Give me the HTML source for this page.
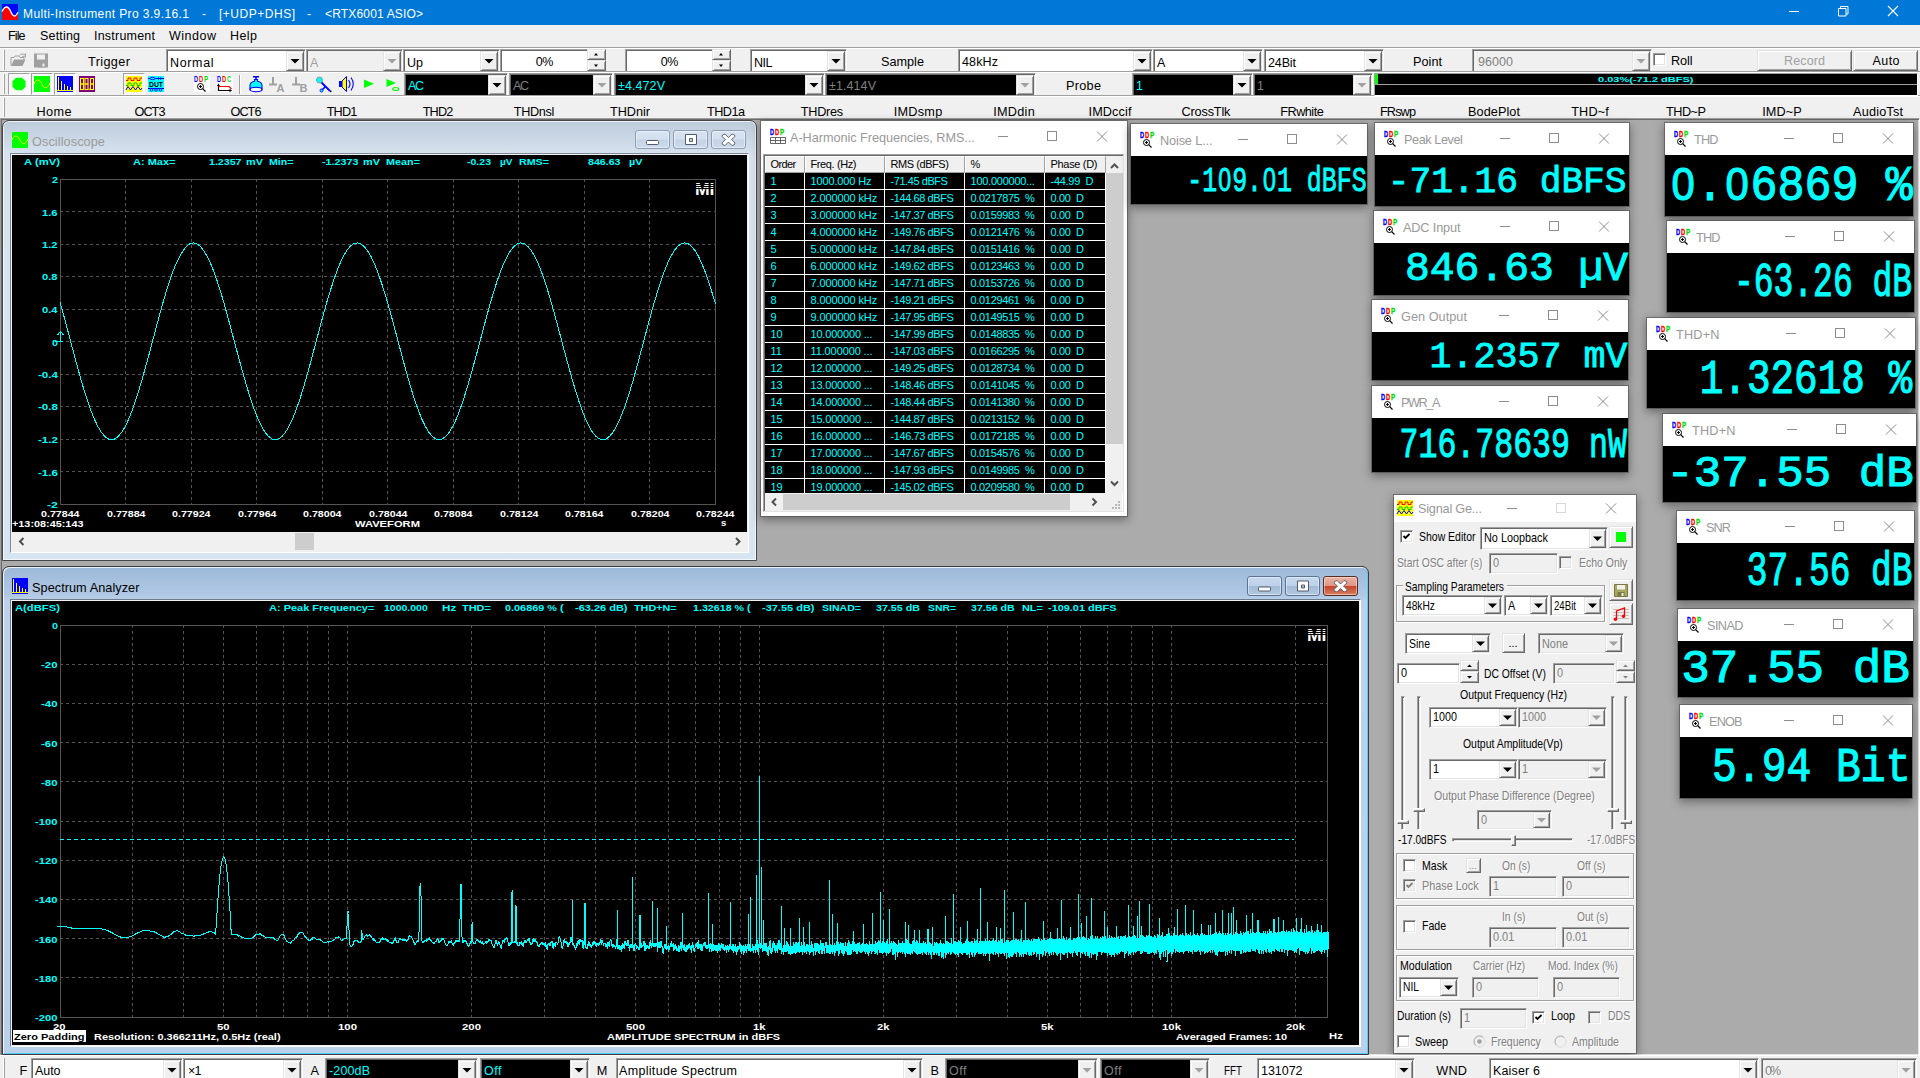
<!DOCTYPE html>
<html lang="en"><head><meta charset="utf-8"><title>Multi-Instrument Pro</title><style>
html,body{margin:0;padding:0}
body{width:1920px;height:1078px;overflow:hidden;background:#ababab;position:relative;font-family:'Liberation Sans',sans-serif;font-size:12px}
div{position:absolute;box-sizing:border-box}
.t{position:absolute;white-space:pre}
.a{position:absolute;overflow:visible}
.sunk{border:1px solid;border-color:#a0a0a0 #fff #fff #a0a0a0;box-shadow:inset 1px 1px 0 #696969,inset -1px -1px 0 #e3e3e3}
.sunk1{border:1px solid;border-color:#a0a0a0 #fff #fff #a0a0a0}
.btn{border:1px solid;border-color:#e3e3e3 #696969 #696969 #e3e3e3;box-shadow:inset 1px 1px 0 #fff,inset -1px -1px 0 #a0a0a0}
.pressed{border:1px solid;border-color:#a0a0a0 #fff #fff #a0a0a0}
.big{font-family:'Liberation Mono',monospace;color:#0ff;-webkit-text-stroke:.023em #0ff;transform-origin:100% 50%}
.z{font-family:'Liberation Sans',sans-serif;display:inline-block;font-size:.93em;width:.6452em;text-align:center;line-height:0}
.chk{border:1px solid;border-color:#a0a0a0 #fff #fff #a0a0a0;box-shadow:inset 1px 1px 0 #696969,inset -1px -1px 0 #e3e3e3}
</style></head><body>
<div style="left:0px;top:0px;width:1920px;height:25px;background:#0078d7;"></div>
<svg class="a" style="left:2px;top:4px" width="16" height="16"><rect width="16" height="16" fill="#00f"/><path d="M0 16V7.5C1.5 4.5 3.2 3 4.6 3C6.8 3 8 6 9.2 8.6C10.2 10.8 11.2 12 12.4 12C13.8 12 15 10.2 16 8.2V16z" fill="#f00"/><path d="M0 7.5C1.5 4.5 3.2 3 4.6 3C6.8 3 8 6 9.2 8.6C10.2 10.8 11.2 12 12.4 12C13.8 12 15 10.2 16 8.2" fill="none" stroke="#fff" stroke-width="1.3"/></svg>
<span class="t" style="left:23.00px;top:7px;font-size:12px;line-height:14px;color:#fff;letter-spacing:0.402px;">Multi-Instrument Pro 3.9.16.1</span>
<span class="t" style="left:202.00px;top:7px;font-size:12px;line-height:14px;color:#fff;">-</span>
<span class="t" style="left:219.00px;top:7px;font-size:12px;line-height:14px;color:#fff;letter-spacing:0.516px;">[+UDP+DHS]</span>
<span class="t" style="left:307.00px;top:7px;font-size:12px;line-height:14px;color:#fff;">-</span>
<span class="t" style="left:325.00px;top:7px;font-size:12px;line-height:14px;color:#fff;letter-spacing:0.166px;">&lt;RTX6001 ASIO&gt;</span>
<svg class="a" style="left:1780px;top:0" width="140" height="25"><path d="M9 11.5h10" stroke="#fff" stroke-width="1" fill="none"/><path d="M58.5 8.500h7.500v7.500h-7.500zM60.500 8.500v-2h7.500v7.500h-2" stroke="#fff" stroke-width="1" fill="none"/><path d="M108 6l10 10M118 6l-10 10" stroke="#fff" stroke-width="1.1" fill="none"/></svg>
<div style="left:0px;top:25px;width:1920px;height:22px;background:#f0f0f0;"></div>
<span class="t" style="left:8.00px;top:29px;font-size:12.5px;line-height:14px;color:#000;letter-spacing:-0.881px;">File</span>
<span class="t" style="left:40.00px;top:29px;font-size:12.5px;line-height:14px;color:#000;letter-spacing:0.181px;">Setting</span>
<span class="t" style="left:94.00px;top:29px;font-size:12.5px;line-height:14px;color:#000;letter-spacing:0.216px;">Instrument</span>
<span class="t" style="left:169.00px;top:29px;font-size:12.5px;line-height:14px;color:#000;letter-spacing:0.508px;">Window</span>
<span class="t" style="left:230.00px;top:29px;font-size:12.5px;line-height:14px;color:#000;letter-spacing:0.430px;">Help</span>
<div style="left:0px;top:47px;width:1920px;height:1px;background:#a0a0a0;"></div>
<div style="left:0px;top:48px;width:1920px;height:70px;background:#f0f0f0;"></div>
<div style="left:0px;top:48px;width:1920px;height:1px;background:#fff;"></div>
<div style="left:3px;top:50px;width:1px;height:20px;background:#fff;"></div>
<div style="left:4px;top:50px;width:1px;height:20px;background:#a0a0a0;"></div>
<div style="left:3px;top:74px;width:1px;height:20px;background:#fff;"></div>
<div style="left:4px;top:74px;width:1px;height:20px;background:#a0a0a0;"></div>
<div style="left:3px;top:98px;width:1px;height:19px;background:#fff;"></div>
<div style="left:4px;top:98px;width:1px;height:19px;background:#a0a0a0;"></div>
<svg class="a" style="left:10px;top:52px" width="40" height="17"><path d="M1 13.500V5.500h3l1-1.500h4l1 1.500h4v2" fill="none" stroke="#a0a0a0"/><path d="M1 14l3-6.500h11.500l-3 6.500z" fill="#a0a0a0"/><path d="M9.500 3.500c1.500-2 4-2 5.500-.5l.5-1.500v3.500h-3.500l1.500-1" fill="none" stroke="#a0a0a0"/><path d="M24 1.500h14v14h-14z" fill="#a0a0a0"/><rect x="27" y="2.500" width="8" height="5" fill="#f0f0f0"/><rect x="28" y="10.500" width="7" height="5" fill="#a0a0a0"/><rect x="32.500" y="11.500" width="2" height="3" fill="#f0f0f0"/></svg>
<span class="t" style="left:88.00px;top:55px;font-size:12.7px;line-height:14px;color:#000;letter-spacing:0.374px;">Trigger</span>
<div class="sunk" style="left:166px;top:49px;width:140px;height:24px;background:#fff;"></div>
<div class="btn" style="left:286px;top:51px;width:18px;height:20px;background:#f0f0f0;"></div>
<svg class="a" style="left:286px;top:51px" width="18" height="20"><path d="M4.5 8.0h9l-4.5 4.5z" fill="#000"/></svg>
<span class="t" style="left:170.00px;top:56px;font-size:12.5px;line-height:14px;color:#000;letter-spacing:0.643px;">Normal</span>
<div class="sunk" style="left:306px;top:49px;width:97px;height:24px;background:#f0f0f0;"></div>
<div class="btn" style="left:383px;top:51px;width:18px;height:20px;background:#f0f0f0;"></div>
<svg class="a" style="left:383px;top:51px" width="18" height="20"><path d="M4.5 8.0h9l-4.5 4.5z" fill="#a0a0a0"/></svg>
<span class="t" style="left:310.00px;top:56px;font-size:12.5px;line-height:14px;color:#a0a0a0;">A</span>
<div class="sunk" style="left:403px;top:49px;width:97px;height:24px;background:#fff;"></div>
<div class="btn" style="left:480px;top:51px;width:18px;height:20px;background:#f0f0f0;"></div>
<svg class="a" style="left:480px;top:51px" width="18" height="20"><path d="M4.5 8.0h9l-4.5 4.5z" fill="#000"/></svg>
<span class="t" style="left:407.00px;top:56px;font-size:12.5px;line-height:14px;color:#000;letter-spacing:0.021px;">Up</span>
<div class="sunk" style="left:500px;top:49px;width:89px;height:24px;background:#fff;"></div>
<span class="t" style="left:535.75px;top:55px;font-size:12.5px;line-height:14px;color:#000;letter-spacing:-0.566px;">0%</span>
<div class="btn" style="left:587px;top:49px;width:19px;height:11px;background:#f0f0f0;"></div>
<div class="btn" style="left:587px;top:60px;width:19px;height:11px;background:#f0f0f0;"></div>
<svg class="a" style="left:587px;top:49px" width="19" height="22"><path d="M7 6.500h4l-2-2.500zM7 15.500h4l-2 2.500z" fill="#000"/></svg>
<div class="sunk" style="left:625px;top:49px;width:89px;height:24px;background:#fff;"></div>
<span class="t" style="left:660.75px;top:55px;font-size:12.5px;line-height:14px;color:#000;letter-spacing:-0.566px;">0%</span>
<div class="btn" style="left:712px;top:49px;width:19px;height:11px;background:#f0f0f0;"></div>
<div class="btn" style="left:712px;top:60px;width:19px;height:11px;background:#f0f0f0;"></div>
<svg class="a" style="left:712px;top:49px" width="19" height="22"><path d="M7 6.500h4l-2-2.500zM7 15.500h4l-2 2.500z" fill="#000"/></svg>
<div class="sunk" style="left:750px;top:49px;width:97px;height:24px;background:#fff;"></div>
<div class="btn" style="left:827px;top:51px;width:18px;height:20px;background:#f0f0f0;"></div>
<svg class="a" style="left:827px;top:51px" width="18" height="20"><path d="M4.5 8.0h9l-4.5 4.5z" fill="#000"/></svg>
<span class="t" style="left:754.00px;top:56px;font-size:12.5px;line-height:14px;color:#000;letter-spacing:-0.476px;">NIL</span>
<span class="t" style="left:881.00px;top:55px;font-size:12.7px;line-height:14px;color:#000;letter-spacing:-0.013px;">Sample</span>
<div class="sunk" style="left:958px;top:49px;width:195px;height:24px;background:#fff;"></div>
<div class="btn" style="left:1133px;top:51px;width:18px;height:20px;background:#f0f0f0;"></div>
<svg class="a" style="left:1133px;top:51px" width="18" height="20"><path d="M4.5 8.0h9l-4.5 4.5z" fill="#000"/></svg>
<span class="t" style="left:962.00px;top:55px;font-size:12.5px;line-height:14px;color:#000;letter-spacing:0.142px;">48kHz</span>
<div class="sunk" style="left:1153px;top:49px;width:110px;height:24px;background:#fff;"></div>
<div class="btn" style="left:1243px;top:51px;width:18px;height:20px;background:#f0f0f0;"></div>
<svg class="a" style="left:1243px;top:51px" width="18" height="20"><path d="M4.5 8.0h9l-4.5 4.5z" fill="#000"/></svg>
<span class="t" style="left:1157.00px;top:56px;font-size:12.5px;line-height:14px;color:#000;">A</span>
<div class="sunk" style="left:1264px;top:49px;width:120px;height:24px;background:#fff;"></div>
<div class="btn" style="left:1364px;top:51px;width:18px;height:20px;background:#f0f0f0;"></div>
<svg class="a" style="left:1364px;top:51px" width="18" height="20"><path d="M4.5 8.0h9l-4.5 4.5z" fill="#000"/></svg>
<span class="t" style="left:1268.00px;top:56px;font-size:12.5px;line-height:14px;color:#000;letter-spacing:-0.123px;">24Bit</span>
<span class="t" style="left:1413.00px;top:55px;font-size:12.7px;line-height:14px;color:#000;letter-spacing:0.013px;">Point</span>
<div class="sunk" style="left:1472px;top:49px;width:180px;height:24px;background:#f0f0f0;"></div>
<div class="btn" style="left:1632px;top:51px;width:18px;height:20px;background:#f0f0f0;"></div>
<svg class="a" style="left:1632px;top:51px" width="18" height="20"><path d="M4.5 8.0h9l-4.5 4.5z" fill="#a0a0a0"/></svg>
<span class="t" style="left:1478.00px;top:55px;font-size:12.5px;line-height:14px;color:#808080;letter-spacing:0.060px;">96000</span>
<div class="chk" style="left:1653px;top:53px;width:13px;height:13px;background:#fff;"></div>
<span class="t" style="left:1671.00px;top:54px;font-size:12.7px;line-height:14px;color:#000;letter-spacing:-0.126px;">Roll</span>
<div class="btn" style="left:1757px;top:50px;width:95px;height:21px;background:#f0f0f0;"></div>
<span class="t" style="left:1784.00px;top:54px;font-size:12.5px;line-height:14px;color:#a0a0a0;letter-spacing:0.141px;">Record</span>
<div class="btn" style="left:1853px;top:50px;width:65px;height:21px;background:#f0f0f0;"></div>
<span class="t" style="left:1872.50px;top:54px;font-size:12.5px;line-height:14px;color:#000;letter-spacing:0.428px;">Auto</span>
<div class="pressed" style="left:8px;top:73px;width:22px;height:22px;background:#f8f8f8;"></div>
<div class="pressed" style="left:31px;top:73px;width:22px;height:22px;background:#f8f8f8;"></div>
<div class="pressed" style="left:54px;top:73px;width:22px;height:22px;background:#f8f8f8;"></div>
<div class="pressed" style="left:123px;top:73px;width:22px;height:22px;background:#f8f8f8;"></div>
<svg class="a" style="left:0;top:73px" width="404" height="22">
<path d="M16 4.800h6l3.500 3.500v5.400l-3.500 3.500h-6l-3.500-3.500v-5.400z" fill="#0f0"/>
<g transform="translate(34,3)"><rect width="16" height="16" fill="#0f0"/><path d="M0 8c1.500-4.500 5-6 7.500-.5s5.500 6 8.500-.5" fill="none" stroke="#ff0" stroke-width="1"/></g>
<g transform="translate(57,3)"><rect width="16" height="16" fill="#00f"/><path d="M1.500 1v13.500M4.500 5v9.500M7.500 8v6.500M10.500 10v4.500M13.500 11v3.500M0 14.500h16" stroke="#ff0" fill="none"/></g>
<g transform="translate(79,3)"><rect width="16" height="16" fill="#800080"/><g fill="none" stroke="#ff0" stroke-width="1"><rect x="1.500" y="2.500" width="3" height="5.500"/><rect x="1.500" y="8" width="3" height="5.500"/><rect x="6" y="2.500" width="3" height="5.500"/><rect x="6" y="8" width="3" height="5.500"/><rect x="11.500" y="2.500" width="3" height="5.500"/><rect x="11.500" y="8" width="3" height="5.500"/></g><rect x="9.700" y="12.500" width="1" height="1.500" fill="#ff0"/></g>
<g transform="translate(126,3)"><rect width="16" height="16" fill="#ff0"/><path d="M0 4.500h2v-2.500h3v2.500h3v-2.500h3v2.500h3v-2.500h2" fill="none" stroke="#f00"/><path d="M0 9.500h2v-2.500h3v2.500h3v-2.500h3v2.500h3v-2.500h2" fill="none" stroke="#0c0"/><path d="M0 14l2-3.500 2.500 3.500 2.500-3.500 2.500 3.500 2.500-3.500 2.500 3.500 1.500-2" fill="none" stroke="#00f"/></g>
<g transform="translate(148,3)"><rect width="16" height="16" fill="#0ff"/><path d="M0 2.500h16M0 12.500h16" stroke="#00f" fill="none"/><ellipse cx="4.500" cy="2.500" rx="2.500" ry="1.200" fill="#0ff" stroke="#00f"/><path d="M9 2.500l2-1.500v3zM14 2.500l-2-1.500v3z" fill="#00f"/><circle cx="3.500" cy="14" r="1.300" fill="#0ff" stroke="#00f" stroke-width=".8"/><circle cx="8" cy="14" r="1.300" fill="#0ff" stroke="#00f" stroke-width=".8"/><circle cx="12.500" cy="14" r="1.300" fill="#0ff" stroke="#00f" stroke-width=".8"/><text x="8" y="10.500" font-family="Liberation Sans,sans-serif" font-weight="bold" font-size="8" text-anchor="middle" fill="#000" textLength="14" lengthAdjust="spacingAndGlyphs">DUT</text></g>
<g transform="translate(194,3)"><rect width="16" height="16" fill="#fff"/><text x="0" y="6" fill="#00f" textLength="4.200" lengthAdjust="spacingAndGlyphs" font-family="Liberation Sans,sans-serif" font-weight="bold" font-size="8.400">D</text><text x="5" y="6" fill="#f00" textLength="4.200" lengthAdjust="spacingAndGlyphs" font-family="Liberation Sans,sans-serif" font-weight="bold" font-size="8.400">D</text><text x="10" y="6" fill="#0d0" textLength="4.200" lengthAdjust="spacingAndGlyphs" font-family="Liberation Sans,sans-serif" font-weight="bold" font-size="8.400">P</text><circle cx="6.500" cy="10.500" r="3" fill="none" stroke="#000"/><path d="M8.700 12.700l2.800 2.800" stroke="#000" stroke-width="1.200"/><path d="M5 10.500h3M6.500 9v3" stroke="#000" stroke-width="1"/></g>
<g transform="translate(217,3)"><rect width="16" height="16" fill="#fff"/><text x="0" y="6" fill="#00f" textLength="4.200" lengthAdjust="spacingAndGlyphs" font-family="Liberation Sans,sans-serif" font-weight="bold" font-size="8.400">D</text><text x="5" y="6" fill="#f00" textLength="4.200" lengthAdjust="spacingAndGlyphs" font-family="Liberation Sans,sans-serif" font-weight="bold" font-size="8.400">D</text><text x="10" y="6" fill="#0d0" textLength="4.200" lengthAdjust="spacingAndGlyphs" font-family="Liberation Sans,sans-serif" font-weight="bold" font-size="8.400">C</text><path d="M1.500 9v5.500h12" fill="none" stroke="#000" stroke-width="1.200"/><path d="M1.500 10.500h10.500l2.500 2.500" fill="none" stroke="#f00" stroke-width="1.200"/><path d="M0 10l1.500-2.500 1.500 2.500zM12.500 12.800l2.500 1.700-2.500 1.700z" fill="#000"/></g>
<path d="M239.500 2v19" stroke="#a0a0a0"/><path d="M240.500 2v19" stroke="#fff"/>
<g transform="translate(248,3)"><path d="M5 .800h6M8 .800v3" stroke="#00f" stroke-width="1.400" fill="none"/><path d="M6.500 3.500h3v1.800c3 .5 4.500 2.200 4.500 4.500v4h-12v-4c0-2.300 1.500-4 4.500-4.500z" fill="#0ff" stroke="#00f" stroke-width="1.100"/><ellipse cx="8" cy="13.500" rx="6" ry="2.200" fill="#fff" stroke="#00f" stroke-width="1.100"/></g>
<g transform="translate(269,3)"><path d="M4 1v7.500M0 8.500h8" stroke="#a0a0a0" stroke-width="2" fill="none"/><text x="7.500" y="15.500" font-family="Liberation Sans,sans-serif" font-weight="bold" font-size="11" fill="#a0a0a0">A</text></g>
<g transform="translate(292,3)"><path d="M4 1v7.500M0 8.500h8" stroke="#a0a0a0" stroke-width="2" fill="none"/><text x="7.500" y="15.500" font-family="Liberation Sans,sans-serif" font-weight="bold" font-size="11" fill="#a0a0a0">B</text></g>
<g transform="translate(316,3)"><path d="M5 6l9 9" stroke="#00f" stroke-width="1.800"/><path d="M9.500 10.500l-3.500 3.500" stroke="#00f" stroke-width="1.600"/><circle cx="3.500" cy="4" r="3" fill="#0ff" stroke="#888" stroke-width=".8"/><circle cx="5.500" cy="14.500" r="1.500" fill="#0ff" stroke="#00f" stroke-width=".9"/><circle cx="14.800" cy="15.300" r=".9" fill="#000"/></g>
<g transform="translate(338,3)"><rect x="1" y="5" width="3" height="6" fill="#00f"/><path d="M4 5l4.500-4.500v15l-4.500-4.500z" fill="#ff0" stroke="#00f" stroke-width="1"/><path d="M10.500 4q3 4 0 8M13 1.500q4.500 6.500 0 13" fill="none" stroke="#00f" stroke-width="1.100"/></g>
<path d="M364 6.500l10 4.200-10 4.200z" fill="#0f0"/>
<path d="M386.500 6l9.500 4-9.500 4z" fill="#0f0"/><ellipse cx="395.700" cy="16" rx="3" ry="1.500" fill="none" stroke="#0f0" stroke-width="1.200"/>
</svg>
<div class="sunk" style="left:404px;top:73px;width:104px;height:24px;background:#000;"></div>
<div class="btn" style="left:488px;top:75px;width:18px;height:20px;background:#f0f0f0;"></div>
<svg class="a" style="left:488px;top:75px" width="18" height="20"><path d="M4.5 8.0h9l-4.5 4.5z" fill="#000"/></svg>
<span class="t" style="left:408.00px;top:79px;font-size:12.5px;line-height:14px;color:#0ff;letter-spacing:-1.365px;">AC</span>
<div class="sunk" style="left:509px;top:73px;width:104px;height:24px;background:#000;"></div>
<div class="btn" style="left:593px;top:75px;width:18px;height:20px;background:#f0f0f0;"></div>
<svg class="a" style="left:593px;top:75px" width="18" height="20"><path d="M4.5 8.0h9l-4.5 4.5z" fill="#a0a0a0"/></svg>
<span class="t" style="left:513.00px;top:79px;font-size:12.5px;line-height:14px;color:#808080;letter-spacing:-1.365px;">AC</span>
<div class="sunk" style="left:614px;top:73px;width:211px;height:24px;background:#000;"></div>
<div class="btn" style="left:805px;top:75px;width:18px;height:20px;background:#f0f0f0;"></div>
<svg class="a" style="left:805px;top:75px" width="18" height="20"><path d="M4.5 8.0h9l-4.5 4.5z" fill="#000"/></svg>
<span class="t" style="left:618.00px;top:79px;font-size:12.5px;line-height:14px;color:#0ff;letter-spacing:0.087px;">±4.472V</span>
<div class="sunk" style="left:825px;top:73px;width:211px;height:24px;background:#000;"></div>
<div class="btn" style="left:1016px;top:75px;width:18px;height:20px;background:#f0f0f0;"></div>
<svg class="a" style="left:1016px;top:75px" width="18" height="20"><path d="M4.5 8.0h9l-4.5 4.5z" fill="#a0a0a0"/></svg>
<span class="t" style="left:829.00px;top:79px;font-size:12.5px;line-height:14px;color:#808080;letter-spacing:0.087px;">±1.414V</span>
<span class="t" style="left:1066.00px;top:79px;font-size:12.7px;line-height:14px;color:#000;letter-spacing:0.277px;">Probe</span>
<div class="sunk" style="left:1132px;top:73px;width:121px;height:24px;background:#000;"></div>
<div class="btn" style="left:1233px;top:75px;width:18px;height:20px;background:#f0f0f0;"></div>
<svg class="a" style="left:1233px;top:75px" width="18" height="20"><path d="M4.5 8.0h9l-4.5 4.5z" fill="#000"/></svg>
<span class="t" style="left:1136.00px;top:79px;font-size:12.5px;line-height:14px;color:#0ff;">1</span>
<div class="sunk" style="left:1253px;top:73px;width:120px;height:24px;background:#000;"></div>
<div class="btn" style="left:1353px;top:75px;width:18px;height:20px;background:#f0f0f0;"></div>
<svg class="a" style="left:1353px;top:75px" width="18" height="20"><path d="M4.5 8.0h9l-4.5 4.5z" fill="#a0a0a0"/></svg>
<span class="t" style="left:1257.00px;top:79px;font-size:12.5px;line-height:14px;color:#808080;">1</span>
<div style="left:0px;top:71px;width:1920px;height:1px;background:#a0a0a0;"></div>
<div style="left:0px;top:72px;width:1920px;height:1px;background:#fff;"></div>
<div style="left:0px;top:95px;width:1920px;height:1px;background:#a0a0a0;"></div>
<div style="left:0px;top:96px;width:1920px;height:1px;background:#fff;"></div>
<div class="sunk1" style="left:1374px;top:73px;width:544px;height:23px;background:#000;"></div>
<div style="left:1375px;top:84px;width:542px;height:1px;background:#a0a0a0;"></div>
<div style="left:1375px;top:74px;width:3px;height:10px;background:#0f0;"></div>
<span class="t" style="left:1598.00px;top:75px;font-size:8px;line-height:9px;color:#0ff;font-weight:bold;transform:scaleX(1.3769);transform-origin:0 50%;">0.03%(-71.2 dBFS)</span>
<span class="t" style="left:36.50px;top:105px;font-size:12.7px;line-height:14px;color:#000;letter-spacing:0.374px;">Home</span>
<span class="t" style="left:134.50px;top:105px;font-size:12.7px;line-height:14px;color:#000;letter-spacing:-0.957px;">OCT3</span>
<span class="t" style="left:230.50px;top:105px;font-size:12.7px;line-height:14px;color:#000;letter-spacing:-0.957px;">OCT6</span>
<span class="t" style="left:326.75px;top:105px;font-size:12.7px;line-height:14px;color:#000;letter-spacing:-0.888px;">THD1</span>
<span class="t" style="left:422.75px;top:105px;font-size:12.7px;line-height:14px;color:#000;letter-spacing:-0.888px;">THD2</span>
<span class="t" style="left:513.75px;top:105px;font-size:12.7px;line-height:14px;color:#000;letter-spacing:-0.367px;">THDnsl</span>
<span class="t" style="left:610.00px;top:105px;font-size:12.7px;line-height:14px;color:#000;letter-spacing:-0.043px;">THDnir</span>
<span class="t" style="left:707.00px;top:105px;font-size:12.7px;line-height:14px;color:#000;letter-spacing:-0.557px;">THD1a</span>
<span class="t" style="left:800.75px;top:105px;font-size:12.7px;line-height:14px;color:#000;letter-spacing:-0.249px;">THDres</span>
<span class="t" style="left:893.75px;top:105px;font-size:12.7px;line-height:14px;color:#000;letter-spacing:0.245px;">IMDsmp</span>
<span class="t" style="left:993.25px;top:105px;font-size:12.7px;line-height:14px;color:#000;letter-spacing:0.254px;">IMDdin</span>
<span class="t" style="left:1088.50px;top:105px;font-size:12.7px;line-height:14px;color:#000;letter-spacing:0.112px;">IMDccif</span>
<span class="t" style="left:1181.50px;top:105px;font-size:12.7px;line-height:14px;color:#000;letter-spacing:-0.156px;">CrossTlk</span>
<span class="t" style="left:1280.25px;top:105px;font-size:12.7px;line-height:14px;color:#000;letter-spacing:-0.513px;">FRwhite</span>
<span class="t" style="left:1380.00px;top:105px;font-size:12.7px;line-height:14px;color:#000;letter-spacing:-0.879px;">FRswp</span>
<span class="t" style="left:1468.00px;top:105px;font-size:12.7px;line-height:14px;color:#000;letter-spacing:0.065px;">BodePlot</span>
<span class="t" style="left:1571.25px;top:105px;font-size:12.7px;line-height:14px;color:#000;letter-spacing:0.113px;">THD~f</span>
<span class="t" style="left:1666.00px;top:105px;font-size:12.7px;line-height:14px;color:#000;letter-spacing:-0.497px;">THD~P</span>
<span class="t" style="left:1762.25px;top:105px;font-size:12.7px;line-height:14px;color:#000;letter-spacing:0.083px;">IMD~P</span>
<span class="t" style="left:1853.00px;top:105px;font-size:12.7px;line-height:14px;color:#000;letter-spacing:0.184px;">AudioTst</span>
<div style="left:0px;top:118px;width:1920px;height:938px;background:#ababab;border:1px solid;border-color:#a0a0a0 #fff #fff #a0a0a0;box-shadow:inset 1px 1px 0 #696969,inset -1px -1px 0 #e3e3e3;"></div>
<div style="left:2px;top:120px;width:755px;height:441px;background:linear-gradient(#bccbdc 0,#cdd9e7 20px,#d8e3ef 34px,#d7e4f2 100%);border:1px solid #474747;border-radius:7px 7px 0 0;box-shadow:inset 0 0 0 1px rgba(255,255,255,.7);"></div>
<svg class="a" style="left:12px;top:132px" width="16" height="16"><rect width="16" height="16" fill="#0f0"/><path d="M0 8c1.500-4.500 5-6 7.500-.5s5.500 6 8.500-.5" fill="none" stroke="#ff0"/></svg>
<span class="t" style="left:32.00px;top:135px;font-size:12.7px;line-height:14px;color:#9a9a9a;letter-spacing:0.091px;">Oscilloscope</span>
<div style="left:635px;top:130px;width:35px;height:19px;background:none;background:linear-gradient(#d9e4f1 0,#d2dfee 47%,#c4d3e5 53%,#cddbeb 100%);border:1px solid #8d9db5;border-radius:3px;box-shadow:inset 0 0 0 1px rgba(255,255,255,.45);"></div>
<div style="left:673px;top:130px;width:35px;height:19px;background:none;background:linear-gradient(#d9e4f1 0,#d2dfee 47%,#c4d3e5 53%,#cddbeb 100%);border:1px solid #8d9db5;border-radius:3px;box-shadow:inset 0 0 0 1px rgba(255,255,255,.45);"></div>
<div style="left:711px;top:130px;width:35px;height:19px;background:none;background:linear-gradient(#d9e4f1 0,#d2dfee 47%,#c4d3e5 53%,#cddbeb 100%);border:1px solid #8d9db5;border-radius:3px;box-shadow:inset 0 0 0 1px rgba(255,255,255,.45);"></div>
<svg class="a" style="left:635px;top:130px" width="111" height="20"><rect x="11.500" y="10.5" width="12" height="4" rx="1" fill="#fff" stroke="#535a6a" stroke-width="1"/><path d="M50.500 4.5h11v10h-11zM54.500 8.5h3v3h-3z" fill="#fff" fill-rule="evenodd" stroke="#535a6a" stroke-width="1"/><path transform="translate(0,0)" d="M87.500 5l2.500-1 3.500 3.500 3.500-3.500 2.500 1 .5 1.500-3.500 3 3.500 3.500-.5 1.500-2.500 1-3.500-3.500-3.500 3.500-2.500-1-.5-1.500 3.500-3.500-3.500-3z" fill="#fff" stroke="#535a6a" stroke-width=".9"/></svg>
<div style="left:10px;top:153px;width:739px;height:400px;background:#f0f0f0;border:1px solid;border-color:#7f8a99 #fff #fff #7f8a99;"></div>
<div style="left:12px;top:155px;width:735px;height:377px;background:#000;"></div>
<div style="left:12px;top:532px;width:735px;height:19px;background:#f0f0f0;"></div>
<div style="left:295px;top:533px;width:19px;height:17px;background:#cdcdcd;"></div>
<svg class="a" style="left:12px;top:532px" width="735" height="19"><path d="M11.500 6l-3.500 3.500 3.500 3.500M724 6l3.500 3.500-3.500 3.500" fill="none" stroke="#505050" stroke-width="2"/></svg>
<svg class="a" style="left:0;top:0" width="760" height="560" shape-rendering="crispEdges"><rect x="60.5" y="179.5" width="655" height="325" fill="none" stroke="#545454"/><path d="M125.5 179V504M60 211.5H715M191.5 179V504M60 244.5H715M256.5 179V504M60 276.5H715M322.5 179V504M60 309.5H715M387.5 179V504M60 341.5H715M453.5 179V504M60 374.5H715M518.5 179V504M60 406.5H715M584.5 179V504M60 439.5H715M649.5 179V504M60 471.5H715" stroke="#545454" stroke-dasharray="3 3" fill="none"/><clipPath id="oc"><rect x="60" y="179" width="656" height="325"/></clipPath><polyline clip-path="url(#oc)" fill="none" stroke="#0ff" stroke-width="1" points="56.9,292.1 60.4,303.6 63.8,315.8 67.2,328.5 70.6,341.3 74.0,354.1 77.4,366.8 80.8,379.0 84.2,390.5 87.6,401.2 91.1,410.9 94.5,419.4 97.9,426.5 101.3,432.2 104.7,436.3 108.1,438.9 111.5,439.7 114.9,438.9 118.3,436.3 121.8,432.2 125.2,426.5 128.6,419.4 132.0,410.9 135.4,401.2 138.8,390.5 142.2,379.0 145.6,366.8 149.1,354.1 152.5,341.3 155.9,328.5 159.3,315.8 162.7,303.6 166.1,292.1 169.5,281.4 172.9,271.7 176.3,263.2 179.8,256.1 183.2,250.4 186.6,246.3 190.0,243.7 193.4,242.9 196.8,243.7 200.2,246.3 203.6,250.4 207.0,256.1 210.5,263.2 213.9,271.7 217.3,281.4 220.7,292.1 224.1,303.6 227.5,315.8 230.9,328.5 234.3,341.3 237.7,354.1 241.2,366.8 244.6,379.0 248.0,390.5 251.4,401.2 254.8,410.9 258.2,419.4 261.6,426.5 265.0,432.2 268.5,436.3 271.9,438.9 275.3,439.7 278.7,438.9 282.1,436.3 285.5,432.2 288.9,426.5 292.3,419.4 295.7,410.9 299.2,401.2 302.6,390.5 306.0,379.0 309.4,366.8 312.8,354.1 316.2,341.3 319.6,328.5 323.0,315.8 326.4,303.6 329.9,292.1 333.3,281.4 336.7,271.7 340.1,263.2 343.5,256.1 346.9,250.4 350.3,246.3 353.7,243.7 357.1,242.9 360.6,243.7 364.0,246.3 367.4,250.4 370.8,256.1 374.2,263.2 377.6,271.7 381.0,281.4 384.4,292.1 387.9,303.6 391.3,315.8 394.7,328.5 398.1,341.3 401.5,354.1 404.9,366.8 408.3,379.0 411.7,390.5 415.1,401.2 418.6,410.9 422.0,419.4 425.4,426.5 428.8,432.2 432.2,436.3 435.6,438.9 439.0,439.7 442.4,438.9 445.8,436.3 449.3,432.2 452.7,426.5 456.1,419.4 459.5,410.9 462.9,401.2 466.3,390.5 469.7,379.0 473.1,366.8 476.6,354.1 480.0,341.3 483.4,328.5 486.8,315.8 490.2,303.6 493.6,292.1 497.0,281.4 500.4,271.7 503.8,263.2 507.3,256.1 510.7,250.4 514.1,246.3 517.5,243.7 520.9,242.9 524.3,243.7 527.7,246.3 531.1,250.4 534.5,256.1 538.0,263.2 541.4,271.7 544.8,281.4 548.2,292.1 551.6,303.6 555.0,315.8 558.4,328.5 561.8,341.3 565.2,354.1 568.7,366.8 572.1,379.0 575.5,390.5 578.9,401.2 582.3,410.9 585.7,419.4 589.1,426.5 592.5,432.2 596.0,436.3 599.4,438.9 602.8,439.7 606.2,438.9 609.6,436.3 613.0,432.2 616.4,426.5 619.8,419.4 623.2,410.9 626.7,401.2 630.1,390.5 633.5,379.0 636.9,366.8 640.3,354.1 643.7,341.3 647.1,328.5 650.5,315.8 653.9,303.6 657.4,292.1 660.8,281.4 664.2,271.7 667.6,263.2 671.0,256.1 674.4,250.4 677.8,246.3 681.2,243.7 684.6,242.9 688.1,243.7 691.5,246.3 694.9,250.4 698.3,256.1 701.7,263.2 705.1,271.7 708.5,281.4 711.9,292.1 715.4,303.6"/><path d="M60.500 332v10M57.500 335l3-3.500 3 3.500M55 341.500h8" stroke="#0ff" fill="none" stroke-width="1"/></svg>
<svg class="a" style="left:695px;top:183px" width="20" height="12"><text x="0" y="11.800" font-family="Liberation Sans,sans-serif" font-weight="bold" font-size="16" fill="#fff" textLength="19.500" lengthAdjust="spacingAndGlyphs">MI</text><path d="M0 1.500h20M0 3.500h20M0 5.500h20" stroke="#000" stroke-width="1"/></svg>
<span class="t" style="left:24.00px;top:156px;font-size:9.6px;line-height:11px;color:#0ff;font-weight:bold;transform:scaleX(1.1773);transform-origin:0 50%;">A (mV)</span>
<span class="t" style="left:133.00px;top:156px;font-size:9.6px;line-height:11px;color:#0ff;font-weight:bold;transform:scaleX(1.1462);transform-origin:0 50%;">A: Max=</span>
<span class="t" style="left:208.50px;top:156px;font-size:9.6px;line-height:11px;color:#0ff;font-weight:bold;transform:scaleX(1.1068);transform-origin:0 50%;">1.2357</span>
<span class="t" style="left:245.50px;top:156px;font-size:9.6px;line-height:11px;color:#0ff;font-weight:bold;transform:scaleX(1.1379);transform-origin:0 50%;">mV</span>
<span class="t" style="left:268.50px;top:156px;font-size:9.6px;line-height:11px;color:#0ff;font-weight:bold;transform:scaleX(1.1069);transform-origin:0 50%;">Min=</span>
<span class="t" style="left:322.00px;top:156px;font-size:9.6px;line-height:11px;color:#0ff;font-weight:bold;transform:scaleX(1.1210);transform-origin:0 50%;">-1.2373</span>
<span class="t" style="left:363.00px;top:156px;font-size:9.6px;line-height:11px;color:#0ff;font-weight:bold;transform:scaleX(1.1379);transform-origin:0 50%;">mV</span>
<span class="t" style="left:386.00px;top:156px;font-size:9.6px;line-height:11px;color:#0ff;font-weight:bold;transform:scaleX(1.1278);transform-origin:0 50%;">Mean=</span>
<span class="t" style="left:467.00px;top:156px;font-size:9.6px;line-height:11px;color:#0ff;font-weight:bold;transform:scaleX(1.0968);transform-origin:0 50%;">-0.23</span>
<span class="t" style="left:500.00px;top:156px;font-size:9.6px;line-height:11px;color:#0ff;font-weight:bold;transform:scaleX(1.0474);transform-origin:0 50%;">µV</span>
<span class="t" style="left:519.00px;top:156px;font-size:9.6px;line-height:11px;color:#0ff;font-weight:bold;transform:scaleX(1.1136);transform-origin:0 50%;">RMS=</span>
<span class="t" style="left:588.00px;top:156px;font-size:9.6px;line-height:11px;color:#0ff;font-weight:bold;transform:scaleX(1.1068);transform-origin:0 50%;">846.63</span>
<span class="t" style="left:629.00px;top:156px;font-size:9.6px;line-height:11px;color:#0ff;font-weight:bold;transform:scaleX(1.1312);transform-origin:0 50%;">µV</span>
<span class="t" style="left:51.80px;top:174px;font-size:9.8px;line-height:11px;color:#0ff;font-weight:bold;transform:scaleX(1.1008);transform-origin:0 50%;">2</span>
<span class="t" style="left:42.30px;top:207px;font-size:9.8px;line-height:11px;color:#0ff;font-weight:bold;transform:scaleX(1.1377);transform-origin:0 50%;">1.6</span>
<span class="t" style="left:42.30px;top:239px;font-size:9.8px;line-height:11px;color:#0ff;font-weight:bold;transform:scaleX(1.1377);transform-origin:0 50%;">1.2</span>
<span class="t" style="left:42.30px;top:271px;font-size:9.8px;line-height:11px;color:#0ff;font-weight:bold;transform:scaleX(1.1377);transform-origin:0 50%;">0.8</span>
<span class="t" style="left:42.30px;top:304px;font-size:9.8px;line-height:11px;color:#0ff;font-weight:bold;transform:scaleX(1.1377);transform-origin:0 50%;">0.4</span>
<span class="t" style="left:51.80px;top:337px;font-size:9.8px;line-height:11px;color:#0ff;font-weight:bold;transform:scaleX(1.1008);transform-origin:0 50%;">0</span>
<span class="t" style="left:37.80px;top:369px;font-size:9.8px;line-height:11px;color:#0ff;font-weight:bold;transform:scaleX(1.1843);transform-origin:0 50%;">-0.4</span>
<span class="t" style="left:37.80px;top:401px;font-size:9.8px;line-height:11px;color:#0ff;font-weight:bold;transform:scaleX(1.1843);transform-origin:0 50%;">-0.8</span>
<span class="t" style="left:37.80px;top:434px;font-size:9.8px;line-height:11px;color:#0ff;font-weight:bold;transform:scaleX(1.1843);transform-origin:0 50%;">-1.2</span>
<span class="t" style="left:37.80px;top:467px;font-size:9.8px;line-height:11px;color:#0ff;font-weight:bold;transform:scaleX(1.1843);transform-origin:0 50%;">-1.6</span>
<span class="t" style="left:46.80px;top:499px;font-size:9.8px;line-height:11px;color:#0ff;font-weight:bold;transform:scaleX(1.2623);transform-origin:0 50%;">-2</span>
<span class="t" style="left:41.25px;top:508px;font-size:9.6px;line-height:11px;color:#fff;font-weight:bold;transform:scaleX(1.1094);transform-origin:0 50%;">0.77844</span>
<span class="t" style="left:106.75px;top:508px;font-size:9.6px;line-height:11px;color:#fff;font-weight:bold;transform:scaleX(1.1094);transform-origin:0 50%;">0.77884</span>
<span class="t" style="left:172.25px;top:508px;font-size:9.6px;line-height:11px;color:#fff;font-weight:bold;transform:scaleX(1.1094);transform-origin:0 50%;">0.77924</span>
<span class="t" style="left:237.75px;top:508px;font-size:9.6px;line-height:11px;color:#fff;font-weight:bold;transform:scaleX(1.1094);transform-origin:0 50%;">0.77964</span>
<span class="t" style="left:303.25px;top:508px;font-size:9.6px;line-height:11px;color:#fff;font-weight:bold;transform:scaleX(1.1094);transform-origin:0 50%;">0.78004</span>
<span class="t" style="left:368.75px;top:508px;font-size:9.6px;line-height:11px;color:#fff;font-weight:bold;transform:scaleX(1.1094);transform-origin:0 50%;">0.78044</span>
<span class="t" style="left:434.25px;top:508px;font-size:9.6px;line-height:11px;color:#fff;font-weight:bold;transform:scaleX(1.1094);transform-origin:0 50%;">0.78084</span>
<span class="t" style="left:499.75px;top:508px;font-size:9.6px;line-height:11px;color:#fff;font-weight:bold;transform:scaleX(1.1094);transform-origin:0 50%;">0.78124</span>
<span class="t" style="left:565.25px;top:508px;font-size:9.6px;line-height:11px;color:#fff;font-weight:bold;transform:scaleX(1.1094);transform-origin:0 50%;">0.78164</span>
<span class="t" style="left:630.75px;top:508px;font-size:9.6px;line-height:11px;color:#fff;font-weight:bold;transform:scaleX(1.1094);transform-origin:0 50%;">0.78204</span>
<span class="t" style="left:696.25px;top:508px;font-size:9.6px;line-height:11px;color:#fff;font-weight:bold;transform:scaleX(1.1094);transform-origin:0 50%;">0.78244</span>
<span class="t" style="left:12.00px;top:518px;font-size:9.6px;line-height:11px;color:#fff;font-weight:bold;transform:scaleX(1.1304);transform-origin:0 50%;">+13:08:45:143</span>
<span class="t" style="left:355.00px;top:518px;font-size:9.6px;line-height:11px;color:#fff;font-weight:bold;transform:scaleX(1.1645);transform-origin:0 50%;">WAVEFORM</span>
<span class="t" style="left:721.00px;top:517px;font-size:9.6px;line-height:11px;color:#fff;font-weight:bold;">s</span>
<div style="left:761px;top:121px;width:366px;height:395px;background:#fff;box-shadow:0 0 0 1px rgba(70,70,70,.55),0 3px 9px 1px rgba(0,0,0,.38);"></div>
<svg class="a" style="left:770px;top:129px" width="16" height="16"><g font-family="Liberation Sans,sans-serif" font-weight="bold" font-size="8.400"><text x="0" y="6" fill="#00f" stroke="#00f" stroke-width=".350" textLength="4.200" lengthAdjust="spacingAndGlyphs">D</text><text x="5" y="6" fill="#f00" stroke="#f00" stroke-width=".350" textLength="4.200" lengthAdjust="spacingAndGlyphs">D</text><text x="10" y="6" fill="#0d0" stroke="#0d0" stroke-width=".350" textLength="4.200" lengthAdjust="spacingAndGlyphs">P</text></g><path d="M.5 8.500h15v6h-15zM.5 11.500h15M5.500 8.500v6M10.500 8.500v6" fill="none" stroke="#666"/></svg>
<span class="t" style="left:790.00px;top:131px;font-size:12.7px;line-height:14px;color:#999;letter-spacing:-0.046px;">A-Harmonic Frequencies, RMS...</span>
<svg class="a" style="left:761px;top:121px" width="366" height="32"><path d="M237 15.500h10" stroke="#8c8c8c" fill="none"/><rect x="286.5" y="10.500" width="9" height="9" stroke="#8c8c8c" fill="none"/><path d="M336 10.500l10 10M346 10.500l-10 10" stroke="#8c8c8c" fill="none"/></svg>
<div style="left:763px;top:154px;width:361px;height:358px;background:#fff;border:1px solid;border-color:#a0a0a0 #e3e3e3 #e3e3e3 #a0a0a0;box-shadow:inset 1px 1px 0 #696969;"></div>
<div style="left:765px;top:156px;width:341px;height:337px;overflow:hidden;background:#fff">
<div style="left:0px;top:0;width:40px;height:17px;background:#f0f0f0;border:1px solid;border-color:#fff #a0a0a0 #a0a0a0 #fff"></div>
<div style="left:40px;top:0;width:80px;height:17px;background:#f0f0f0;border:1px solid;border-color:#fff #a0a0a0 #a0a0a0 #fff"></div>
<div style="left:120px;top:0;width:80px;height:17px;background:#f0f0f0;border:1px solid;border-color:#fff #a0a0a0 #a0a0a0 #fff"></div>
<div style="left:200px;top:0;width:80px;height:17px;background:#f0f0f0;border:1px solid;border-color:#fff #a0a0a0 #a0a0a0 #fff"></div>
<div style="left:280px;top:0;width:61px;height:17px;background:#f0f0f0;border:1px solid;border-color:#fff #a0a0a0 #a0a0a0 #fff"></div>
<div style="left:0px;top:17px;width:39px;height:16px;background:#000"></div>
<div style="left:40px;top:17px;width:79px;height:16px;background:#000"></div>
<div style="left:120px;top:17px;width:79px;height:16px;background:#000"></div>
<div style="left:200px;top:17px;width:79px;height:16px;background:#000"></div>
<div style="left:280px;top:17px;width:60px;height:16px;background:#000"></div>
<div style="left:0px;top:34px;width:39px;height:16px;background:#000"></div>
<div style="left:40px;top:34px;width:79px;height:16px;background:#000"></div>
<div style="left:120px;top:34px;width:79px;height:16px;background:#000"></div>
<div style="left:200px;top:34px;width:79px;height:16px;background:#000"></div>
<div style="left:280px;top:34px;width:60px;height:16px;background:#000"></div>
<div style="left:0px;top:51px;width:39px;height:16px;background:#000"></div>
<div style="left:40px;top:51px;width:79px;height:16px;background:#000"></div>
<div style="left:120px;top:51px;width:79px;height:16px;background:#000"></div>
<div style="left:200px;top:51px;width:79px;height:16px;background:#000"></div>
<div style="left:280px;top:51px;width:60px;height:16px;background:#000"></div>
<div style="left:0px;top:68px;width:39px;height:16px;background:#000"></div>
<div style="left:40px;top:68px;width:79px;height:16px;background:#000"></div>
<div style="left:120px;top:68px;width:79px;height:16px;background:#000"></div>
<div style="left:200px;top:68px;width:79px;height:16px;background:#000"></div>
<div style="left:280px;top:68px;width:60px;height:16px;background:#000"></div>
<div style="left:0px;top:85px;width:39px;height:16px;background:#000"></div>
<div style="left:40px;top:85px;width:79px;height:16px;background:#000"></div>
<div style="left:120px;top:85px;width:79px;height:16px;background:#000"></div>
<div style="left:200px;top:85px;width:79px;height:16px;background:#000"></div>
<div style="left:280px;top:85px;width:60px;height:16px;background:#000"></div>
<div style="left:0px;top:102px;width:39px;height:16px;background:#000"></div>
<div style="left:40px;top:102px;width:79px;height:16px;background:#000"></div>
<div style="left:120px;top:102px;width:79px;height:16px;background:#000"></div>
<div style="left:200px;top:102px;width:79px;height:16px;background:#000"></div>
<div style="left:280px;top:102px;width:60px;height:16px;background:#000"></div>
<div style="left:0px;top:119px;width:39px;height:16px;background:#000"></div>
<div style="left:40px;top:119px;width:79px;height:16px;background:#000"></div>
<div style="left:120px;top:119px;width:79px;height:16px;background:#000"></div>
<div style="left:200px;top:119px;width:79px;height:16px;background:#000"></div>
<div style="left:280px;top:119px;width:60px;height:16px;background:#000"></div>
<div style="left:0px;top:136px;width:39px;height:16px;background:#000"></div>
<div style="left:40px;top:136px;width:79px;height:16px;background:#000"></div>
<div style="left:120px;top:136px;width:79px;height:16px;background:#000"></div>
<div style="left:200px;top:136px;width:79px;height:16px;background:#000"></div>
<div style="left:280px;top:136px;width:60px;height:16px;background:#000"></div>
<div style="left:0px;top:153px;width:39px;height:16px;background:#000"></div>
<div style="left:40px;top:153px;width:79px;height:16px;background:#000"></div>
<div style="left:120px;top:153px;width:79px;height:16px;background:#000"></div>
<div style="left:200px;top:153px;width:79px;height:16px;background:#000"></div>
<div style="left:280px;top:153px;width:60px;height:16px;background:#000"></div>
<div style="left:0px;top:170px;width:39px;height:16px;background:#000"></div>
<div style="left:40px;top:170px;width:79px;height:16px;background:#000"></div>
<div style="left:120px;top:170px;width:79px;height:16px;background:#000"></div>
<div style="left:200px;top:170px;width:79px;height:16px;background:#000"></div>
<div style="left:280px;top:170px;width:60px;height:16px;background:#000"></div>
<div style="left:0px;top:187px;width:39px;height:16px;background:#000"></div>
<div style="left:40px;top:187px;width:79px;height:16px;background:#000"></div>
<div style="left:120px;top:187px;width:79px;height:16px;background:#000"></div>
<div style="left:200px;top:187px;width:79px;height:16px;background:#000"></div>
<div style="left:280px;top:187px;width:60px;height:16px;background:#000"></div>
<div style="left:0px;top:204px;width:39px;height:16px;background:#000"></div>
<div style="left:40px;top:204px;width:79px;height:16px;background:#000"></div>
<div style="left:120px;top:204px;width:79px;height:16px;background:#000"></div>
<div style="left:200px;top:204px;width:79px;height:16px;background:#000"></div>
<div style="left:280px;top:204px;width:60px;height:16px;background:#000"></div>
<div style="left:0px;top:221px;width:39px;height:16px;background:#000"></div>
<div style="left:40px;top:221px;width:79px;height:16px;background:#000"></div>
<div style="left:120px;top:221px;width:79px;height:16px;background:#000"></div>
<div style="left:200px;top:221px;width:79px;height:16px;background:#000"></div>
<div style="left:280px;top:221px;width:60px;height:16px;background:#000"></div>
<div style="left:0px;top:238px;width:39px;height:16px;background:#000"></div>
<div style="left:40px;top:238px;width:79px;height:16px;background:#000"></div>
<div style="left:120px;top:238px;width:79px;height:16px;background:#000"></div>
<div style="left:200px;top:238px;width:79px;height:16px;background:#000"></div>
<div style="left:280px;top:238px;width:60px;height:16px;background:#000"></div>
<div style="left:0px;top:255px;width:39px;height:16px;background:#000"></div>
<div style="left:40px;top:255px;width:79px;height:16px;background:#000"></div>
<div style="left:120px;top:255px;width:79px;height:16px;background:#000"></div>
<div style="left:200px;top:255px;width:79px;height:16px;background:#000"></div>
<div style="left:280px;top:255px;width:60px;height:16px;background:#000"></div>
<div style="left:0px;top:272px;width:39px;height:16px;background:#000"></div>
<div style="left:40px;top:272px;width:79px;height:16px;background:#000"></div>
<div style="left:120px;top:272px;width:79px;height:16px;background:#000"></div>
<div style="left:200px;top:272px;width:79px;height:16px;background:#000"></div>
<div style="left:280px;top:272px;width:60px;height:16px;background:#000"></div>
<div style="left:0px;top:289px;width:39px;height:16px;background:#000"></div>
<div style="left:40px;top:289px;width:79px;height:16px;background:#000"></div>
<div style="left:120px;top:289px;width:79px;height:16px;background:#000"></div>
<div style="left:200px;top:289px;width:79px;height:16px;background:#000"></div>
<div style="left:280px;top:289px;width:60px;height:16px;background:#000"></div>
<div style="left:0px;top:306px;width:39px;height:16px;background:#000"></div>
<div style="left:40px;top:306px;width:79px;height:16px;background:#000"></div>
<div style="left:120px;top:306px;width:79px;height:16px;background:#000"></div>
<div style="left:200px;top:306px;width:79px;height:16px;background:#000"></div>
<div style="left:280px;top:306px;width:60px;height:16px;background:#000"></div>
<div style="left:0px;top:323px;width:39px;height:16px;background:#000"></div>
<div style="left:40px;top:323px;width:79px;height:16px;background:#000"></div>
<div style="left:120px;top:323px;width:79px;height:16px;background:#000"></div>
<div style="left:200px;top:323px;width:79px;height:16px;background:#000"></div>
<div style="left:280px;top:323px;width:60px;height:16px;background:#000"></div>
<div style="left:0px;top:340px;width:39px;height:16px;background:#000"></div>
<div style="left:40px;top:340px;width:79px;height:16px;background:#000"></div>
<div style="left:120px;top:340px;width:79px;height:16px;background:#000"></div>
<div style="left:200px;top:340px;width:79px;height:16px;background:#000"></div>
<div style="left:280px;top:340px;width:60px;height:16px;background:#000"></div>
</div>
<span class="t" style="left:770.50px;top:158px;font-size:11px;line-height:12px;color:#000;letter-spacing:-0.605px;">Order</span>
<span class="t" style="left:810.50px;top:158px;font-size:11px;line-height:12px;color:#000;letter-spacing:-0.389px;">Freq. (Hz)</span>
<span class="t" style="left:890.50px;top:158px;font-size:11px;line-height:12px;color:#000;letter-spacing:-0.438px;">RMS (dBFS)</span>
<span class="t" style="left:970.50px;top:158px;font-size:11px;line-height:12px;color:#000;">%</span>
<span class="t" style="left:1050.50px;top:158px;font-size:11px;line-height:12px;color:#000;letter-spacing:-0.315px;">Phase (D)</span>
<span class="t" style="left:770.50px;top:175px;font-size:11px;line-height:12px;color:#0ff;">1</span>
<span class="t" style="left:810.50px;top:175px;font-size:11px;line-height:12px;color:#0ff;letter-spacing:-0.138px;">1000.000 Hz</span>
<span class="t" style="left:890.50px;top:175px;font-size:11px;line-height:12px;color:#0ff;letter-spacing:-0.436px;">-71.45 dBFS</span>
<span class="t" style="left:970.50px;top:175px;font-size:11px;line-height:12px;color:#0ff;letter-spacing:-0.240px;">100.000000...</span>
<span class="t" style="left:1050.50px;top:175px;font-size:11px;line-height:12px;color:#0ff;letter-spacing:-0.281px;">-44.99  D</span>
<span class="t" style="left:770.50px;top:192px;font-size:11px;line-height:12px;color:#0ff;">2</span>
<span class="t" style="left:810.50px;top:192px;font-size:11px;line-height:12px;color:#0ff;letter-spacing:-0.107px;">2.000000 kHz</span>
<span class="t" style="left:890.50px;top:192px;font-size:11px;line-height:12px;color:#0ff;letter-spacing:-0.407px;">-144.68 dBFS</span>
<span class="t" style="left:970.50px;top:192px;font-size:11px;line-height:12px;color:#0ff;letter-spacing:-0.317px;">0.0217875  %</span>
<span class="t" style="left:1050.50px;top:192px;font-size:11px;line-height:12px;color:#0ff;letter-spacing:-0.328px;">0.00  D</span>
<span class="t" style="left:770.50px;top:209px;font-size:11px;line-height:12px;color:#0ff;">3</span>
<span class="t" style="left:810.50px;top:209px;font-size:11px;line-height:12px;color:#0ff;letter-spacing:-0.107px;">3.000000 kHz</span>
<span class="t" style="left:890.50px;top:209px;font-size:11px;line-height:12px;color:#0ff;letter-spacing:-0.407px;">-147.37 dBFS</span>
<span class="t" style="left:970.50px;top:209px;font-size:11px;line-height:12px;color:#0ff;letter-spacing:-0.317px;">0.0159983  %</span>
<span class="t" style="left:1050.50px;top:209px;font-size:11px;line-height:12px;color:#0ff;letter-spacing:-0.328px;">0.00  D</span>
<span class="t" style="left:770.50px;top:226px;font-size:11px;line-height:12px;color:#0ff;">4</span>
<span class="t" style="left:810.50px;top:226px;font-size:11px;line-height:12px;color:#0ff;letter-spacing:-0.107px;">4.000000 kHz</span>
<span class="t" style="left:890.50px;top:226px;font-size:11px;line-height:12px;color:#0ff;letter-spacing:-0.407px;">-149.76 dBFS</span>
<span class="t" style="left:970.50px;top:226px;font-size:11px;line-height:12px;color:#0ff;letter-spacing:-0.317px;">0.0121476  %</span>
<span class="t" style="left:1050.50px;top:226px;font-size:11px;line-height:12px;color:#0ff;letter-spacing:-0.328px;">0.00  D</span>
<span class="t" style="left:770.50px;top:243px;font-size:11px;line-height:12px;color:#0ff;">5</span>
<span class="t" style="left:810.50px;top:243px;font-size:11px;line-height:12px;color:#0ff;letter-spacing:-0.107px;">5.000000 kHz</span>
<span class="t" style="left:890.50px;top:243px;font-size:11px;line-height:12px;color:#0ff;letter-spacing:-0.407px;">-147.84 dBFS</span>
<span class="t" style="left:970.50px;top:243px;font-size:11px;line-height:12px;color:#0ff;letter-spacing:-0.317px;">0.0151416  %</span>
<span class="t" style="left:1050.50px;top:243px;font-size:11px;line-height:12px;color:#0ff;letter-spacing:-0.328px;">0.00  D</span>
<span class="t" style="left:770.50px;top:260px;font-size:11px;line-height:12px;color:#0ff;">6</span>
<span class="t" style="left:810.50px;top:260px;font-size:11px;line-height:12px;color:#0ff;letter-spacing:-0.107px;">6.000000 kHz</span>
<span class="t" style="left:890.50px;top:260px;font-size:11px;line-height:12px;color:#0ff;letter-spacing:-0.407px;">-149.62 dBFS</span>
<span class="t" style="left:970.50px;top:260px;font-size:11px;line-height:12px;color:#0ff;letter-spacing:-0.317px;">0.0123463  %</span>
<span class="t" style="left:1050.50px;top:260px;font-size:11px;line-height:12px;color:#0ff;letter-spacing:-0.328px;">0.00  D</span>
<span class="t" style="left:770.50px;top:277px;font-size:11px;line-height:12px;color:#0ff;">7</span>
<span class="t" style="left:810.50px;top:277px;font-size:11px;line-height:12px;color:#0ff;letter-spacing:-0.107px;">7.000000 kHz</span>
<span class="t" style="left:890.50px;top:277px;font-size:11px;line-height:12px;color:#0ff;letter-spacing:-0.407px;">-147.71 dBFS</span>
<span class="t" style="left:970.50px;top:277px;font-size:11px;line-height:12px;color:#0ff;letter-spacing:-0.317px;">0.0153726  %</span>
<span class="t" style="left:1050.50px;top:277px;font-size:11px;line-height:12px;color:#0ff;letter-spacing:-0.328px;">0.00  D</span>
<span class="t" style="left:770.50px;top:294px;font-size:11px;line-height:12px;color:#0ff;">8</span>
<span class="t" style="left:810.50px;top:294px;font-size:11px;line-height:12px;color:#0ff;letter-spacing:-0.107px;">8.000000 kHz</span>
<span class="t" style="left:890.50px;top:294px;font-size:11px;line-height:12px;color:#0ff;letter-spacing:-0.407px;">-149.21 dBFS</span>
<span class="t" style="left:970.50px;top:294px;font-size:11px;line-height:12px;color:#0ff;letter-spacing:-0.317px;">0.0129461  %</span>
<span class="t" style="left:1050.50px;top:294px;font-size:11px;line-height:12px;color:#0ff;letter-spacing:-0.328px;">0.00  D</span>
<span class="t" style="left:770.50px;top:311px;font-size:11px;line-height:12px;color:#0ff;">9</span>
<span class="t" style="left:810.50px;top:311px;font-size:11px;line-height:12px;color:#0ff;letter-spacing:-0.107px;">9.000000 kHz</span>
<span class="t" style="left:890.50px;top:311px;font-size:11px;line-height:12px;color:#0ff;letter-spacing:-0.407px;">-147.95 dBFS</span>
<span class="t" style="left:970.50px;top:311px;font-size:11px;line-height:12px;color:#0ff;letter-spacing:-0.317px;">0.0149515  %</span>
<span class="t" style="left:1050.50px;top:311px;font-size:11px;line-height:12px;color:#0ff;letter-spacing:-0.328px;">0.00  D</span>
<span class="t" style="left:770.50px;top:328px;font-size:11px;line-height:12px;color:#0ff;">10</span>
<span class="t" style="left:810.50px;top:328px;font-size:11px;line-height:12px;color:#0ff;letter-spacing:-0.185px;">10.000000 ...</span>
<span class="t" style="left:890.50px;top:328px;font-size:11px;line-height:12px;color:#0ff;letter-spacing:-0.407px;">-147.99 dBFS</span>
<span class="t" style="left:970.50px;top:328px;font-size:11px;line-height:12px;color:#0ff;letter-spacing:-0.317px;">0.0148835  %</span>
<span class="t" style="left:1050.50px;top:328px;font-size:11px;line-height:12px;color:#0ff;letter-spacing:-0.328px;">0.00  D</span>
<span class="t" style="left:770.50px;top:345px;font-size:11px;line-height:12px;color:#0ff;">11</span>
<span class="t" style="left:810.50px;top:345px;font-size:11px;line-height:12px;color:#0ff;letter-spacing:-0.117px;">11.000000 ...</span>
<span class="t" style="left:890.50px;top:345px;font-size:11px;line-height:12px;color:#0ff;letter-spacing:-0.407px;">-147.03 dBFS</span>
<span class="t" style="left:970.50px;top:345px;font-size:11px;line-height:12px;color:#0ff;letter-spacing:-0.317px;">0.0166295  %</span>
<span class="t" style="left:1050.50px;top:345px;font-size:11px;line-height:12px;color:#0ff;letter-spacing:-0.328px;">0.00  D</span>
<span class="t" style="left:770.50px;top:362px;font-size:11px;line-height:12px;color:#0ff;">12</span>
<span class="t" style="left:810.50px;top:362px;font-size:11px;line-height:12px;color:#0ff;letter-spacing:-0.185px;">12.000000 ...</span>
<span class="t" style="left:890.50px;top:362px;font-size:11px;line-height:12px;color:#0ff;letter-spacing:-0.407px;">-149.25 dBFS</span>
<span class="t" style="left:970.50px;top:362px;font-size:11px;line-height:12px;color:#0ff;letter-spacing:-0.317px;">0.0128734  %</span>
<span class="t" style="left:1050.50px;top:362px;font-size:11px;line-height:12px;color:#0ff;letter-spacing:-0.328px;">0.00  D</span>
<span class="t" style="left:770.50px;top:379px;font-size:11px;line-height:12px;color:#0ff;">13</span>
<span class="t" style="left:810.50px;top:379px;font-size:11px;line-height:12px;color:#0ff;letter-spacing:-0.185px;">13.000000 ...</span>
<span class="t" style="left:890.50px;top:379px;font-size:11px;line-height:12px;color:#0ff;letter-spacing:-0.407px;">-148.46 dBFS</span>
<span class="t" style="left:970.50px;top:379px;font-size:11px;line-height:12px;color:#0ff;letter-spacing:-0.317px;">0.0141045  %</span>
<span class="t" style="left:1050.50px;top:379px;font-size:11px;line-height:12px;color:#0ff;letter-spacing:-0.328px;">0.00  D</span>
<span class="t" style="left:770.50px;top:396px;font-size:11px;line-height:12px;color:#0ff;">14</span>
<span class="t" style="left:810.50px;top:396px;font-size:11px;line-height:12px;color:#0ff;letter-spacing:-0.185px;">14.000000 ...</span>
<span class="t" style="left:890.50px;top:396px;font-size:11px;line-height:12px;color:#0ff;letter-spacing:-0.407px;">-148.44 dBFS</span>
<span class="t" style="left:970.50px;top:396px;font-size:11px;line-height:12px;color:#0ff;letter-spacing:-0.317px;">0.0141380  %</span>
<span class="t" style="left:1050.50px;top:396px;font-size:11px;line-height:12px;color:#0ff;letter-spacing:-0.328px;">0.00  D</span>
<span class="t" style="left:770.50px;top:413px;font-size:11px;line-height:12px;color:#0ff;">15</span>
<span class="t" style="left:810.50px;top:413px;font-size:11px;line-height:12px;color:#0ff;letter-spacing:-0.185px;">15.000000 ...</span>
<span class="t" style="left:890.50px;top:413px;font-size:11px;line-height:12px;color:#0ff;letter-spacing:-0.407px;">-144.87 dBFS</span>
<span class="t" style="left:970.50px;top:413px;font-size:11px;line-height:12px;color:#0ff;letter-spacing:-0.317px;">0.0213152  %</span>
<span class="t" style="left:1050.50px;top:413px;font-size:11px;line-height:12px;color:#0ff;letter-spacing:-0.328px;">0.00  D</span>
<span class="t" style="left:770.50px;top:430px;font-size:11px;line-height:12px;color:#0ff;">16</span>
<span class="t" style="left:810.50px;top:430px;font-size:11px;line-height:12px;color:#0ff;letter-spacing:-0.185px;">16.000000 ...</span>
<span class="t" style="left:890.50px;top:430px;font-size:11px;line-height:12px;color:#0ff;letter-spacing:-0.407px;">-146.73 dBFS</span>
<span class="t" style="left:970.50px;top:430px;font-size:11px;line-height:12px;color:#0ff;letter-spacing:-0.317px;">0.0172185  %</span>
<span class="t" style="left:1050.50px;top:430px;font-size:11px;line-height:12px;color:#0ff;letter-spacing:-0.328px;">0.00  D</span>
<span class="t" style="left:770.50px;top:447px;font-size:11px;line-height:12px;color:#0ff;">17</span>
<span class="t" style="left:810.50px;top:447px;font-size:11px;line-height:12px;color:#0ff;letter-spacing:-0.185px;">17.000000 ...</span>
<span class="t" style="left:890.50px;top:447px;font-size:11px;line-height:12px;color:#0ff;letter-spacing:-0.407px;">-147.67 dBFS</span>
<span class="t" style="left:970.50px;top:447px;font-size:11px;line-height:12px;color:#0ff;letter-spacing:-0.317px;">0.0154576  %</span>
<span class="t" style="left:1050.50px;top:447px;font-size:11px;line-height:12px;color:#0ff;letter-spacing:-0.328px;">0.00  D</span>
<span class="t" style="left:770.50px;top:464px;font-size:11px;line-height:12px;color:#0ff;">18</span>
<span class="t" style="left:810.50px;top:464px;font-size:11px;line-height:12px;color:#0ff;letter-spacing:-0.185px;">18.000000 ...</span>
<span class="t" style="left:890.50px;top:464px;font-size:11px;line-height:12px;color:#0ff;letter-spacing:-0.407px;">-147.93 dBFS</span>
<span class="t" style="left:970.50px;top:464px;font-size:11px;line-height:12px;color:#0ff;letter-spacing:-0.317px;">0.0149985  %</span>
<span class="t" style="left:1050.50px;top:464px;font-size:11px;line-height:12px;color:#0ff;letter-spacing:-0.328px;">0.00  D</span>
<div style="left:765px;top:479px;width:40px;height:14px;overflow:hidden"><span class="t" style="left:5.500px;top:2px;font-size:11px;line-height:12px;color:#0ff;letter-spacing:0.000px">19</span></div>
<div style="left:805px;top:479px;width:80px;height:14px;overflow:hidden"><span class="t" style="left:5.500px;top:2px;font-size:11px;line-height:12px;color:#0ff;letter-spacing:-0.185px">19.000000 ...</span></div>
<div style="left:885px;top:479px;width:80px;height:14px;overflow:hidden"><span class="t" style="left:5.500px;top:2px;font-size:11px;line-height:12px;color:#0ff;letter-spacing:-0.407px">-145.02 dBFS</span></div>
<div style="left:965px;top:479px;width:80px;height:14px;overflow:hidden"><span class="t" style="left:5.500px;top:2px;font-size:11px;line-height:12px;color:#0ff;letter-spacing:-0.317px">0.0209580  %</span></div>
<div style="left:1045px;top:479px;width:61px;height:14px;overflow:hidden"><span class="t" style="left:5.500px;top:2px;font-size:11px;line-height:12px;color:#0ff;letter-spacing:-0.328px">0.00  D</span></div>
<div style="left:1106px;top:156px;width:17px;height:337px;background:#f0f0f0;"></div>
<div style="left:1106px;top:173px;width:17px;height:271px;background:#cdcdcd;"></div>
<svg class="a" style="left:1106px;top:156px" width="17" height="337"><path d="M5 12l3.500-3.500 3.500 3.500M5 325.500l3.500 3.500 3.500-3.500" fill="none" stroke="#505050" stroke-width="2"/></svg>
<div style="left:765px;top:493px;width:357px;height:18px;background:#f0f0f0;"></div>
<div style="left:783px;top:494px;width:287px;height:16px;background:#cdcdcd;"></div>
<svg class="a" style="left:765px;top:493px" width="357" height="18"><path d="M11 5.500l-3.500 3.500 3.500 3.500M327.500 5.500l3.500 3.500-3.500 3.500" fill="none" stroke="#505050" stroke-width="2"/><g fill="#b8b8b8"><rect x="353" y="8" width="2" height="2"/><rect x="353" y="11" width="2" height="2"/><rect x="353" y="14" width="2" height="2"/><rect x="350" y="11" width="2" height="2"/><rect x="350" y="14" width="2" height="2"/><rect x="347" y="14" width="2" height="2"/></g></svg>
<div style="left:1131px;top:124px;width:236px;height:80px;background:#fff;box-shadow:0 0 0 1px rgba(70,70,70,.55),0 3px 9px 1px rgba(0,0,0,.38);"></div>
<svg class="a" style="left:1140px;top:132px" width="16" height="16"><g font-family="Liberation Sans,sans-serif" font-weight="bold" font-size="8.400" lengthAdjust="spacingAndGlyphs"><text x="0" y="6" fill="#00f" stroke="#00f" stroke-width=".350" textLength="4.200" lengthAdjust="spacingAndGlyphs">D</text><text x="5" y="6" fill="#f00" stroke="#f00" stroke-width=".350" textLength="4.200" lengthAdjust="spacingAndGlyphs">D</text><text x="10" y="6" fill="#0d0" stroke="#0d0" stroke-width=".350" textLength="4.200" lengthAdjust="spacingAndGlyphs">P</text></g><circle cx="6.500" cy="10.500" r="3" fill="none" stroke="#000"/><path d="M8.700 12.700l2.800 2.800" stroke="#000" stroke-width="1.200"/><path d="M5 10.500h3M6.500 9v3" stroke="#000" stroke-width="1"/></svg>
<span class="t" style="left:1160.00px;top:134px;font-size:12.7px;line-height:14px;color:#999;letter-spacing:-0.127px;">Noise L...</span>
<svg class="a" style="left:1131px;top:124px" width="236" height="32"><path d="M107 15.500h10" stroke="#8c8c8c" fill="none"/><rect x="156.5" y="10.500" width="9" height="9" stroke="#8c8c8c" fill="none"/><path d="M206 10.500l10 10M216 10.500l-10 10" stroke="#8c8c8c" fill="none"/></svg>
<div style="left:1131px;top:156px;width:236px;height:48px;background:#000;overflow:hidden"></div>
<span class="t big" style="left:1113.78px;top:162px;width:252.72px;font-size:35.1px;line-height:40px;transform:scaleX(0.7099)">-1<span class="z">0</span>9.<span class="z">0</span>1 dBFS</span>
<div style="left:1375px;top:123px;width:254px;height:83px;background:#fff;box-shadow:0 0 0 1px rgba(70,70,70,.55),0 3px 9px 1px rgba(0,0,0,.38);"></div>
<svg class="a" style="left:1384px;top:131px" width="16" height="16"><g font-family="Liberation Sans,sans-serif" font-weight="bold" font-size="8.400" lengthAdjust="spacingAndGlyphs"><text x="0" y="6" fill="#00f" stroke="#00f" stroke-width=".350" textLength="4.200" lengthAdjust="spacingAndGlyphs">D</text><text x="5" y="6" fill="#f00" stroke="#f00" stroke-width=".350" textLength="4.200" lengthAdjust="spacingAndGlyphs">D</text><text x="10" y="6" fill="#0d0" stroke="#0d0" stroke-width=".350" textLength="4.200" lengthAdjust="spacingAndGlyphs">P</text></g><circle cx="6.500" cy="10.500" r="3" fill="none" stroke="#000"/><path d="M8.700 12.700l2.800 2.800" stroke="#000" stroke-width="1.200"/><path d="M5 10.500h3M6.500 9v3" stroke="#000" stroke-width="1"/></svg>
<span class="t" style="left:1404.00px;top:133px;font-size:12.7px;line-height:14px;color:#999;letter-spacing:-0.426px;">Peak Level</span>
<svg class="a" style="left:1375px;top:123px" width="254" height="32"><path d="M125 15.500h10" stroke="#8c8c8c" fill="none"/><rect x="174.5" y="10.500" width="9" height="9" stroke="#8c8c8c" fill="none"/><path d="M224 10.500l10 10M234 10.500l-10 10" stroke="#8c8c8c" fill="none"/></svg>
<div style="left:1375px;top:155px;width:254px;height:51px;background:#000;overflow:hidden"></div>
<span class="t big" style="left:1381.48px;top:161px;width:245.52px;font-size:37.2px;line-height:42px;transform:scaleX(0.9722)">-71.16 dBFS</span>
<div style="left:1374px;top:211px;width:255px;height:84px;background:#fff;box-shadow:0 0 0 1px rgba(70,70,70,.55),0 3px 9px 1px rgba(0,0,0,.38);"></div>
<svg class="a" style="left:1383px;top:219px" width="16" height="16"><g font-family="Liberation Sans,sans-serif" font-weight="bold" font-size="8.400" lengthAdjust="spacingAndGlyphs"><text x="0" y="6" fill="#00f" stroke="#00f" stroke-width=".350" textLength="4.200" lengthAdjust="spacingAndGlyphs">D</text><text x="5" y="6" fill="#f00" stroke="#f00" stroke-width=".350" textLength="4.200" lengthAdjust="spacingAndGlyphs">D</text><text x="10" y="6" fill="#0d0" stroke="#0d0" stroke-width=".350" textLength="4.200" lengthAdjust="spacingAndGlyphs">P</text></g><circle cx="6.500" cy="10.500" r="3" fill="none" stroke="#000"/><path d="M8.700 12.700l2.800 2.800" stroke="#000" stroke-width="1.200"/><path d="M5 10.500h3M6.500 9v3" stroke="#000" stroke-width="1"/></svg>
<span class="t" style="left:1403.00px;top:221px;font-size:12.7px;line-height:14px;color:#999;letter-spacing:-0.136px;">ADC Input</span>
<svg class="a" style="left:1374px;top:211px" width="255" height="32"><path d="M126 15.500h10" stroke="#8c8c8c" fill="none"/><rect x="175.5" y="10.500" width="9" height="9" stroke="#8c8c8c" fill="none"/><path d="M225 10.500l10 10M235 10.500l-10 10" stroke="#8c8c8c" fill="none"/></svg>
<div style="left:1374px;top:243px;width:255px;height:52px;background:#000;overflow:hidden"></div>
<span class="t big" style="left:1408.76px;top:246px;width:219.24px;font-size:40.6px;line-height:46px;transform:scaleX(1.0181)">846.63 µV</span>
<div style="left:1372px;top:300px;width:256px;height:80px;background:#fff;box-shadow:0 0 0 1px rgba(70,70,70,.55),0 3px 9px 1px rgba(0,0,0,.38);"></div>
<svg class="a" style="left:1381px;top:308px" width="16" height="16"><g font-family="Liberation Sans,sans-serif" font-weight="bold" font-size="8.400" lengthAdjust="spacingAndGlyphs"><text x="0" y="6" fill="#00f" stroke="#00f" stroke-width=".350" textLength="4.200" lengthAdjust="spacingAndGlyphs">D</text><text x="5" y="6" fill="#f00" stroke="#f00" stroke-width=".350" textLength="4.200" lengthAdjust="spacingAndGlyphs">D</text><text x="10" y="6" fill="#0d0" stroke="#0d0" stroke-width=".350" textLength="4.200" lengthAdjust="spacingAndGlyphs">P</text></g><circle cx="6.500" cy="10.500" r="3" fill="none" stroke="#000"/><path d="M8.700 12.700l2.800 2.800" stroke="#000" stroke-width="1.200"/><path d="M5 10.500h3M6.500 9v3" stroke="#000" stroke-width="1"/></svg>
<span class="t" style="left:1401.00px;top:310px;font-size:12.7px;line-height:14px;color:#999;letter-spacing:0.038px;">Gen Output</span>
<svg class="a" style="left:1372px;top:300px" width="256" height="32"><path d="M127 15.500h10" stroke="#8c8c8c" fill="none"/><rect x="176.5" y="10.500" width="9" height="9" stroke="#8c8c8c" fill="none"/><path d="M226 10.500l10 10M236 10.500l-10 10" stroke="#8c8c8c" fill="none"/></svg>
<div style="left:1372px;top:332px;width:256px;height:48px;background:#000;overflow:hidden"></div>
<span class="t big" style="left:1432.02px;top:337px;width:195.48px;font-size:36.2px;line-height:41px;transform:scaleX(1.0129)">1.2357 mV</span>
<div style="left:1372px;top:386px;width:256px;height:86px;background:#fff;box-shadow:0 0 0 1px rgba(70,70,70,.55),0 3px 9px 1px rgba(0,0,0,.38);"></div>
<svg class="a" style="left:1381px;top:394px" width="16" height="16"><g font-family="Liberation Sans,sans-serif" font-weight="bold" font-size="8.400" lengthAdjust="spacingAndGlyphs"><text x="0" y="6" fill="#00f" stroke="#00f" stroke-width=".350" textLength="4.200" lengthAdjust="spacingAndGlyphs">D</text><text x="5" y="6" fill="#f00" stroke="#f00" stroke-width=".350" textLength="4.200" lengthAdjust="spacingAndGlyphs">D</text><text x="10" y="6" fill="#0d0" stroke="#0d0" stroke-width=".350" textLength="4.200" lengthAdjust="spacingAndGlyphs">P</text></g><circle cx="6.500" cy="10.500" r="3" fill="none" stroke="#000"/><path d="M8.700 12.700l2.800 2.800" stroke="#000" stroke-width="1.200"/><path d="M5 10.500h3M6.500 9v3" stroke="#000" stroke-width="1"/></svg>
<span class="t" style="left:1401.00px;top:396px;font-size:12.7px;line-height:14px;color:#999;letter-spacing:-1.416px;">PWR_A</span>
<svg class="a" style="left:1372px;top:386px" width="256" height="32"><path d="M127 15.500h10" stroke="#8c8c8c" fill="none"/><rect x="176.5" y="10.500" width="9" height="9" stroke="#8c8c8c" fill="none"/><path d="M226 10.500l10 10M236 10.500l-10 10" stroke="#8c8c8c" fill="none"/></svg>
<div style="left:1372px;top:418px;width:256px;height:54px;background:#000;overflow:hidden"></div>
<span class="t big" style="left:1318.12px;top:421px;width:308.88px;font-size:42.9px;line-height:49px;transform:scaleX(0.7362)">716.78639 nW</span>
<div style="left:1665px;top:123px;width:248px;height:93px;background:#fff;box-shadow:0 0 0 1px rgba(70,70,70,.55),0 3px 9px 1px rgba(0,0,0,.38);"></div>
<svg class="a" style="left:1674px;top:131px" width="16" height="16"><g font-family="Liberation Sans,sans-serif" font-weight="bold" font-size="8.400" lengthAdjust="spacingAndGlyphs"><text x="0" y="6" fill="#00f" stroke="#00f" stroke-width=".350" textLength="4.200" lengthAdjust="spacingAndGlyphs">D</text><text x="5" y="6" fill="#f00" stroke="#f00" stroke-width=".350" textLength="4.200" lengthAdjust="spacingAndGlyphs">D</text><text x="10" y="6" fill="#0d0" stroke="#0d0" stroke-width=".350" textLength="4.200" lengthAdjust="spacingAndGlyphs">P</text></g><circle cx="6.500" cy="10.500" r="3" fill="none" stroke="#000"/><path d="M8.700 12.700l2.800 2.800" stroke="#000" stroke-width="1.200"/><path d="M5 10.500h3M6.500 9v3" stroke="#000" stroke-width="1"/></svg>
<span class="t" style="left:1694.00px;top:133px;font-size:12.7px;line-height:14px;color:#999;letter-spacing:-0.801px;">THD</span>
<svg class="a" style="left:1665px;top:123px" width="248" height="32"><path d="M119 15.500h10" stroke="#8c8c8c" fill="none"/><rect x="168.5" y="10.500" width="9" height="9" stroke="#8c8c8c" fill="none"/><path d="M218 10.500l10 10M228 10.500l-10 10" stroke="#8c8c8c" fill="none"/></svg>
<div style="left:1665px;top:155px;width:248px;height:61px;background:#000;overflow:hidden"></div>
<span class="t big" style="left:1640.88px;top:158px;width:271.62px;font-size:50.3px;line-height:57px;transform:scaleX(0.8946)"><span class="z">0</span>.<span class="z">0</span>6869 %</span>
<div style="left:1667px;top:221px;width:247px;height:91px;background:#fff;box-shadow:0 0 0 1px rgba(70,70,70,.55),0 3px 9px 1px rgba(0,0,0,.38);"></div>
<svg class="a" style="left:1676px;top:229px" width="16" height="16"><g font-family="Liberation Sans,sans-serif" font-weight="bold" font-size="8.400" lengthAdjust="spacingAndGlyphs"><text x="0" y="6" fill="#00f" stroke="#00f" stroke-width=".350" textLength="4.200" lengthAdjust="spacingAndGlyphs">D</text><text x="5" y="6" fill="#f00" stroke="#f00" stroke-width=".350" textLength="4.200" lengthAdjust="spacingAndGlyphs">D</text><text x="10" y="6" fill="#0d0" stroke="#0d0" stroke-width=".350" textLength="4.200" lengthAdjust="spacingAndGlyphs">P</text></g><circle cx="6.500" cy="10.500" r="3" fill="none" stroke="#000"/><path d="M8.700 12.700l2.800 2.800" stroke="#000" stroke-width="1.200"/><path d="M5 10.500h3M6.500 9v3" stroke="#000" stroke-width="1"/></svg>
<span class="t" style="left:1696.00px;top:231px;font-size:12.7px;line-height:14px;color:#999;letter-spacing:-0.801px;">THD</span>
<svg class="a" style="left:1667px;top:221px" width="247" height="32"><path d="M118 15.500h10" stroke="#8c8c8c" fill="none"/><rect x="167.5" y="10.500" width="9" height="9" stroke="#8c8c8c" fill="none"/><path d="M217 10.500l10 10M227 10.500l-10 10" stroke="#8c8c8c" fill="none"/></svg>
<div style="left:1667px;top:253px;width:247px;height:59px;background:#000;overflow:hidden"></div>
<span class="t big" style="left:1654.38px;top:256px;width:258.12px;font-size:47.8px;line-height:54px;transform:scaleX(0.6904)">-63.26 dB</span>
<div style="left:1647px;top:318px;width:268px;height:90px;background:#fff;box-shadow:0 0 0 1px rgba(70,70,70,.55),0 3px 9px 1px rgba(0,0,0,.38);"></div>
<svg class="a" style="left:1656px;top:326px" width="16" height="16"><g font-family="Liberation Sans,sans-serif" font-weight="bold" font-size="8.400" lengthAdjust="spacingAndGlyphs"><text x="0" y="6" fill="#00f" stroke="#00f" stroke-width=".350" textLength="4.200" lengthAdjust="spacingAndGlyphs">D</text><text x="5" y="6" fill="#f00" stroke="#f00" stroke-width=".350" textLength="4.200" lengthAdjust="spacingAndGlyphs">D</text><text x="10" y="6" fill="#0d0" stroke="#0d0" stroke-width=".350" textLength="4.200" lengthAdjust="spacingAndGlyphs">P</text></g><circle cx="6.500" cy="10.500" r="3" fill="none" stroke="#000"/><path d="M8.700 12.700l2.800 2.800" stroke="#000" stroke-width="1.200"/><path d="M5 10.500h3M6.500 9v3" stroke="#000" stroke-width="1"/></svg>
<span class="t" style="left:1676.00px;top:328px;font-size:12.7px;line-height:14px;color:#999;letter-spacing:0.203px;">THD+N</span>
<svg class="a" style="left:1647px;top:318px" width="268" height="32"><path d="M139 15.500h10" stroke="#8c8c8c" fill="none"/><rect x="188.5" y="10.500" width="9" height="9" stroke="#8c8c8c" fill="none"/><path d="M238 10.500l10 10M248 10.500l-10 10" stroke="#8c8c8c" fill="none"/></svg>
<div style="left:1647px;top:350px;width:268px;height:58px;background:#000;overflow:hidden"></div>
<span class="t big" style="left:1653.88px;top:353px;width:258.12px;font-size:47.8px;line-height:54px;transform:scaleX(0.8229)">1.32618 %</span>
<div style="left:1663px;top:414px;width:253px;height:88px;background:#fff;box-shadow:0 0 0 1px rgba(70,70,70,.55),0 3px 9px 1px rgba(0,0,0,.38);"></div>
<svg class="a" style="left:1672px;top:422px" width="16" height="16"><g font-family="Liberation Sans,sans-serif" font-weight="bold" font-size="8.400" lengthAdjust="spacingAndGlyphs"><text x="0" y="6" fill="#00f" stroke="#00f" stroke-width=".350" textLength="4.200" lengthAdjust="spacingAndGlyphs">D</text><text x="5" y="6" fill="#f00" stroke="#f00" stroke-width=".350" textLength="4.200" lengthAdjust="spacingAndGlyphs">D</text><text x="10" y="6" fill="#0d0" stroke="#0d0" stroke-width=".350" textLength="4.200" lengthAdjust="spacingAndGlyphs">P</text></g><circle cx="6.500" cy="10.500" r="3" fill="none" stroke="#000"/><path d="M8.700 12.700l2.800 2.800" stroke="#000" stroke-width="1.200"/><path d="M5 10.500h3M6.500 9v3" stroke="#000" stroke-width="1"/></svg>
<span class="t" style="left:1692.00px;top:424px;font-size:12.7px;line-height:14px;color:#999;letter-spacing:0.203px;">THD+N</span>
<svg class="a" style="left:1663px;top:414px" width="253" height="32"><path d="M124 15.500h10" stroke="#8c8c8c" fill="none"/><rect x="173.5" y="10.500" width="9" height="9" stroke="#8c8c8c" fill="none"/><path d="M223 10.500l10 10M233 10.500l-10 10" stroke="#8c8c8c" fill="none"/></svg>
<div style="left:1663px;top:446px;width:253px;height:56px;background:#000;overflow:hidden"></div>
<span class="t big" style="left:1672.66px;top:449px;width:240.84px;font-size:44.6px;line-height:50px;transform:scaleX(1.0277)">-37.55 dB</span>
<div style="left:1677px;top:511px;width:237px;height:89px;background:#fff;box-shadow:0 0 0 1px rgba(70,70,70,.55),0 3px 9px 1px rgba(0,0,0,.38);"></div>
<svg class="a" style="left:1686px;top:519px" width="16" height="16"><g font-family="Liberation Sans,sans-serif" font-weight="bold" font-size="8.400" lengthAdjust="spacingAndGlyphs"><text x="0" y="6" fill="#00f" stroke="#00f" stroke-width=".350" textLength="4.200" lengthAdjust="spacingAndGlyphs">D</text><text x="5" y="6" fill="#f00" stroke="#f00" stroke-width=".350" textLength="4.200" lengthAdjust="spacingAndGlyphs">D</text><text x="10" y="6" fill="#0d0" stroke="#0d0" stroke-width=".350" textLength="4.200" lengthAdjust="spacingAndGlyphs">P</text></g><circle cx="6.500" cy="10.500" r="3" fill="none" stroke="#000"/><path d="M8.700 12.700l2.800 2.800" stroke="#000" stroke-width="1.200"/><path d="M5 10.500h3M6.500 9v3" stroke="#000" stroke-width="1"/></svg>
<span class="t" style="left:1706.00px;top:521px;font-size:12.7px;line-height:14px;color:#999;letter-spacing:-0.907px;">SNR</span>
<svg class="a" style="left:1677px;top:511px" width="237" height="32"><path d="M108 15.500h10" stroke="#8c8c8c" fill="none"/><rect x="157.5" y="10.500" width="9" height="9" stroke="#8c8c8c" fill="none"/><path d="M207 10.500l10 10M217 10.500l-10 10" stroke="#8c8c8c" fill="none"/></svg>
<div style="left:1677px;top:543px;width:237px;height:57px;background:#000;overflow:hidden"></div>
<span class="t big" style="left:1682.56px;top:545px;width:229.44px;font-size:47.8px;line-height:54px;transform:scaleX(0.7218)">37.56 dB</span>
<div style="left:1678px;top:609px;width:235px;height:88px;background:#fff;box-shadow:0 0 0 1px rgba(70,70,70,.55),0 3px 9px 1px rgba(0,0,0,.38);"></div>
<svg class="a" style="left:1687px;top:617px" width="16" height="16"><g font-family="Liberation Sans,sans-serif" font-weight="bold" font-size="8.400" lengthAdjust="spacingAndGlyphs"><text x="0" y="6" fill="#00f" stroke="#00f" stroke-width=".350" textLength="4.200" lengthAdjust="spacingAndGlyphs">D</text><text x="5" y="6" fill="#f00" stroke="#f00" stroke-width=".350" textLength="4.200" lengthAdjust="spacingAndGlyphs">D</text><text x="10" y="6" fill="#0d0" stroke="#0d0" stroke-width=".350" textLength="4.200" lengthAdjust="spacingAndGlyphs">P</text></g><circle cx="6.500" cy="10.500" r="3" fill="none" stroke="#000"/><path d="M8.700 12.700l2.800 2.800" stroke="#000" stroke-width="1.200"/><path d="M5 10.500h3M6.500 9v3" stroke="#000" stroke-width="1"/></svg>
<span class="t" style="left:1707.00px;top:619px;font-size:12.7px;line-height:14px;color:#999;letter-spacing:-0.579px;">SINAD</span>
<svg class="a" style="left:1678px;top:609px" width="235" height="32"><path d="M106 15.500h10" stroke="#8c8c8c" fill="none"/><rect x="155.5" y="10.500" width="9" height="9" stroke="#8c8c8c" fill="none"/><path d="M205 10.500l10 10M215 10.500l-10 10" stroke="#8c8c8c" fill="none"/></svg>
<div style="left:1678px;top:641px;width:235px;height:56px;background:#000;overflow:hidden"></div>
<span class="t big" style="left:1692.08px;top:644px;width:217.92px;font-size:45.4px;line-height:52px;transform:scaleX(1.0499)">37.55 dB</span>
<div style="left:1680px;top:705px;width:232px;height:93px;background:#fff;box-shadow:0 0 0 1px rgba(70,70,70,.55),0 3px 9px 1px rgba(0,0,0,.38);"></div>
<svg class="a" style="left:1689px;top:713px" width="16" height="16"><g font-family="Liberation Sans,sans-serif" font-weight="bold" font-size="8.400" lengthAdjust="spacingAndGlyphs"><text x="0" y="6" fill="#00f" stroke="#00f" stroke-width=".350" textLength="4.200" lengthAdjust="spacingAndGlyphs">D</text><text x="5" y="6" fill="#f00" stroke="#f00" stroke-width=".350" textLength="4.200" lengthAdjust="spacingAndGlyphs">D</text><text x="10" y="6" fill="#0d0" stroke="#0d0" stroke-width=".350" textLength="4.200" lengthAdjust="spacingAndGlyphs">P</text></g><circle cx="6.500" cy="10.500" r="3" fill="none" stroke="#000"/><path d="M8.700 12.700l2.800 2.800" stroke="#000" stroke-width="1.200"/><path d="M5 10.500h3M6.500 9v3" stroke="#000" stroke-width="1"/></svg>
<span class="t" style="left:1709.00px;top:715px;font-size:12.7px;line-height:14px;color:#999;letter-spacing:-0.831px;">ENOB</span>
<svg class="a" style="left:1680px;top:705px" width="232" height="32"><path d="M104 15.500h10" stroke="#8c8c8c" fill="none"/><rect x="153.5" y="10.500" width="9" height="9" stroke="#8c8c8c" fill="none"/><path d="M203 10.500l10 10M213 10.500l-10 10" stroke="#8c8c8c" fill="none"/></svg>
<div style="left:1680px;top:737px;width:232px;height:61px;background:#000;overflow:hidden"></div>
<span class="t big" style="left:1681.06px;top:741px;width:229.44px;font-size:47.8px;line-height:54px;transform:scaleX(0.8647)">5.94 Bit</span>
<div style="left:1394px;top:495px;width:242px;height:558px;background:#f0f0f0;box-shadow:0 0 0 1px rgba(70,70,70,.55),0 3px 9px 1px rgba(0,0,0,.38);"></div>
<div style="left:1394px;top:495px;width:242px;height:27px;background:#fff;"></div>
<svg class="a" style="left:1397px;top:500px" width="16" height="16"><rect width="16" height="16" fill="#ff0"/><path d="M0 4.500h2v-2.500h3v2.500h3v-2.500h3v2.500h3v-2.500h2" fill="none" stroke="#f00"/><path d="M0 9.500h2v-2.500h3v2.500h3v-2.500h3v2.500h3v-2.500h2" fill="none" stroke="#0c0"/><path d="M0 14l2-3.500 2.500 3.500 2.500-3.500 2.500 3.500 2.500-3.500 2.500 3.500 1.500-2" fill="none" stroke="#00f"/></svg>
<span class="t" style="left:1418.00px;top:502px;font-size:12.7px;line-height:14px;color:#999;letter-spacing:-0.214px;">Signal Ge...</span>
<svg class="a" style="left:1394px;top:495px" width="242" height="27"><path d="M113 13.500h10" stroke="#8c8c8c" fill="none"/><rect x="162.500" y="8.500" width="9" height="9" stroke="#d8d8d8" fill="none"/><path d="M212 8.500l10 10M222 8.500l-10 10" stroke="#8c8c8c" fill="none"/></svg>
<div class="chk" style="left:1400px;top:530px;width:13px;height:13px;background:#fff;"></div>
<svg class="a" style="left:1400px;top:530px" width="13" height="13"><path d="M3.500 6l2 2 4-4" fill="none" stroke="#000" stroke-width="1.800"/></svg>
<span class="t" style="left:1418.50px;top:530px;font-size:12.4px;line-height:14px;color:#000;transform:scaleX(0.8451);transform-origin:0 50%;">Show Editor</span>
<div class="sunk" style="left:1480px;top:527px;width:128px;height:23px;background:#fff;"></div>
<div class="btn" style="left:1589px;top:529px;width:17px;height:19px;background:#f0f0f0;"></div>
<svg class="a" style="left:1589px;top:529px" width="17" height="19"><path d="M4.0 7.5h9l-4.5 4.5z" fill="#000"/></svg>
<span class="t" style="left:1484.00px;top:531px;font-size:12.4px;line-height:14px;color:#000;transform:scaleX(0.8758);transform-origin:0 50%;">No Loopback</span>
<div class="btn" style="left:1609px;top:526px;width:24px;height:22px;background:#f0f0f0;"></div>
<div style="left:1616px;top:532px;width:10px;height:10px;background:#0f0;"></div>
<span class="t" style="left:1398.30px;top:557px;font-size:12.4px;line-height:14px;color:#fff;transform:scaleX(0.8318);transform-origin:0 50%;">Start OSC after (s)</span>
<span class="t" style="left:1397.30px;top:556px;font-size:12.4px;line-height:14px;color:#808080;transform:scaleX(0.8318);transform-origin:0 50%;">Start OSC after (s)</span>
<div class="sunk" style="left:1489px;top:553px;width:69px;height:21px;background:#f0f0f0;"></div>
<span class="t" style="left:1493.00px;top:556px;font-size:12.4px;line-height:14px;color:#808080;transform:scaleX(0.8800);transform-origin:0 50%;">0</span>
<div class="chk" style="left:1559px;top:556px;width:13px;height:13px;background:#f0f0f0;"></div>
<span class="t" style="left:1579.60px;top:557px;font-size:12.4px;line-height:14px;color:#fff;transform:scaleX(0.8461);transform-origin:0 50%;">Echo Only</span>
<span class="t" style="left:1578.60px;top:556px;font-size:12.4px;line-height:14px;color:#808080;transform:scaleX(0.8461);transform-origin:0 50%;">Echo Only</span>
<div style="left:1396px;top:585px;width:209px;height:37px;background:none;border:1px solid #a0a0a0;box-shadow:inset 1px 1px 0 #fff,1px 1px 0 #fff;"></div>
<div style="left:1403px;top:584px;width:104px;height:4px;background:#f0f0f0;"></div>
<span class="t" style="left:1405.30px;top:580px;font-size:12.4px;line-height:14px;color:#000;transform:scaleX(0.8311);transform-origin:0 50%;">Sampling Parameters</span>
<div class="sunk" style="left:1402px;top:595px;width:101px;height:21px;background:#fff;"></div>
<div class="btn" style="left:1484px;top:597px;width:17px;height:17px;background:#f0f0f0;"></div>
<svg class="a" style="left:1484px;top:597px" width="17" height="17"><path d="M4.0 6.5h9l-4.5 4.5z" fill="#000"/></svg>
<span class="t" style="left:1406.00px;top:599px;font-size:12.4px;line-height:14px;color:#000;transform:scaleX(0.8251);transform-origin:0 50%;">48kHz</span>
<div class="sunk" style="left:1504px;top:595px;width:45px;height:21px;background:#fff;"></div>
<div class="btn" style="left:1530px;top:597px;width:17px;height:17px;background:#f0f0f0;"></div>
<svg class="a" style="left:1530px;top:597px" width="17" height="17"><path d="M4.0 6.5h9l-4.5 4.5z" fill="#000"/></svg>
<span class="t" style="left:1508.00px;top:599px;font-size:12.4px;line-height:14px;color:#000;transform:scaleX(0.8800);transform-origin:0 50%;">A</span>
<div class="sunk" style="left:1550px;top:595px;width:53px;height:21px;background:#fff;"></div>
<div class="btn" style="left:1584px;top:597px;width:17px;height:17px;background:#f0f0f0;"></div>
<svg class="a" style="left:1584px;top:597px" width="17" height="17"><path d="M4.0 6.5h9l-4.5 4.5z" fill="#000"/></svg>
<span class="t" style="left:1554.00px;top:599px;font-size:12.4px;line-height:14px;color:#000;transform:scaleX(0.7784);transform-origin:0 50%;">24Bit</span>
<div class="btn" style="left:1609px;top:579px;width:24px;height:22px;background:#f0f0f0;"></div>
<svg class="a" style="left:1613px;top:583px" width="16" height="15"><path d="M1.500 1.500h13v12h-13z" fill="#a8a860" stroke="#787840"/><rect x="4" y="2" width="8" height="4.500" fill="#f0f0f0"/><rect x="4.500" y="9" width="7" height="4.500" fill="#787840"/><rect x="8.500" y="10" width="2" height="3" fill="#f0f0f0"/></svg>
<div class="btn" style="left:1609px;top:603px;width:24px;height:22px;background:#f0f0f0;"></div>
<svg class="a" style="left:1613px;top:606px" width="16" height="16"><path d="M0 3.500h16M0 6.500h16M0 9.500h16M0 12.500h16" stroke="#a0a0a0" stroke-width=".6" fill="none"/><path d="M3.500 13v-8l8-3v8" fill="none" stroke="#f00" stroke-width="1.300"/><circle cx="2.500" cy="13.200" r="1.700" fill="#f00"/><circle cx="10.500" cy="10.200" r="1.700" fill="#f00"/></svg>
<div class="sunk" style="left:1405px;top:633px;width:86px;height:21px;background:#fff;"></div>
<div class="btn" style="left:1472px;top:635px;width:17px;height:17px;background:#f0f0f0;"></div>
<svg class="a" style="left:1472px;top:635px" width="17" height="17"><path d="M4.0 6.5h9l-4.5 4.5z" fill="#000"/></svg>
<span class="t" style="left:1409.00px;top:637px;font-size:12.4px;line-height:14px;color:#000;transform:scaleX(0.8461);transform-origin:0 50%;">Sine</span>
<div class="btn" style="left:1502px;top:633px;width:23px;height:20px;background:#f0f0f0;"></div>
<span class="t" style="left:1508.50px;top:637px;font-size:11px;line-height:12px;color:#000;">...</span>
<div class="sunk" style="left:1538px;top:633px;width:86px;height:21px;background:#f0f0f0;"></div>
<div class="btn" style="left:1605px;top:635px;width:17px;height:17px;background:#f0f0f0;"></div>
<svg class="a" style="left:1605px;top:635px" width="17" height="17"><path d="M4.0 6.5h9l-4.5 4.5z" fill="#a0a0a0"/></svg>
<span class="t" style="left:1542.00px;top:637px;font-size:12.4px;line-height:14px;color:#808080;transform:scaleX(0.8771);transform-origin:0 50%;">None</span>
<div class="sunk" style="left:1397px;top:663px;width:63px;height:21px;background:#fff;"></div>
<span class="t" style="left:1401.00px;top:666px;font-size:12.4px;line-height:14px;color:#000;transform:scaleX(0.8800);transform-origin:0 50%;">0</span>
<div class="btn" style="left:1460px;top:660px;width:19px;height:11px;background:#f0f0f0;"></div>
<div class="btn" style="left:1460px;top:671px;width:19px;height:12px;background:#f0f0f0;"></div>
<svg class="a" style="left:1460px;top:660px" width="19" height="23"><path d="M7 7.0h5l-2.500-2.500zM7 16.0h5l-2.500 2.500z" fill="#000"/></svg>
<span class="t" style="left:1483.60px;top:667px;font-size:12.4px;line-height:14px;color:#000;transform:scaleX(0.8344);transform-origin:0 50%;">DC Offset (V)</span>
<div class="sunk" style="left:1553px;top:663px;width:62px;height:21px;background:#f0f0f0;"></div>
<span class="t" style="left:1557.00px;top:666px;font-size:12.4px;line-height:14px;color:#808080;transform:scaleX(0.8800);transform-origin:0 50%;">0</span>
<div class="btn" style="left:1616px;top:660px;width:19px;height:11px;background:#f0f0f0;"></div>
<div class="btn" style="left:1616px;top:671px;width:19px;height:12px;background:#f0f0f0;"></div>
<svg class="a" style="left:1616px;top:660px" width="19" height="23"><path d="M7 7.0h5l-2.500-2.500zM7 16.0h5l-2.500 2.500z" fill="#808080"/></svg>
<span class="t" style="left:1460.40px;top:688px;font-size:12.4px;line-height:14px;color:#000;transform:scaleX(0.8484);transform-origin:0 50%;">Output Frequency (Hz)</span>
<div class="sunk" style="left:1429px;top:707px;width:89px;height:21px;background:#fff;"></div>
<div class="btn" style="left:1499px;top:709px;width:17px;height:17px;background:#f0f0f0;"></div>
<svg class="a" style="left:1499px;top:709px" width="17" height="17"><path d="M4.0 6.5h9l-4.5 4.5z" fill="#000"/></svg>
<span class="t" style="left:1433.00px;top:710px;font-size:12.4px;line-height:14px;color:#000;transform:scaleX(0.8700);transform-origin:0 50%;">1000</span>
<div class="sunk" style="left:1518px;top:707px;width:89px;height:21px;background:#f0f0f0;"></div>
<div class="btn" style="left:1588px;top:709px;width:17px;height:17px;background:#f0f0f0;"></div>
<svg class="a" style="left:1588px;top:709px" width="17" height="17"><path d="M4.0 6.5h9l-4.5 4.5z" fill="#a0a0a0"/></svg>
<span class="t" style="left:1522.00px;top:710px;font-size:12.4px;line-height:14px;color:#808080;transform:scaleX(0.8700);transform-origin:0 50%;">1000</span>
<span class="t" style="left:1462.80px;top:737px;font-size:12.4px;line-height:14px;color:#000;transform:scaleX(0.8426);transform-origin:0 50%;">Output Amplitude(Vp)</span>
<div class="sunk" style="left:1429px;top:759px;width:89px;height:21px;background:#fff;"></div>
<div class="btn" style="left:1499px;top:761px;width:17px;height:17px;background:#f0f0f0;"></div>
<svg class="a" style="left:1499px;top:761px" width="17" height="17"><path d="M4.0 6.5h9l-4.5 4.5z" fill="#000"/></svg>
<span class="t" style="left:1433.00px;top:762px;font-size:12.4px;line-height:14px;color:#000;transform:scaleX(0.8800);transform-origin:0 50%;">1</span>
<div class="sunk" style="left:1518px;top:759px;width:89px;height:21px;background:#f0f0f0;"></div>
<div class="btn" style="left:1588px;top:761px;width:17px;height:17px;background:#f0f0f0;"></div>
<svg class="a" style="left:1588px;top:761px" width="17" height="17"><path d="M4.0 6.5h9l-4.5 4.5z" fill="#a0a0a0"/></svg>
<span class="t" style="left:1522.00px;top:762px;font-size:12.4px;line-height:14px;color:#808080;transform:scaleX(0.8800);transform-origin:0 50%;">1</span>
<span class="t" style="left:1434.50px;top:790px;font-size:12.4px;line-height:14px;color:#fff;transform:scaleX(0.8566);transform-origin:0 50%;">Output Phase Difference (Degree)</span>
<span class="t" style="left:1433.50px;top:789px;font-size:12.4px;line-height:14px;color:#808080;transform:scaleX(0.8566);transform-origin:0 50%;">Output Phase Difference (Degree)</span>
<div class="sunk" style="left:1477px;top:810px;width:75px;height:20px;background:#f0f0f0;"></div>
<div class="btn" style="left:1533px;top:812px;width:17px;height:16px;background:#f0f0f0;"></div>
<svg class="a" style="left:1533px;top:812px" width="17" height="16"><path d="M4.0 6.0h9l-4.5 4.5z" fill="#a0a0a0"/></svg>
<span class="t" style="left:1481.00px;top:813px;font-size:12.4px;line-height:14px;color:#808080;transform:scaleX(0.8800);transform-origin:0 50%;">0</span>
<div class="sunk" style="left:1401px;top:696px;width:4px;height:134px;background:#f0f0f0;"></div>
<div style="left:1397px;top:820px;width:12px;height:4px;background:#f0f0f0;border:1px solid;border-color:#fff #696969 #696969 #fff;box-shadow:inset -1px -1px 0 #a0a0a0"></div>
<div class="sunk" style="left:1416.5px;top:696px;width:4px;height:134px;background:#f0f0f0;"></div>
<div style="left:1412.5px;top:808px;width:12px;height:4px;background:#f0f0f0;border:1px solid;border-color:#fff #696969 #696969 #fff;box-shadow:inset -1px -1px 0 #a0a0a0"></div>
<div class="sunk" style="left:1610.5px;top:696px;width:4px;height:134px;background:#f0f0f0;"></div>
<div style="left:1606.5px;top:808px;width:12px;height:4px;background:#f0f0f0;border:1px solid;border-color:#fff #696969 #696969 #fff;box-shadow:inset -1px -1px 0 #a0a0a0"></div>
<div class="sunk" style="left:1623.5px;top:696px;width:4px;height:134px;background:#f0f0f0;"></div>
<div style="left:1619.5px;top:820px;width:12px;height:4px;background:#f0f0f0;border:1px solid;border-color:#fff #696969 #696969 #fff;box-shadow:inset -1px -1px 0 #a0a0a0"></div>
<span class="t" style="left:1397.70px;top:833px;font-size:12.4px;line-height:14px;color:#000;transform:scaleX(0.8182);transform-origin:0 50%;">-17.0dBFS</span>
<div class="sunk" style="left:1452px;top:838px;width:121px;height:4px;background:#f0f0f0;"></div>
<div style="left:1511px;top:835px;width:5px;height:11px;background:#f0f0f0;border:1px solid;border-color:#fff #696969 #696969 #fff;box-shadow:inset -1px -1px 0 #a0a0a0"></div>
<span class="t" style="left:1587.70px;top:834px;font-size:12.4px;line-height:14px;color:#fff;transform:scaleX(0.8148);transform-origin:0 50%;">-17.0dBFS</span>
<span class="t" style="left:1586.70px;top:833px;font-size:12.4px;line-height:14px;color:#808080;transform:scaleX(0.8148);transform-origin:0 50%;">-17.0dBFS</span>
<div style="left:1396px;top:853px;width:238px;height:46px;background:none;border:1px solid #a0a0a0;box-shadow:inset 1px 1px 0 #fff,1px 1px 0 #fff;"></div>
<div class="chk" style="left:1403px;top:859px;width:13px;height:13px;background:#fff;"></div>
<span class="t" style="left:1422.30px;top:859px;font-size:12.4px;line-height:14px;color:#000;transform:scaleX(0.8506);transform-origin:0 50%;">Mask</span>
<div class="btn" style="left:1466px;top:858px;width:15px;height:15px;background:#f0f0f0;"></div>
<span class="t" style="left:1469.00px;top:861px;font-size:9px;line-height:10px;color:#808080;">...</span>
<span class="t" style="left:1503.30px;top:861px;font-size:12.4px;line-height:14px;color:#fff;transform:scaleX(0.8245);transform-origin:0 50%;">On (s)</span>
<span class="t" style="left:1502.30px;top:859px;font-size:12.4px;line-height:14px;color:#808080;transform:scaleX(0.8245);transform-origin:0 50%;">On (s)</span>
<span class="t" style="left:1578.40px;top:861px;font-size:12.4px;line-height:14px;color:#fff;transform:scaleX(0.8300);transform-origin:0 50%;">Off (s)</span>
<span class="t" style="left:1577.40px;top:859px;font-size:12.4px;line-height:14px;color:#808080;transform:scaleX(0.8300);transform-origin:0 50%;">Off (s)</span>
<div class="chk" style="left:1403px;top:879px;width:13px;height:13px;background:#f0f0f0;"></div>
<svg class="a" style="left:1403px;top:879px" width="13" height="13"><path d="M3.500 6l2 2 4-4" fill="none" stroke="#808080" stroke-width="1.800"/></svg>
<span class="t" style="left:1423.30px;top:880px;font-size:12.4px;line-height:14px;color:#fff;transform:scaleX(0.8735);transform-origin:0 50%;">Phase Lock</span>
<span class="t" style="left:1422.30px;top:879px;font-size:12.4px;line-height:14px;color:#808080;transform:scaleX(0.8735);transform-origin:0 50%;">Phase Lock</span>
<div class="sunk" style="left:1489px;top:876px;width:68px;height:21px;background:#f0f0f0;"></div>
<span class="t" style="left:1493.00px;top:879px;font-size:12.4px;line-height:14px;color:#808080;transform:scaleX(0.8800);transform-origin:0 50%;">1</span>
<div class="sunk" style="left:1562px;top:876px;width:68px;height:21px;background:#f0f0f0;"></div>
<span class="t" style="left:1566.00px;top:879px;font-size:12.4px;line-height:14px;color:#808080;transform:scaleX(0.8800);transform-origin:0 50%;">0</span>
<div style="left:1396px;top:905px;width:238px;height:45px;background:none;border:1px solid #a0a0a0;box-shadow:inset 1px 1px 0 #fff,1px 1px 0 #fff;"></div>
<div class="chk" style="left:1403px;top:920px;width:13px;height:13px;background:#fff;"></div>
<span class="t" style="left:1422.30px;top:919px;font-size:12.4px;line-height:14px;color:#000;transform:scaleX(0.8527);transform-origin:0 50%;">Fade</span>
<span class="t" style="left:1503.30px;top:911px;font-size:12.4px;line-height:14px;color:#fff;transform:scaleX(0.8320);transform-origin:0 50%;">In (s)</span>
<span class="t" style="left:1502.30px;top:910px;font-size:12.4px;line-height:14px;color:#808080;transform:scaleX(0.8320);transform-origin:0 50%;">In (s)</span>
<span class="t" style="left:1578.40px;top:911px;font-size:12.4px;line-height:14px;color:#fff;transform:scaleX(0.8208);transform-origin:0 50%;">Out (s)</span>
<span class="t" style="left:1577.40px;top:910px;font-size:12.4px;line-height:14px;color:#808080;transform:scaleX(0.8208);transform-origin:0 50%;">Out (s)</span>
<div class="sunk" style="left:1489px;top:927px;width:68px;height:21px;background:#f0f0f0;"></div>
<span class="t" style="left:1493.00px;top:930px;font-size:12.4px;line-height:14px;color:#808080;transform:scaleX(0.8800);transform-origin:0 50%;">0.01</span>
<div class="sunk" style="left:1562px;top:927px;width:68px;height:21px;background:#f0f0f0;"></div>
<span class="t" style="left:1566.00px;top:930px;font-size:12.4px;line-height:14px;color:#808080;transform:scaleX(0.8800);transform-origin:0 50%;">0.01</span>
<div style="left:1396px;top:955px;width:238px;height:46px;background:none;border:1px solid #a0a0a0;box-shadow:inset 1px 1px 0 #fff,1px 1px 0 #fff;"></div>
<span class="t" style="left:1399.50px;top:959px;font-size:12.4px;line-height:14px;color:#000;transform:scaleX(0.8572);transform-origin:0 50%;">Modulation</span>
<span class="t" style="left:1473.50px;top:960px;font-size:12.4px;line-height:14px;color:#fff;transform:scaleX(0.8061);transform-origin:0 50%;">Carrier (Hz)</span>
<span class="t" style="left:1472.50px;top:959px;font-size:12.4px;line-height:14px;color:#808080;transform:scaleX(0.8061);transform-origin:0 50%;">Carrier (Hz)</span>
<span class="t" style="left:1548.50px;top:960px;font-size:12.4px;line-height:14px;color:#fff;transform:scaleX(0.8326);transform-origin:0 50%;">Mod. Index (%)</span>
<span class="t" style="left:1547.50px;top:959px;font-size:12.4px;line-height:14px;color:#808080;transform:scaleX(0.8326);transform-origin:0 50%;">Mod. Index (%)</span>
<div class="sunk" style="left:1399px;top:977px;width:60px;height:21px;background:#fff;"></div>
<div class="btn" style="left:1440px;top:979px;width:17px;height:17px;background:#f0f0f0;"></div>
<svg class="a" style="left:1440px;top:979px" width="17" height="17"><path d="M4.0 6.5h9l-4.5 4.5z" fill="#000"/></svg>
<span class="t" style="left:1403.00px;top:980px;font-size:12.4px;line-height:14px;color:#000;transform:scaleX(0.8292);transform-origin:0 50%;">NIL</span>
<div class="sunk" style="left:1472px;top:977px;width:67px;height:21px;background:#f0f0f0;"></div>
<span class="t" style="left:1476.00px;top:980px;font-size:12.4px;line-height:14px;color:#808080;transform:scaleX(0.8800);transform-origin:0 50%;">0</span>
<div class="sunk" style="left:1553px;top:977px;width:67px;height:21px;background:#f0f0f0;"></div>
<span class="t" style="left:1557.00px;top:980px;font-size:12.4px;line-height:14px;color:#808080;transform:scaleX(0.8800);transform-origin:0 50%;">0</span>
<span class="t" style="left:1396.70px;top:1009px;font-size:12.4px;line-height:14px;color:#000;transform:scaleX(0.8336);transform-origin:0 50%;">Duration (s)</span>
<div class="sunk" style="left:1460px;top:1008px;width:67px;height:21px;background:#f0f0f0;"></div>
<span class="t" style="left:1464.00px;top:1011px;font-size:12.4px;line-height:14px;color:#808080;transform:scaleX(0.8800);transform-origin:0 50%;">1</span>
<div class="chk" style="left:1532px;top:1011px;width:13px;height:13px;background:#fff;"></div>
<svg class="a" style="left:1532px;top:1011px" width="13" height="13"><path d="M3.500 6l2 2 4-4" fill="none" stroke="#000" stroke-width="1.800"/></svg>
<span class="t" style="left:1551.40px;top:1009px;font-size:12.4px;line-height:14px;color:#000;transform:scaleX(0.8664);transform-origin:0 50%;">Loop</span>
<div class="chk" style="left:1588px;top:1011px;width:13px;height:13px;background:#f0f0f0;"></div>
<span class="t" style="left:1608.50px;top:1011px;font-size:12.4px;line-height:14px;color:#fff;transform:scaleX(0.8479);transform-origin:0 50%;">DDS</span>
<span class="t" style="left:1607.50px;top:1009px;font-size:12.4px;line-height:14px;color:#808080;transform:scaleX(0.8479);transform-origin:0 50%;">DDS</span>
<div class="chk" style="left:1397px;top:1035px;width:13px;height:13px;background:#fff;"></div>
<span class="t" style="left:1415.30px;top:1035px;font-size:12.4px;line-height:14px;color:#000;transform:scaleX(0.8730);transform-origin:0 50%;">Sweep</span>
<svg class="a" style="left:1473px;top:1035px" width="13" height="13"><circle cx="6.500" cy="6.500" r="5.500" fill="#f0f0f0" stroke="#a0a0a0"/><path d="M2.600 10.400a5.500 5.500 0 0 0 7.800-7.800" fill="none" stroke="#fff"/><circle cx="6.500" cy="6.500" r="2.300" fill="#a0a0a0"/></svg>
<svg class="a" style="left:1554px;top:1035px" width="13" height="13"><circle cx="6.500" cy="6.500" r="5.500" fill="#f0f0f0" stroke="#a0a0a0"/><path d="M2.600 10.400a5.500 5.500 0 0 0 7.800-7.800" fill="none" stroke="#fff"/></svg>
<span class="t" style="left:1492.20px;top:1036px;font-size:12.4px;line-height:14px;color:#fff;transform:scaleX(0.8500);transform-origin:0 50%;">Frequency</span>
<span class="t" style="left:1491.20px;top:1035px;font-size:12.4px;line-height:14px;color:#808080;transform:scaleX(0.8500);transform-origin:0 50%;">Frequency</span>
<span class="t" style="left:1572.60px;top:1036px;font-size:12.4px;line-height:14px;color:#fff;transform:scaleX(0.8523);transform-origin:0 50%;">Amplitude</span>
<span class="t" style="left:1571.60px;top:1035px;font-size:12.4px;line-height:14px;color:#808080;transform:scaleX(0.8523);transform-origin:0 50%;">Amplitude</span>
<div style="left:2px;top:566px;width:1367px;height:489px;background:linear-gradient(#9db9d9 0,#b0c8e4 28px,#bdd2ea 34px,#b9d1ea 100%);border:1px solid #3a3a3a;border-radius:7px 7px 0 0;box-shadow:inset 1px 1px 0 rgba(255,255,255,.8),inset -1px -1px 0 #52cdf3;"></div>
<svg class="a" style="left:12px;top:578px" width="16" height="16"><rect width="16" height="16" fill="#00f"/><path d="M1.500 1v13.500M4.500 5v9.500M7.500 8v6.500M10.500 10v4.500M13.500 11v3.500M0 14.500h16" stroke="#ff0" fill="none"/></svg>
<span class="t" style="left:32.00px;top:581px;font-size:12.7px;line-height:14px;color:#000;letter-spacing:0.057px;">Spectrum Analyzer</span>
<div style="left:1247px;top:576px;width:35px;height:20px;background:none;background:linear-gradient(#c6d8ed 0,#bdd1e9 47%,#a2bbd8 53%,#b3c9e2 100%);border:1px solid #5b7394;border-radius:3px;box-shadow:inset 0 0 0 1px rgba(255,255,255,.45);"></div>
<div style="left:1285px;top:576px;width:35px;height:20px;background:none;background:linear-gradient(#c6d8ed 0,#bdd1e9 47%,#a2bbd8 53%,#b3c9e2 100%);border:1px solid #5b7394;border-radius:3px;box-shadow:inset 0 0 0 1px rgba(255,255,255,.45);"></div>
<div style="left:1323px;top:576px;width:35px;height:20px;background:none;background:linear-gradient(#eab2a4 0,#e09885 47%,#c5452c 53%,#d9805f 100%);border:1px solid #5a2a22;border-radius:3px;box-shadow:inset 0 0 0 1px rgba(255,255,255,.45);"></div>
<svg class="a" style="left:1247px;top:576px" width="111" height="20"><rect x="11.500" y="11.0" width="12" height="4" rx="1" fill="#fff" stroke="#535a6a" stroke-width="1"/><path d="M50.500 5.0h11v10h-11zM54.500 9.0h3v3h-3z" fill="#fff" fill-rule="evenodd" stroke="#535a6a" stroke-width="1"/><path transform="translate(0,0.5)" d="M87.500 5l2.500-1 3.500 3.500 3.500-3.500 2.500 1 .5 1.500-3.500 3 3.500 3.500-.5 1.500-2.500 1-3.500-3.500-3.500 3.500-2.500-1-.5-1.500 3.500-3.500-3.500-3z" fill="#fff" stroke="#535a6a" stroke-width=".9"/></svg>
<div style="left:10px;top:599px;width:1351px;height:448px;background:#f0f0f0;border:1px solid;border-color:#6b7b90 #fff #fff #6b7b90;"></div>
<div style="left:12px;top:601px;width:1347px;height:444px;background:#000;"></div>
<svg class="a" style="left:0;top:567px" width="1370" height="490" viewBox="0 567 1370 490" shape-rendering="crispEdges"><rect x="60.5" y="625.5" width="1267" height="392" fill="none" stroke="#545454"/><path d="M60 664.5H1327M60 703.5H1327M60 742.5H1327M60 781.5H1327M60 821.5H1327M60 860.5H1327M60 899.5H1327M60 938.5H1327M60 977.5H1327M132.5 625V1017M183.5 625V1017M223.5 625V1017M256.5 625V1017M283.5 625V1017M307.5 625V1017M328.5 625V1017M347.5 625V1017M471.5 625V1017M544.5 625V1017M595.5 625V1017M635.5 625V1017M668.5 625V1017M695.5 625V1017M719.5 625V1017M740.5 625V1017M759.5 625V1017M883.5 625V1017M956.5 625V1017M1007.5 625V1017M1047.5 625V1017M1080.5 625V1017M1107.5 625V1017M1131.5 625V1017M1152.5 625V1017M1171.5 625V1017M1295.5 625V1017" stroke="#545454" stroke-dasharray="3 3" fill="none"/><path d="M60 839.500H1294" stroke="#0ff" stroke-dasharray="4 3" fill="none"/><polyline fill="none" stroke="#0ff" stroke-width="1" points="57,926.2 60.3,926.3 63.5,926.5 66.7,927 69.8,927.6 72.8,928.3 75.9,928.7 78.8,928.9 81.7,928.8 84.6,928.7 87.4,928.5 90.2,928.4 92.9,928.4 95.6,928.4 98.2,928.4 100.9,928.7 103.4,929.4 106,930.1 108.5,931 110.9,932.2 113.4,933.5 115.8,934.8 118.1,936.1 120.5,937 122.8,937.7 125.1,937.9 127.3,937.5 129.5,936.8 131.7,936.1 133.9,935 136.1,933.6 138.2,932.7 140.3,931.8 142.3,931 144.4,930.7 146.4,930.7 148.4,930.8 150.4,931.1 152.3,931.4 154.3,931.9 156.2,932.9 158.1,933.9 159.9,935.1 161.8,936.1 163.6,937 165.5,937 167.3,936.7 169,935.8 170.8,934.6 172.5,932.9 174.3,931.5 176,931 177.7,930.7 179.4,931.5 181,932.9 182.7,933.6 184.3,934.2 185.9,935.3 187.5,935.6 189.1,935.9 190.7,936 192.3,935.9 193.8,936.1 195.3,935.9 196.9,935.9 198.4,935.4 199.9,935.2 201.4,934.8 202.8,934.6 204.3,933.5 205.7,933.1 207.2,932.3 208.6,932 210,931.7 211.4,931.8 212.8,932.3 214.2,932.8 215.6,934.1 216.9,914.7 218.3,894.1 219.6,878.1 220.9,866.5 222.3,859.4 223.6,856.7 224.9,858.5 226.2,864.8 227.5,875.6 228.7,890.9 230,910.6 231.3,934.8 232.5,935 233.7,934.7 235,934.5 236.2,934.2 237.4,935 238.6,936 239.8,935.8 241,936.3 242.2,937.5 243.3,937.4 244.5,938.1 245.7,938.3 246.8,938.6 248,938.7 249.1,939 250.2,938.9 251.3,938.9 252.5,937.8 253.6,937.1 254.7,935.4 255.8,934.8 256.9,934.7 257.9,934.6 259,934.2 260.1,933.8 261.1,934.6 262.2,935.4 263.2,935.7 264.3,936.7 265.3,937.2 266.4,937.5 267.4,937.7 268.4,937.8 269.4,937.8 270.4,937.1 271.4,937.5 272.4,937.4 273.4,938 274.4,939 275.4,939.7 276.4,940.4 277.3,940.6 278.3,939.8 279.3,937.7 280.2,935.9 281.2,934.9 282.1,934.4 283,934.7 284,935.5 284.9,937.7 285.8,939.3 286.7,941.2 287.7,942 289,942.6 289,942.6 289,942.6 289,942.6 290.4,943.1 291.3,942 292.2,940.8 293.1,940.7 293.9,940.1 294.8,938.4 295.7,937.7 297,936.4 297,935 297,936.4 297,935 298.3,934.3 299.2,933.5 300,932.1 300.9,932 301.7,932.4 303,933 303,933 303,933.9 303,933.9 304.2,935.2 305,936.4 305.9,937.5 306.7,938.6 308,939.6 308,939.6 308,940.3 308,940.3 309.1,940.8 309.9,940.7 310.8,939.5 312,939.2 312,938.7 312,939.2 312,938.7 313.1,937.5 313.9,938 314.7,937.7 316,938.8 316,938.8 316,939.6 316,939.6 317.1,939.2 317.8,939.1 319,939.5 319,939.5 319,939.8 319,939.8 320.1,939.8 320.9,940.5 322,941 322,941 322,941.6 322,941.6 323.2,942.3 323.9,941.9 325,942.5 325,942.3 325,942.5 325,942.3 326.1,942 326.9,942.1 328,941.9 328,941.4 328,941.9 328,941.4 329,942.3 330,941.3 330,941.3 330,941.3 330,941.3 331.2,941.2 331.9,941 333,940.2 333,940.2 333,940.8 333,940.8 334,940 335,939 335,938.7 335,939 335,938.7 336.1,937.6 336.8,937.8 338,936.9 338,936.4 338,936.9 338,936.4 338.9,937.9 340,937.9 340,937.9 340,937.9 340,937.9 341,940.2 342,940.3 342,939.3 342,940.3 342,939.3 343,939.6 344,938.9 344,938.8 344,938.9 344,938.8 345,938.6 346,938 346,938 346,939.4 346,939.4 347,926 348,911.2 348,911.2 348,913.3 348,913.3 348.9,928 350,944.6 350,944.6 350,945.9 350,945.9 351,946.4 351,946.3 351,946.4 351,946.3 352.1,946 353,944.4 353,942.5 353,944.4 353,942.5 354,941.3 355,940.5 355,940.1 355,940.5 355,940.1 355.9,940 357,940.8 357,940.5 357,940.8 357,940.5 358,941.2 358,941.2 358,942.6 358,942.6 359,942 360,942.1 360,942.1 360,942.2 360,942.2 361,941.7 361,930 361,941.7 361,930 362,933.5 363,940 363,939.8 363,940 363,939.8 364,938.2 364,937 364,938.2 364,937 365,936.2 366,935.5 366,934.7 366,935.5 366,934.7 367,935.6 367,935.4 367,935.6 367,935.4 368,936.1 369,935.1 369,935.1 369,935.7 369,935.7 370,936 370,935.7 370,936 370,935.7 371,936.5 371,936.5 371,936.7 371,936.7 372,937.9 373,939.4 373,938.7 373,939.4 373,938.7 374,939.4 374,939.4 374,940.1 374,940.1 375,940.7 375,940.7 375,941 375,941 376,941.8 376,941.8 376,942.6 376,942.6 377,942 378,943 378,943 378,943.2 378,943.2 379,942.4 379,942.4 379,942.6 379,942.6 380,941.7 380,941.5 380,941.7 380,941.5 381,939.6 381,938.9 381,939.6 381,938.9 382,938.3 382,938.3 382,939.4 382,939.4 383,938.4 384,939.4 384,939.4 384,940.1 384,940.1 385,939.3 385,939.3 385,939.7 385,939.7 386,939.9 386,939.5 386,939.9 386,939.5 387,940.7 387,939.8 387,940.7 387,939.8 388,940.1 388,940.1 388,941.2 388,941.2 389,942 389,941.9 389,942 389,941.9 390,942.6 390,942.6 390,943.1 390,943.1 391,942.6 391,942.6 391,943.8 391,943.8 392,943.7 392,942.5 392,943.7 392,942.5 393,942.4 393,941 393,942.4 393,941 394,940.7 394,939.2 394,940.7 394,939.2 395,938.1 395,938.1 395,940 395,940 396,940.7 396,940.7 396,941.8 396,941.8 397,942.9 397,942.9 397,943 397,943 398,942.7 398,941.4 398,942.7 398,941.4 399,940.1 399,939.3 399,940.1 399,939.3 400,938.6 400,938.6 400,938.9 400,938.9 401,939.2 401,938.8 401,939.2 401,938.8 402,939.7 402,939.3 402,939.7 402,939.3 403,940 403,939.2 403,940 403,939.2 404,939.7 404,939.2 404,939.7 404,939.2 405,939.3 405,939.3 405,940.1 405,940.1 406,940.8 406,940.4 406,940.8 406,940.4 407,940.9 407,940.9 407,941.2 407,941.2 408,939 408,937.5 408,939.8 408,937.5 409,936.1 409,936.1 409,936.6 409,936.6 410,936.8 410,936.8 410,937.1 410,937.1 411,936.9 411,936.9 411,937.3 411,937.3 412,937.9 412,937.9 412,938.3 412,938.3 413,940.2 413,940.2 413,940.4 413,940.4 414,942.6 414,942.6 414,944.2 414,944.2 415,944.1 415,944.1 415,944.5 415,944.5 416,943 416,942.2 416,943 416,942.2 417,941.2 417,940.5 417,941.2 417,940.5 418,941.3 418,939.8 418,941.8 418,939.8 419,931.9 419,901.9 419,931.9 419,901.9 420,885.9 420,883 420,885.9 420,883 421,895.9 421,895.9 421,939.9 421,939.9 422,941 422,941 422,942 422,942 423,942 423,941.6 423,942 423,941.6 424,941.6 424,941.3 424,942.4 424,941.3 425,940.5 425,940.4 425,940.5 425,940.4 426,941.1 426,939.9 426,941.1 426,939.9 427,939.8 427,939.8 427,940.7 427,940.7 428,939.4 428,939.3 428,939.4 428,939.3 429,938.3 429,938.3 429,939.9 429,939.9 430,939.8 430,939.4 430,939.8 430,939.4 431,940.6 431,940.6 431,941.2 431,941.2 432,942.1 432,942.1 432,942.3 432,942.3 433,942.8 433,942.8 433,943.5 433,943.5 434,942.7 434,942.7 434,943.9 434,943.1 435,942 435,941.3 435,942 435,941.3 436,941.3 436,939.3 436,941.3 436,939.3 437,939 437,939 437,939.4 437,939.4 438,939.7 438,939.7 438,941.1 438,941.1 439,942.4 439,942.4 439,942.6 439,942.6 440,941.7 440,940.8 440,941.9 440,940.8 441,940.8 441,938.9 441,940.8 441,938.9 442,939 442,938 442,939 442,938 443,938.3 443,938 443,938.9 443,938.9 444,940.1 444,940.1 444,942.5 444,942.5 445,943 445,943 445,944.5 445,944.5 446,945 446,945 446,945.9 446,945.8 447,945.5 447,945.5 447,946 447,946 448,944.2 448,942.1 448,944.2 448,942.1 449,941.8 449,941.1 449,941.8 449,941.1 450,942.3 450,942.3 450,942.3 450,942.3 451,941.4 451,941.4 451,942.8 451,941.9 452,943.3 452,943.3 452,944.7 452,944.7 453,945.2 453,944.3 453,945.2 453,944.3 454,943.6 454,943.3 454,943.6 454,943.3 455,942.3 455,940.5 455,942.3 455,940.5 456,940.9 456,940.1 456,940.9 456,940.1 457,940.7 457,940.1 457,941.2 457,940.1 458,940.1 458,940.1 458,940.8 458,940.6 459,941.2 459,941.2 459,941.6 459,941.6 460,919.1 460,894.8 460,919.1 460,894.8 461,884 461,884 461,905.7 461,905.7 462,937.3 462,937.3 462,941.3 462,941.3 463,943.3 463,940.6 463,943.3 463,940.6 464,941.1 464,939.8 464,941.1 464,939.8 465,940.5 465,940.1 465,940.7 465,940.7 466,942 466,941 466,942 466,941.9 467,943.6 467,943.6 467,944 467,944 468,945.6 468,945.2 468,945.7 468,945.2 469,945.5 469,944.4 469,945.5 469,944.4 470,943.4 470,941.9 470,943.4 470,941.9 471,942.1 471,938.2 471,943.1 471,938.2 472,923.9 472,922 472,937.3 472,937.3 473,942.1 473,942.1 473,943.3 473,943.1 474,943.6 474,943.6 474,944 474,944 475,943.6 475,942.7 475,943.6 475,942.7 476,941.3 476,939.2 476,941.3 476,939.4 477,940.1 477,939.5 477,940.4 477,939.5 478,940.5 478,940.5 478,941.7 478,941.3 479,941.6 479,941.6 479,942.5 479,942.4 480,941.4 480,941.4 480,941.8 480,941.5 481,942.3 481,941.5 481,943.4 481,943.4 482,942.5 482,942.5 482,943.2 482,943.2 483,944.1 483,943.3 483,944.1 483,943.4 484,943.6 484,943.3 484,943.6 484,943.3 485,943 485,941.4 485,943.2 485,943.2 486,942.1 486,942.1 486,944 486,944 487,942.7 487,942.7 487,943.4 487,943.4 488,941 488,939.2 488,941.5 488,939.2 489,939.3 489,939.3 489,941.1 489,940.4 490,940.3 490,940.3 490,941.2 490,940.7 491,940.5 491,940.5 491,943.3 491,943.3 492,944.1 492,944.1 492,945.1 492,945.1 493,945.9 493,945.9 493,948.2 493,948.1 494,947.6 494,946.2 494,947.6 494,946.5 495,944 495,940.2 495,944 495,940.2 496,940.5 496,940.5 496,942.3 496,942.3 497,943.9 497,943.2 497,943.9 497,943.2 498,943.1 498,941.6 498,943.1 498,941.6 499,942.5 499,942.3 499,943.6 499,943.2 500,944.9 500,944.9 500,946.6 500,946.2 501,947.7 501,944.6 501,947.7 501,944.6 502,944 502,940.4 502,944 502,940.4 503,940.7 503,940.7 503,941.7 503,941.1 504,941.8 504,939.9 504,941.8 504,939.9 505,939.4 505,937.9 505,939.4 505,938.3 506,938 506,938 506,938.7 506,938 507,938.6 507,938.4 507,940.2 507,940.2 508,941.7 508,941.7 508,945.6 508,945.6 509,944.4 509,944.4 509,946.4 509,945.4 510,944 510,944 510,944.8 510,944.5 511,943.4 511,906.3 511,943.4 511,906.3 512,891.6 512,889.5 512,931.5 512,931.5 513,942.5 513,941.9 513,943.2 513,943.2 514,942.4 514,941.3 514,942.8 514,941.3 515,941 515,920 515,943.3 515,920 516,905.5 516,905.5 516,943.4 516,943.4 517,943.3 517,942 517,944 517,942.5 518,945.5 518,945 518,946.2 518,945 519,945.2 519,942.6 519,945.2 519,943.1 520,942.3 520,942 520,944.1 520,944.1 521,942.6 521,942.6 521,944.4 521,944.3 522,943.9 522,943.9 522,946.2 522,946.2 523,944.6 523,944.5 523,946.5 523,945.1 524,942.1 524,941.1 524,942.6 524,941.1 525,940.9 525,940.9 525,942.5 525,942.5 526,942.3 526,941.3 526,942.3 526,942.1 527,940.9 527,939.5 527,940.9 527,939.9 528,939.7 528,938.2 528,940.9 528,938.2 529,938.5 529,938.5 529,940.6 529,940.5 530,942.5 530,942.5 530,944.4 530,944.4 531,944 531,943.9 531,945 531,944.3 532,943.3 532,940.6 532,944 532,940.6 533,939.5 533,939.5 533,941 533,939.6 534,942.2 534,939.9 534,942.2 534,939.9 535,939.8 535,939.1 535,940 535,939.8 536,941.5 536,941.2 536,942.1 536,941.9 537,942.5 537,942.5 537,945.5 537,945.5 538,945.5 538,945.1 538,946.5 538,945.1 539,945.7 539,944.5 539,946.8 539,944.5 540,944.6 540,942.8 540,944.8 540,944.8 541,943.4 541,943.4 541,944 541,944 542,943 542,943 542,944.3 542,944.3 543,943.9 543,943.2 543,944.1 543,943.3 544,944.6 544,943.7 544,944.6 544,944.2 545,943.4 545,943.4 545,947 545,947 546,946.2 546,946.2 546,948.6 546,948.4 547,948.8 547,946.8 547,948.8 547,946.8 548,943.8 548,943.7 548,945.1 548,943.7 549,943.9 549,943.9 549,945.8 549,945.8 550,945.4 550,943.7 550,945.8 550,943.7 551,941.9 551,941.1 551,942.3 551,942.2 552,941.8 552,941.8 552,947.3 552,947.3 553,947.8 553,944.4 553,947.8 553,945.1 554,943.6 554,942.8 554,944.2 554,944 555,945.4 555,943.1 555,946.6 555,943.1 556,942 556,941.6 556,942.6 556,941.7 557,943.2 557,942.9 557,944.6 557,944.2 558,942.9 558,938.1 558,942.9 558,938.1 559,936.8 559,936.1 559,937.7 559,937.7 560,938 560,938 560,941 560,941 561,942.2 561,942.2 561,947 561,947 562,947.9 562,946.6 562,948.6 562,946.6 563,945.9 563,941 563,945.9 563,941 564,940.1 564,940.1 564,941.6 564,941.6 565,942.3 565,940.8 565,943.4 565,941.6 566,942 566,940.9 566,943.9 566,943.9 567,943.3 567,943.3 567,946.9 567,946.9 568,946.7 568,942.6 568,946.7 568,944.2 569,942.8 569,942.3 569,945.1 569,945.1 570,943.2 570,937.2 570,943.2 570,937.2 571,937.5 571,937.5 571,941.6 571,941.6 572,941.7 572,900 572,944.6 572,943.8 573,943.5 573,943.4 573,945 573,945 574,945 574,945 574,947.4 574,946.8 575,948.3 575,947.9 575,949.6 575,947.9 576,947.4 576,944.5 576,947.6 576,944.5 577,942.9 577,942.9 577,946.4 577,942.9 578,943.1 578,941 578,943.1 578,941 579,940 579,940 579,944.5 579,944.5 580,942.1 580,939.4 580,942.2 580,939.4 581,940.1 581,939.7 581,941.7 581,941.7 582,941.2 582,941.2 582,946.4 582,946.4 583,947.5 583,942.5 583,947.5 583,942.5 584,941 584,941 584,944.7 584,944.7 585,903 585,903 585,947.1 585,946.6 586,947.3 586,947.3 586,948.9 586,948 587,948.4 587,944.8 587,948.8 587,944.8 588,945.2 588,941.3 588,945.2 588,943.9 589,941.8 589,941.8 589,944.4 589,943.2 590,946.1 590,944 590,947.1 590,947.1 591,946.3 591,945.7 591,948.2 591,945.7 592,945.4 592,941.7 592,945.4 592,941.7 593,943.2 593,941.2 593,943.4 593,942.4 594,941.9 594,940.8 594,943.4 594,943.4 595,942.8 595,942.8 595,945.8 595,944.2 596,945.4 596,942.9 596,945.4 596,944.1 597,943.8 597,943.8 597,945.2 597,944.9 598,944 598,943 598,945.9 598,945.9 599,944.1 599,942.9 599,945.3 599,942.9 600,941.8 600,939.4 600,943.1 600,943.1 601,941.4 601,941.4 601,944.5 601,944.5 602,943.1 602,939.7 602,943.1 602,942 603,942.7 603,942.6 603,946.2 603,945.4 604,942.7 604,942.6 604,943.9 604,943.9 605,943.4 605,943.4 605,946.3 605,946.3 606,945.9 606,944.6 606,947.1 606,945.2 607,944.7 607,942.2 607,949.3 607,942.2 608,945.7 608,941.5 608,945.7 608,944.4 609,944.9 609,944.5 609,946.9 609,944.5 610,941.4 610,939.3 610,941.4 610,939.4 611,940.6 611,940.6 611,945.7 611,945.7 612,944.5 612,944.1 612,948.2 612,948.2 613,946.4 613,944.1 613,947.3 613,944.8 614,945.7 614,945.4 614,946.9 614,946.9 615,946.2 615,945.9 615,949.1 615,946.6 616,946.6 616,939.6 616,946.6 616,941.7 617,939.6 617,910 617,948.8 617,948.8 618,946.1 618,945 618,947.5 618,947.4 619,948.3 619,945.4 619,949.7 619,949.2 620,949 620,945.8 620,950.3 620,948.1 621,946.5 621,946.5 621,951.5 621,948.2 622,948.1 622,943.3 622,948.1 622,943.6 623,944.4 623,943.5 623,947.6 623,947.6 624,946.7 624,941.8 624,948.8 624,941.8 625,942.1 625,940.8 625,944.7 625,943.5 626,944.9 626,943.5 626,946.4 626,943.5 627,945.8 627,940 627,945.8 627,940 628,940.2 628,940.2 628,945.6 628,943 629,946.3 629,946.3 629,950.7 629,947.6 630,944.9 630,943.7 630,947.4 630,947.4 631,946.4 631,944.1 631,947.5 631,944.3 632,944.4 632,877 632,948 632,944.9 633,945.5 633,944.5 633,951 633,951 634,947.5 634,944.6 634,951 634,944.6 635,945.3 635,942.5 635,946.1 635,944.5 636,945.5 636,944.9 636,948.5 636,946.7 637,947.1 637,945.7 637,947.9 637,947.4 638,947.6 638,947.6 638,950 638,948.2 639,948.9 639,943.3 639,948.9 639,946.3 640,915 640,915 640,947 640,947 641,947.1 641,942.7 641,947.2 641,942.7 642,946.4 642,944.5 642,946.8 642,946.8 643,946.2 643,941.2 643,946.2 643,941.2 644,941.1 644,941.1 644,951.1 644,951.1 645,948.3 645,943.3 645,950.5 645,943.3 646,945.2 646,944.7 646,948.8 646,947.4 647,946.7 647,944.7 647,947 647,946.5 648,947.4 648,945.6 648,949.4 648,945.6 649,948.8 649,941.7 649,948.8 649,943.1 650,942.5 650,940 650,944.7 650,944.7 651,946.1 651,943.6 651,947.4 651,943.6 652,943.4 652,901 652,945.9 652,901 653,945.1 653,942.6 653,947.3 653,945.6 654,943.5 654,942.8 654,946 654,945.3 655,947.3 655,942.7 655,947.3 655,944.9 656,944.4 656,943.8 656,946 656,944.3 657,943.6 657,907.8 657,952.1 657,907.8 658,945.1 658,942.6 658,947.5 658,942.7 659,942 659,941.5 659,947.3 659,947.3 660,947.6 660,941.8 660,947.6 660,942.7 661,940.8 661,940.8 661,946.5 661,946.5 662,947.1 662,946.2 662,952.5 662,952.5 663,952.7 663,948.4 663,954.3 663,948.8 664,947.8 664,944.2 664,948.1 664,944.2 665,944.3 665,944.3 665,949 665,948.5 666,949.2 666,926 666,949.5 666,926 667,948.7 667,946.2 667,948.7 667,948.4 668,948.8 668,945.1 668,951.6 668,951.6 669,947.7 669,945.9 669,949.6 669,948.9 670,946.1 670,943.4 670,947.3 670,944.8 671,946 671,940.6 671,946.2 671,946.2 672,946.4 672,944.7 672,946.6 672,944.7 673,944.1 673,944.1 673,951.2 673,951.2 674,949.4 674,944.9 674,949.4 674,945.4 675,946.6 675,944.3 675,947.8 675,947.4 676,949.1 676,946.3 676,950.2 676,947.8 677,949.1 677,948.6 677,950.8 677,949.7 678,948.7 678,945 678,952.4 678,947.6 679,947.6 679,946.7 679,951.7 679,947.7 680,946.6 680,943.8 680,949.4 680,946.9 681,942.4 681,942.4 681,950.7 681,950.7 682,946.5 682,913 682,948.4 682,913 683,947.3 683,945.6 683,949.6 683,945.6 684,947.6 684,944.4 684,950.8 684,950.8 685,949.5 685,946.9 685,950.9 685,950 686,952.2 686,945 686,952.2 686,950.1 687,946.7 687,944.7 687,950.4 687,950.4 688,946.7 688,945.2 688,949.3 688,945.8 689,944.6 689,944.6 689,947.9 689,947.7 690,947.3 690,945.8 690,949.4 690,949.4 691,949.5 691,945.8 691,952.7 691,946.5 692,945.7 692,942.4 692,948.1 692,945.3 693,945.6 693,945.6 693,951.3 693,951.3 694,948.8 694,948.2 694,951.5 694,949.4 695,947.9 695,944.1 695,948.4 695,944.1 696,947.2 696,942.7 696,947.2 696,945.9 697,945.9 697,943.5 697,949.3 697,943.5 698,941.9 698,941.9 698,948.6 698,945.5 699,945.1 699,943.6 699,945.8 699,945.1 700,947.4 700,943.8 700,949.8 700,947.5 701,945.5 701,944.6 701,951.2 701,944.6 702,945.9 702,945 702,950.5 702,946.1 703,945.9 703,943 703,946.1 703,946.1 704,943.7 704,942.1 704,946.4 704,942.1 705,942 705,941.7 705,948.2 705,947.5 706,944.7 706,944.7 706,949.2 706,947.8 707,947.1 707,944.7 707,949.3 707,945.5 708,944.9 708,893 708,947 708,947 709,948.2 709,944.4 709,951.6 709,945.1 710,944 710,944 710,948.8 710,946.6 711,947.2 711,944.7 711,952.1 711,944.7 712,945.2 712,924 712,951 712,947.3 713,945.6 713,945.6 713,950.5 713,946.5 714,948 714,945 714,950.1 714,949.7 715,946.6 715,945.3 715,950.9 715,948.6 716,951 716,945.2 716,951 716,947.5 717,946.9 717,944.7 717,953.1 717,951.6 718,950.5 718,942.7 718,950.5 718,944 719,946.5 719,944.3 719,950.4 719,945.5 720,949.4 720,945.3 720,951 720,946.6 721,945.8 721,943.4 721,947.9 721,943.4 722,944.3 722,944.2 722,949.1 722,947.1 723,944.1 723,943.6 723,949.8 723,945.9 724,948.7 724,946.9 724,951.2 724,947.7 725,947.6 725,944.6 725,950 725,946.2 726,946.5 726,945.8 726,953.4 726,951.1 727,949 727,945.3 727,949.8 727,949.5 728,946.6 728,946.2 728,951.9 728,950.7 729,949.1 729,943.6 729,949.7 729,949.7 730,944.8 730,902 730,946.3 730,946.3 731,949.2 731,945.7 731,949.6 731,949.6 732,949.7 732,944.1 732,951.4 732,944.1 733,944.1 733,944.1 733,952.5 733,949.7 734,947.9 734,946.4 734,951 734,947 735,948 735,943.8 735,949.8 735,949.8 736,951.4 736,946.6 736,954.8 736,946.7 737,948.1 737,945.7 737,952.2 737,949.7 738,947.6 738,945.7 738,949.7 738,945.8 739,949.2 739,942.2 739,949.2 739,946.3 740,945 740,945 740,951.4 740,948.4 741,951.9 741,945.4 741,954.3 741,949.1 742,949.4 742,946 742,951.1 742,947 743,948 743,945.2 743,954.7 743,952.1 744,950.5 744,946 744,952.5 744,947.2 745,949.4 745,943.5 745,950.5 745,948.9 746,948.4 746,947 746,953.3 746,948 747,946 747,944.4 747,949.1 747,948.3 748,947.4 748,914 748,951.2 748,950.7 749,949.2 749,944 749,950.6 749,944.5 750,944.1 750,897 750,952.4 750,897 751,942.7 751,942.7 751,950.8 751,948.3 752,947.9 752,944.4 752,951.1 752,946.3 753,948 753,946.8 753,952.6 753,947 754,946.2 754,945.5 754,950.3 754,946.5 755,947.9 755,947 755,952.5 755,947 756,944.5 756,875 756,949.9 756,947.7 757,946.4 757,939.8 757,951.5 757,950.6 758,950.3 758,943.6 758,954.7 758,947 759,946.4 759,775.6 759,947.9 759,945.3 760,943.6 760,943.1 760,949 760,946.8 761,945.4 761,867 761,947.9 761,945.3 762,947.7 762,945 762,951.9 762,946.2 763,947.8 763,920 763,950.9 763,945.2 764,947.2 764,943.3 764,951 764,949 765,947 765,943.1 765,949.9 765,949.9 766,950.7 766,943.4 766,950.7 766,949.8 767,949.5 767,949.2 767,955.1 767,949.2 768,947.3 768,947.1 768,955.7 768,949.3 769,946.4 769,942.9 769,949.7 769,943.3 770,941.6 770,941.6 770,951.6 770,948.1 771,952.6 771,947.9 771,953.6 771,951.5 772,949.3 772,942.8 772,951.9 772,942.8 773,944.6 773,941 773,948.3 773,948.2 774,947.2 774,943.1 774,951.4 774,943.9 775,946.5 775,945.1 775,952.9 775,950.4 776,948.1 776,944.8 776,951.4 776,946.1 777,946.7 777,943.2 777,953.1 777,953.1 778,949.3 778,944.3 778,949.4 778,948.4 779,940.4 779,940.4 779,950.4 779,949.9 780,949.5 780,942.5 780,949.5 780,946.1 781,944.9 781,906 781,954 781,947.5 782,951.3 782,947.7 782,951.5 782,947.9 783,950.7 783,945.1 783,954.6 783,946.2 784,946.1 784,928 784,952.4 784,946.8 785,946.2 785,944.9 785,952 785,952 786,951.2 786,940.6 786,951.6 786,945.5 787,944.5 787,941.7 787,951.2 787,951.2 788,947.8 788,944.4 788,953.5 788,952.5 789,953.3 789,946.6 789,953.3 789,946.6 790,948.4 790,928 790,954.6 790,944.9 791,945.9 791,945.9 791,953.5 791,951.3 792,949.7 792,945.7 792,953.5 792,949 793,950.1 793,941.5 793,953 793,944 794,945.2 794,943.7 794,951.8 794,951.8 795,952.7 795,943.7 795,953.5 795,945.5 796,942.4 796,942.4 796,953.2 796,949.5 797,949.5 797,943.3 797,952.3 797,948.8 798,949.5 798,941.9 798,951.5 798,947.5 799,950.9 799,918 799,953.4 799,950.2 800,949.9 800,945.8 800,952.3 800,946.7 801,946.9 801,941.9 801,952.4 801,947.1 802,949 802,944.5 802,954.9 802,954.9 803,950.6 803,927 803,952.1 803,952.1 804,948.9 804,941.7 804,953 804,948.7 805,950.8 805,945.9 805,952.2 805,945.9 806,950 806,944 806,953.7 806,952.1 807,945.7 807,943.6 807,950.3 807,948.4 808,950.6 808,944.6 808,951.8 808,945.8 809,946 809,922 809,954.4 809,954.4 810,952.8 810,944.8 810,952.8 810,948.4 811,950.2 811,941.4 811,952.3 811,950.7 812,944.4 812,944.4 812,952.4 812,948.6 813,949.2 813,948.2 813,956.2 813,948.2 814,950.9 814,942.8 814,950.9 814,950.6 815,947.4 815,942.6 815,954.5 815,947.4 816,947.7 816,943.7 816,952.4 816,946.2 817,943.1 817,943.1 817,951.4 817,948 818,944.8 818,943.8 818,953.3 818,947 819,949 819,945.2 819,953.6 819,949.1 820,947 820,940.4 820,949.6 820,941.9 821,945.3 821,942.8 821,953.6 821,950.5 822,949.7 822,942.8 822,953.7 822,944.9 823,947.7 823,943 823,950.2 823,949.6 824,951.3 824,946.3 824,953.9 824,948.4 825,947.7 825,941.8 825,948.4 825,946.4 826,942.5 826,941.5 826,952.8 826,948 827,948.3 827,944.5 827,952.6 827,947 828,953.4 828,944.7 828,953.4 828,947.2 829,948.1 829,879.8 829,953.6 829,944 830,945.2 830,943.5 830,954.4 830,947.1 831,948.2 831,944.6 831,952.2 831,947.2 832,946.5 832,914 832,954.2 832,950.4 833,947.6 833,944.5 833,952.3 833,944.6 834,947.6 834,943.1 834,956.3 834,945.3 835,948.2 835,947.1 835,952.9 835,950.5 836,945.5 836,941.1 836,950 836,947.1 837,951.1 837,923 837,951.1 837,949.9 838,943 838,942.3 838,955.7 838,952.5 839,948.9 839,944.3 839,953.9 839,948.3 840,948.5 840,941.5 840,950.4 840,946.4 841,945.6 841,942.7 841,952.8 841,946.8 842,943.2 842,943.2 842,953.5 842,946.8 843,947 843,943 843,955.7 843,949.7 844,949.5 844,945.7 844,954 844,951.7 845,951 845,941.7 845,951 845,946.1 846,946.7 846,945.9 846,952 846,951.3 847,949.2 847,943 847,955 847,950.7 848,954.8 848,940.4 848,954.8 848,943.4 849,949.1 849,942.4 849,952.7 849,951.8 850,955.1 850,944.3 850,955.1 850,948.9 851,946.5 851,943.8 851,953.9 851,947.1 852,947.8 852,940.5 852,950.3 852,945.5 853,945.3 853,930.7 853,952.4 853,945.1 854,946.5 854,942.2 854,950.7 854,948.2 855,944.5 855,944.5 855,952.3 855,952.3 856,949.7 856,945.9 856,953.7 856,945.9 857,944.5 857,942.5 857,954.3 857,954.3 858,950.8 858,942.9 858,951.2 858,949.5 859,950.2 859,941.7 859,951.6 859,943.4 860,949.4 860,944.9 860,952.6 860,949.7 861,950.5 861,946.3 861,953.4 861,948.6 862,944.3 862,943.3 862,952.4 862,948.3 863,946.4 863,924 863,951.1 863,948.2 864,947.2 864,944.4 864,951.9 864,949.6 865,949.8 865,943.9 865,954.1 865,948.3 866,948.2 866,943.1 866,951.7 866,947.9 867,946.5 867,943.7 867,953.5 867,946.9 868,946.1 868,945.2 868,955.9 868,951.2 869,950.7 869,940.6 869,952.9 869,945.6 870,949.7 870,944 870,951.3 870,950.3 871,951.1 871,943.5 871,954.3 871,950.4 872,952.4 872,913 872,952.4 872,947.7 873,945.4 873,943.5 873,951 873,946.8 874,950.5 874,943.9 874,952.2 874,948.9 875,946 875,941 875,953.6 875,953.6 876,947.9 876,943.7 876,953.3 876,943.7 877,944.1 877,942 877,954.5 877,947.5 878,942.2 878,939.7 878,950.2 878,944.2 879,946.2 879,940.5 879,953.2 879,948.9 880,949.3 880,891.8 880,952.6 880,950.2 881,951.4 881,942.5 881,952.8 881,945.7 882,949 882,941.4 882,953.9 882,949.8 883,945.9 883,920.4 883,953.1 883,947.6 884,947.5 884,941.9 884,952 884,949.2 885,946.8 885,943 885,952.7 885,948.9 886,948.4 886,941.4 886,955.5 886,941.4 887,942.3 887,939 887,952.9 887,947.6 888,951.1 888,943.5 888,953.6 888,948.7 889,946.7 889,909 889,952.6 889,949 890,948.1 890,942.9 890,952 890,945.7 891,944 891,940.7 891,949.3 891,945.2 892,948.2 892,942.8 892,951.4 892,947.1 893,954.5 893,940.9 893,954.5 893,941.4 894,946 894,942.1 894,954.3 894,948.2 895,947 895,943.7 895,960.2 895,943.8 896,944.2 896,944.2 896,952.4 896,952.4 897,946.1 897,944.8 897,956.8 897,946.2 898,948.1 898,939.9 898,953.2 898,953 899,949.7 899,943.1 899,951.7 899,947.7 900,951.3 900,943.4 900,953.1 900,944.1 901,947 901,942.7 901,952.2 901,948.5 902,945.2 902,941.4 902,953.7 902,947 903,951.5 903,944.7 903,952.1 903,946.3 904,943.6 904,942.7 904,953.9 904,953.9 905,947.7 905,922 905,956.7 905,943.6 906,946.9 906,938.7 906,952.6 906,947.4 907,945.6 907,940 907,953.7 907,950.4 908,950.6 908,925 908,953.6 908,946.4 909,950 909,943 909,953.7 909,945.4 910,946.8 910,944.3 910,954.9 910,950.5 911,948.1 911,944.2 911,953.4 911,946.9 912,947.8 912,941.4 912,954 912,946.9 913,946.9 913,939.8 913,950.8 913,945.8 914,949.6 914,929.6 914,951.9 914,947.9 915,946.9 915,942.2 915,952.7 915,945 916,951.7 916,940 916,954.1 916,952.1 917,948.8 917,941.2 917,954.7 917,950.7 918,944.9 918,942.8 918,953.6 918,944.4 919,946.4 919,930 919,954.2 919,930 920,952.2 920,942.8 920,954.3 920,947.3 921,947 921,942.5 921,952.6 921,942.5 922,948.6 922,942.8 922,955.4 922,947.4 923,950.8 923,940.5 923,951.8 923,945.6 924,949.6 924,942.5 924,952.4 924,952.1 925,952 925,942.3 925,953.6 925,944.2 926,944.4 926,944.4 926,955.3 926,946.6 927,945.6 927,943.2 927,952 927,948.8 928,929 928,929 928,955 928,944.8 929,949.2 929,941.9 929,952.9 929,949.8 930,951.1 930,942.7 930,955.1 930,948.6 931,947.6 931,944.3 931,959 931,945.8 932,949.2 932,926.8 932,952.1 932,926.8 933,948.9 933,945.5 933,954.8 933,946.4 934,955.3 934,941.9 934,955.3 934,949 935,949.2 935,943.3 935,953.2 935,949.7 936,950.5 936,941.9 936,954.6 936,945.5 937,946.8 937,943 937,953.3 937,944.7 938,943.9 938,943.8 938,955.5 938,948.3 939,947.4 939,943.2 939,955.5 939,948.9 940,946 940,940.2 940,952.4 940,945.3 941,946.2 941,942.6 941,957.6 941,948.8 942,951.1 942,943.9 942,957.1 942,947.6 943,944.9 943,942.9 943,958.7 943,948.2 944,947.9 944,943.6 944,953 944,946.3 945,945 945,915.8 945,957.6 945,947.6 946,946.1 946,940.9 946,954.7 946,946.5 947,948.5 947,941.3 947,953.4 947,951.5 948,946.1 948,942.4 948,953.6 948,949 949,945.1 949,942.5 949,952.4 949,950.8 950,951.5 950,942.8 950,955.2 950,947.4 951,945.7 951,938.4 951,953.9 951,945.3 952,946.8 952,944.1 952,952.3 952,946.1 953,949.1 953,894 953,952.6 953,951.8 954,951.1 954,941.1 954,954.3 954,954.1 955,948.8 955,940.5 955,954.6 955,949 956,942.6 956,942 956,953.6 956,946.2 957,947.2 957,942.3 957,955.4 957,945.4 958,950.7 958,940.4 958,956.5 958,956.5 959,948.2 959,941.4 959,953.3 959,948.1 960,950.1 960,927 960,952.8 960,951.3 961,949.8 961,941.6 961,954.2 961,946.8 962,946.9 962,943.7 962,954.8 962,947.9 963,948.8 963,943 963,952.8 963,950.2 964,948.1 964,942.6 964,952.6 964,949.4 965,943.9 965,941.1 965,953.3 965,948.4 966,943 966,939.4 966,954.4 966,947.1 967,954.9 967,921 967,954.9 967,947.5 968,942.8 968,941 968,954.4 968,946.3 969,951.3 969,941.9 969,957.9 969,950.3 970,946.5 970,941.9 970,952.2 970,952.1 971,949 971,940.5 971,954.8 971,947.4 972,947.4 972,941 972,956.5 972,946.7 973,949.2 973,943.2 973,952.6 973,947.9 974,945.8 974,938.7 974,956.8 974,946.7 975,951.5 975,941.4 975,954.7 975,948 976,947.5 976,940.2 976,953 976,949.1 977,951.5 977,929 977,952.2 977,942.2 978,944 978,942.9 978,953.5 978,951 979,947.4 979,941 979,953.6 979,946.8 980,950.4 980,888.3 980,953.7 980,947.9 981,950.2 981,941.4 981,953.9 981,948.7 982,947.8 982,940.6 982,953.3 982,948.3 983,945.1 983,942 983,956.2 983,949.3 984,941.3 984,941.3 984,953.5 984,942.8 985,944.8 985,938.7 985,956.1 985,943 986,946.1 986,940.7 986,953.7 986,946.8 987,947.7 987,922 987,952.8 987,947.5 988,944.6 988,940.7 988,954.2 988,946.7 989,947 989,939.9 989,961 989,946.8 990,950.8 990,941.1 990,953.7 990,947.1 991,950.9 991,940.7 991,952.9 991,946.2 992,949.4 992,940.2 992,953.6 992,952 993,953.9 993,937.9 993,955.2 993,944.1 994,942 994,941.1 994,951.5 994,948.8 995,945.5 995,940.3 995,954.6 995,948.9 996,948.3 996,927 996,953.2 996,947.9 997,946.2 997,942.3 997,954.1 997,954.1 998,948.1 998,939.6 998,956.8 998,947.4 999,947.5 999,941 999,952.7 999,948.7 1000,949.3 1000,928 1000,953.7 1000,945.8 1001,947.4 1001,939.2 1001,953.9 1001,946.6 1002,952.1 1002,938.9 1002,952.5 1002,944.5 1003,944 1003,943 1003,954.3 1003,943.5 1004,947.7 1004,890 1004,955.5 1004,947.1 1005,946.4 1005,941.7 1005,952.8 1005,944.7 1006,948.5 1006,940.1 1006,958.6 1006,948 1007,951.8 1007,939.5 1007,953.1 1007,947 1008,948.2 1008,939.8 1008,953.4 1008,947.7 1009,957.4 1009,941.9 1009,957.6 1009,946.9 1010,949.9 1010,941.2 1010,956.3 1010,942.3 1011,946.2 1011,939.7 1011,954.3 1011,953.6 1012,956.8 1012,939.8 1012,956.8 1012,942.2 1013,941.2 1013,912 1013,955 1013,943.1 1014,943.7 1014,940 1014,952.9 1014,949.4 1015,947.6 1015,939.3 1015,953.8 1015,950.2 1016,938.8 1016,938.6 1016,957.1 1016,940 1017,947.6 1017,940.2 1017,951.5 1017,950 1018,946.1 1018,939.3 1018,953.3 1018,949.5 1019,943.6 1019,941.2 1019,957 1019,952.5 1020,947.9 1020,939.3 1020,954.6 1020,944.5 1021,949.4 1021,930 1021,956.6 1021,946.7 1022,946.3 1022,942 1022,954.1 1022,950.3 1023,953.3 1023,939.6 1023,957.4 1023,949.4 1024,946.9 1024,939.8 1024,954.4 1024,942.2 1025,948.4 1025,902 1025,953.7 1025,951.7 1026,947.4 1026,940.2 1026,954.9 1026,943.9 1027,946.5 1027,940.3 1027,952 1027,952 1028,948.8 1028,938.5 1028,955.3 1028,945.5 1029,948.5 1029,940.1 1029,955.7 1029,948.5 1030,947 1030,941.2 1030,955.4 1030,947.2 1031,947.1 1031,939.2 1031,955.6 1031,946.1 1032,950.9 1032,941.1 1032,951.9 1032,951.9 1033,951.6 1033,939.2 1033,955.3 1033,945.9 1034,946 1034,938.8 1034,954.4 1034,942 1035,947.1 1035,938.5 1035,951.9 1035,946 1036,945 1036,938.6 1036,956.8 1036,943.2 1037,939.8 1037,938.6 1037,953.6 1037,946.6 1038,946.5 1038,937.3 1038,953.9 1038,945 1039,945.7 1039,939.3 1039,960 1039,945.9 1040,945.3 1040,940.9 1040,954.1 1040,943.9 1041,946.1 1041,938.7 1041,954.3 1041,947.8 1042,952 1042,940.1 1042,956.9 1042,945.6 1043,946.3 1043,921 1043,954.8 1043,943 1044,941.8 1044,938 1044,951.1 1044,940 1045,945.9 1045,939.9 1045,956.1 1045,940.9 1046,941.6 1046,939.8 1046,953.4 1046,943.9 1047,945.8 1047,938.6 1047,951.9 1047,943.9 1048,945.5 1048,939.4 1048,953.6 1048,945.8 1049,942.6 1049,938 1049,955.8 1049,948 1050,948.2 1050,932 1050,952.5 1050,942.6 1051,952.6 1051,937.7 1051,954.6 1051,949.3 1052,942.3 1052,938.7 1052,952.4 1052,938.7 1053,945.5 1053,939.3 1053,955.4 1053,947.1 1054,944.4 1054,938.7 1054,951.8 1054,943.1 1055,949.1 1055,938.7 1055,952.7 1055,949.9 1056,947.1 1056,938.8 1056,955.4 1056,940.9 1057,944.1 1057,928.4 1057,956.2 1057,951 1058,947.6 1058,938.5 1058,953.6 1058,943 1059,948.4 1059,937.6 1059,953 1059,945.7 1060,951.1 1060,938.8 1060,959.9 1060,942.6 1061,945.1 1061,899.8 1061,953 1061,899.8 1062,942.1 1062,938.8 1062,953.5 1062,944 1063,950.6 1063,935.8 1063,955.2 1063,943 1064,944.6 1064,938.1 1064,955.2 1064,948.2 1065,945 1065,939.7 1065,952.9 1065,947.3 1066,942.3 1066,937.4 1066,952.8 1066,944.5 1067,944.2 1067,939.6 1067,957.7 1067,945.4 1068,945.9 1068,939.3 1068,951.7 1068,948 1069,949.2 1069,938.4 1069,953.1 1069,940.4 1070,941.1 1070,927 1070,954 1070,941.2 1071,949.1 1071,939.9 1071,952.7 1071,946.4 1072,943.4 1072,939.5 1072,956.6 1072,941.1 1073,939.9 1073,937.7 1073,952.5 1073,949.7 1074,945 1074,938.4 1074,951.1 1074,947.9 1075,947.4 1075,938.5 1075,953.3 1075,948.2 1076,941.1 1076,938 1076,955.2 1076,941.2 1077,938.7 1077,937.3 1077,955.9 1077,950.1 1078,945.7 1078,894 1078,951.9 1078,943.6 1079,952.3 1079,937.4 1079,952.3 1079,941.3 1080,942.4 1080,938.5 1080,957.8 1080,950.4 1081,950.9 1081,923 1081,953.4 1081,944.1 1082,943.5 1082,936.9 1082,954 1082,943.4 1083,943.2 1083,936.2 1083,951.5 1083,947.6 1084,949 1084,937.3 1084,953.7 1084,946 1085,941.5 1085,938.2 1085,956.1 1085,945.7 1086,949.1 1086,915.8 1086,951.8 1086,948.1 1087,944.8 1087,939.8 1087,956 1087,948.4 1088,947.2 1088,938.1 1088,956.2 1088,944.6 1089,947.8 1089,938.7 1089,957.7 1089,944.8 1090,943.9 1090,935.6 1090,952.6 1090,950.8 1091,945.7 1091,898 1091,957.8 1091,947.8 1092,947.7 1092,935 1092,953.7 1092,943.6 1093,946.1 1093,938.5 1093,954.5 1093,944.9 1094,948.2 1094,939.2 1094,954 1094,946.5 1095,944.3 1095,936.3 1095,954.3 1095,947.5 1096,949.9 1096,938 1096,959.5 1096,947.3 1097,949.8 1097,936.2 1097,955.7 1097,948.8 1098,944.2 1098,939.1 1098,952.1 1098,951.3 1099,948.9 1099,938.8 1099,952.2 1099,946 1100,944.1 1100,936.7 1100,952.3 1100,944 1101,942.3 1101,938 1101,955.3 1101,943.5 1102,942.7 1102,936.1 1102,952.6 1102,947.2 1103,942.4 1103,937 1103,952 1103,944 1104,937.4 1104,910.8 1104,953 1104,945.1 1105,947.1 1105,936 1105,952.8 1105,941.9 1106,947.9 1106,938.8 1106,953.3 1106,943.3 1107,945.6 1107,926.8 1107,955.7 1107,940.9 1108,940.6 1108,938.4 1108,953.1 1108,940.1 1109,944.4 1109,935 1109,955.1 1109,945.6 1110,946.7 1110,938.3 1110,954.6 1110,943.6 1111,943.8 1111,935.5 1111,957.2 1111,941.1 1112,941.9 1112,937.3 1112,955.3 1112,944.5 1113,946.5 1113,937.8 1113,954.6 1113,945.7 1114,941.9 1114,936.8 1114,956.8 1114,947.3 1115,942.1 1115,938.3 1115,952.5 1115,945 1116,945.2 1116,926 1116,954.3 1116,936.9 1117,943.7 1117,936.6 1117,955.3 1117,946.1 1118,942.2 1118,936.4 1118,953.1 1118,941.8 1119,948.2 1119,939.3 1119,954.1 1119,940.3 1120,944.7 1120,935.9 1120,952.3 1120,946.4 1121,943.7 1121,935.5 1121,951.4 1121,940.7 1122,943 1122,936.5 1122,951.7 1122,947.8 1123,948.4 1123,936 1123,952.3 1123,943.7 1124,944 1124,935.6 1124,957.5 1124,950.2 1125,940.4 1125,935 1125,954 1125,943.3 1126,949.4 1126,937.6 1126,952.6 1126,945.7 1127,947.2 1127,937.1 1127,951 1127,945.4 1128,943.8 1128,904.8 1128,955.5 1128,904.8 1129,940.5 1129,936.3 1129,954.4 1129,940.5 1130,940.3 1130,937.1 1130,954.8 1130,942.8 1131,943.1 1131,936.6 1131,953.1 1131,950.8 1132,946.5 1132,936 1132,952.1 1132,936.4 1133,938.5 1133,926 1133,954.7 1133,946.5 1134,941.2 1134,935.2 1134,952.3 1134,947.5 1135,940.3 1135,936.2 1135,953.2 1135,942.9 1136,941.4 1136,938.2 1136,952 1136,944.3 1137,946.4 1137,915.8 1137,950.6 1137,941.7 1138,945.3 1138,937.5 1138,951.1 1138,941.4 1139,942.7 1139,901 1139,951.3 1139,901 1140,944 1140,935.2 1140,954.4 1140,945.4 1141,944.3 1141,926 1141,954.2 1141,941 1142,942.6 1142,934.8 1142,952.7 1142,948.1 1143,945.5 1143,935.5 1143,950.6 1143,941.2 1144,946.3 1144,936.9 1144,952.2 1144,945.1 1145,938.3 1145,937.1 1145,951.8 1145,940.8 1146,947.8 1146,934.5 1146,952.3 1146,944.9 1147,942.3 1147,936.3 1147,954.1 1147,940.2 1148,944.8 1148,935.1 1148,954.4 1148,940.3 1149,940 1149,904 1149,953.6 1149,939.3 1150,941.1 1150,936.1 1150,951.1 1150,939.2 1151,952.7 1151,936 1151,952.7 1151,941.2 1152,946.5 1152,936.7 1152,952.2 1152,944 1153,941.5 1153,937.3 1153,953.4 1153,941 1154,947.7 1154,934.5 1154,954.7 1154,943 1155,948.8 1155,936.3 1155,953.3 1155,946.2 1156,943 1156,938.1 1156,954.4 1156,946.3 1157,942.2 1157,933.7 1157,950.2 1157,947.6 1158,942.5 1158,934.7 1158,952.1 1158,940.4 1159,941.4 1159,917.6 1159,957.7 1159,942.8 1160,942.4 1160,936.4 1160,960.4 1160,943.2 1161,942.2 1161,935.4 1161,954.2 1161,945.5 1162,947.5 1162,932.2 1162,951.8 1162,943.7 1163,948.2 1163,936.5 1163,956.8 1163,937.7 1164,945.2 1164,936.3 1164,950.5 1164,942.9 1165,944 1165,935.8 1165,956.7 1165,946.2 1166,946.4 1166,933.9 1166,950.3 1166,941.6 1167,949 1167,934.4 1167,961.6 1167,961.6 1168,938 1168,927.7 1168,953.8 1168,938 1169,944.6 1169,932.8 1169,952.8 1169,943.2 1170,942.6 1170,936 1170,951.8 1170,941.9 1171,943.8 1171,935.1 1171,956.2 1171,945.1 1172,943.1 1172,935.5 1172,954.2 1172,941.9 1173,950 1173,933.1 1173,951.6 1173,936.9 1174,939.8 1174,926.8 1174,949.4 1174,947.1 1175,939.3 1175,935.3 1175,952.7 1175,944.4 1176,946.6 1176,935.2 1176,951.2 1176,941.8 1177,943.9 1177,909 1177,952.4 1177,939.4 1178,943.4 1178,936.4 1178,952.3 1178,941.2 1179,941.5 1179,934.7 1179,953 1179,946 1180,942.4 1180,933.8 1180,952.2 1180,942.3 1181,941.1 1181,934.5 1181,952.4 1181,943.9 1182,947 1182,933.2 1182,951.9 1182,943.2 1183,946.9 1183,934.7 1183,953.8 1183,945.1 1184,942.1 1184,936.1 1184,952.2 1184,939.7 1185,946.2 1185,905 1185,950.8 1185,939 1186,937.9 1186,932.5 1186,951.4 1186,941.2 1187,942.5 1187,935.1 1187,951.4 1187,939.6 1188,943.5 1188,934.4 1188,952.6 1188,947.2 1189,941.2 1189,934.9 1189,951.2 1189,939.2 1190,942.8 1190,932.4 1190,951.9 1190,943.3 1191,940.2 1191,936.1 1191,952 1191,944.7 1192,940.9 1192,935.2 1192,953.7 1192,946.8 1193,936.9 1193,910 1193,949.8 1193,942.9 1194,942.1 1194,933.8 1194,952.3 1194,940.5 1195,939.7 1195,935 1195,952.4 1195,941.6 1196,946.1 1196,934.8 1196,951.9 1196,939.3 1197,940.9 1197,933 1197,951 1197,944.5 1198,945.1 1198,935.3 1198,949.7 1198,942.9 1199,946.9 1199,935.7 1199,951.9 1199,945.7 1200,941 1200,934.4 1200,955 1200,937 1201,944.2 1201,924 1201,951.3 1201,946.2 1202,942.9 1202,933.1 1202,952.4 1202,940.4 1203,936 1203,934.7 1203,951 1203,942.6 1204,944.8 1204,934.2 1204,954 1204,944.6 1205,943.1 1205,935 1205,953.4 1205,941.8 1206,939.6 1206,935.2 1206,951.7 1206,938.6 1207,940.5 1207,934.9 1207,952.6 1207,940 1208,946 1208,925 1208,951.5 1208,944.4 1209,948.9 1209,934.6 1209,950.8 1209,941.7 1210,940.8 1210,924.5 1210,952.6 1210,924.5 1211,940.4 1211,934.7 1211,949.5 1211,944.2 1212,946.2 1212,933.5 1212,952.5 1212,941.7 1213,943.2 1213,934.4 1213,950.4 1213,946.2 1214,940 1214,932.5 1214,951.9 1214,945.9 1215,944 1215,912.8 1215,954.5 1215,940 1216,940.6 1216,932.2 1216,955.3 1216,942.7 1217,937.9 1217,933.8 1217,956.1 1217,941.6 1218,939.7 1218,933.4 1218,952.4 1218,941.8 1219,944 1219,931.1 1219,951.1 1219,946.8 1220,941.3 1220,933.3 1220,951.8 1220,939.6 1221,940.1 1221,934.1 1221,951.8 1221,945 1222,943.2 1222,910 1222,951.9 1222,939.5 1223,941.6 1223,933.2 1223,952 1223,940.9 1224,946.8 1224,935.1 1224,950.7 1224,944 1225,942.5 1225,932.8 1225,956.3 1225,942 1226,943.1 1226,934.7 1226,952.3 1226,949.5 1227,942.3 1227,933.1 1227,955.3 1227,940.4 1228,938.7 1228,913 1228,950.9 1228,943 1229,943.5 1229,934 1229,953.2 1229,943.2 1230,941 1230,932.7 1230,950.2 1230,945 1231,940.8 1231,913 1231,953.7 1231,948.9 1232,945.7 1232,934.9 1232,949.9 1232,938.3 1233,941.9 1233,906.7 1233,951.3 1233,945.5 1234,945.9 1234,933.7 1234,950.6 1234,943.6 1235,944.7 1235,932.2 1235,956.1 1235,941.4 1236,944.8 1236,920.4 1236,951 1236,945.8 1237,943.6 1237,932.7 1237,950.5 1237,943.3 1238,944.4 1238,933.8 1238,950.5 1238,941 1239,936 1239,934.3 1239,950.8 1239,936 1240,942.9 1240,931.2 1240,953.9 1240,945.3 1241,939.2 1241,932.8 1241,953.5 1241,942.4 1242,946.2 1242,935.2 1242,950.4 1242,938.2 1243,938.3 1243,932.2 1243,952.9 1243,948 1244,950.2 1244,932.6 1244,951.9 1244,943.1 1245,943.6 1245,931.7 1245,952.6 1245,938.4 1246,940 1246,915 1246,951.7 1246,915 1247,941.6 1247,931.2 1247,950.5 1247,942.2 1248,940.6 1248,930.5 1248,951.8 1248,942.9 1249,938.1 1249,934.2 1249,952.2 1249,935.4 1250,936.8 1250,929.4 1250,951.5 1250,939.5 1251,936.4 1251,933.4 1251,949.4 1251,941.2 1252,937 1252,913 1252,950.6 1252,933.7 1253,936.8 1253,932.4 1253,951.3 1253,948.3 1254,941.4 1254,932.6 1254,951 1254,945.1 1255,945.2 1255,932.8 1255,951.6 1255,944 1256,938 1256,932.3 1256,949.2 1256,939 1257,941 1257,933.7 1257,950.3 1257,940.2 1258,919.7 1258,919.7 1258,952.7 1258,939.1 1259,938.3 1259,931.6 1259,954.4 1259,938.1 1260,932.5 1260,932.5 1260,949.9 1260,941.8 1261,938.1 1261,932.5 1261,953.7 1261,935.8 1262,944 1262,932.5 1262,950.8 1262,944.3 1263,944 1263,930.8 1263,953.5 1263,942 1264,942.7 1264,933.2 1264,950.3 1264,942.8 1265,942.9 1265,931.4 1265,952.2 1265,939.3 1266,944.7 1266,933.5 1266,953.1 1266,936.2 1267,941.6 1267,930.5 1267,949.2 1267,938.5 1268,941.4 1268,932.6 1268,952.4 1268,940.8 1269,938.1 1269,929.2 1269,953.1 1269,937.2 1270,944 1270,931.4 1270,951.9 1270,939 1271,935.4 1271,930.7 1271,954 1271,940.2 1272,941.9 1272,932.8 1272,951 1272,937 1273,943 1273,933.1 1273,951.1 1273,949.4 1274,918.8 1274,918.8 1274,951.5 1274,938.3 1275,941.5 1275,932 1275,948.8 1275,932 1276,938.4 1276,932.7 1276,950.3 1276,943.6 1277,939.1 1277,931.6 1277,951 1277,942.3 1278,940.4 1278,917 1278,950.5 1278,940 1279,936.7 1279,932.3 1279,951.7 1279,944 1280,940.7 1280,931.9 1280,949.4 1280,947.8 1281,940.2 1281,930.6 1281,952.2 1281,942.7 1282,938.1 1282,930.6 1282,951.5 1282,940.7 1283,945.1 1283,919.7 1283,948.8 1283,935.8 1284,939.2 1284,931.3 1284,952.7 1284,942 1285,940.9 1285,931.6 1285,950.1 1285,941.5 1286,941 1286,929.8 1286,949.7 1286,937.6 1287,936.9 1287,932.3 1287,955.9 1287,948 1288,947.2 1288,930.7 1288,951.3 1288,943.8 1289,938.7 1289,931.4 1289,950 1289,939.6 1290,937.7 1290,932.2 1290,950 1290,944.8 1291,939.6 1291,928.7 1291,950.4 1291,941 1292,938.9 1292,931.6 1292,951.3 1292,938 1293,936.9 1293,928.4 1293,950.9 1293,944 1294,946.3 1294,930.3 1294,952.5 1294,940.9 1295,946.1 1295,931.8 1295,952.1 1295,936.6 1296,939.9 1296,918 1296,952.7 1296,938.8 1297,940 1297,931.1 1297,949.4 1297,931.5 1298,942.7 1298,931.5 1298,947.6 1298,938 1299,938.7 1299,932.2 1299,954.9 1299,937.3 1300,938.4 1300,929.2 1300,950.8 1300,941.6 1301,934.3 1301,917.7 1301,950.5 1301,942.9 1302,937.8 1302,932.1 1302,950.9 1302,942.7 1303,938.9 1303,932.6 1303,951.7 1303,937.3 1304,937.7 1304,929.3 1304,952 1304,938.2 1305,938 1305,933.1 1305,953.5 1305,939 1306,940.7 1306,925 1306,952.3 1306,937.6 1307,942.5 1307,931.7 1307,953.6 1307,939.3 1308,943.1 1308,930.6 1308,953.4 1308,936.1 1309,940.6 1309,930.7 1309,950.7 1309,944.1 1310,938.5 1310,931.5 1310,948.1 1310,942.5 1311,937.6 1311,926 1311,953.7 1311,940.4 1312,938.2 1312,930.4 1312,951.1 1312,945.1 1313,939.5 1313,932.6 1313,953 1313,945.9 1314,943.7 1314,931.4 1314,952.9 1314,938.7 1315,945 1315,932.1 1315,951.8 1315,942.1 1316,946.2 1316,930.4 1316,951.2 1316,942.7 1317,940.7 1317,924 1317,950.7 1317,938.5 1318,948.1 1318,930.4 1318,950.4 1318,941.5 1319,936.8 1319,932 1319,951.3 1319,935.7 1320,939.2 1320,931.7 1320,952.2 1320,943.6 1321,941.1 1321,925 1321,954.2 1321,947.4 1322,940.7 1322,933.1 1322,952.1 1322,938.3 1323,944.1 1323,931.8 1323,949.5 1323,946.8 1324,938.9 1324,932.4 1324,952.7 1324,944.7 1325,943 1325,931.8 1325,950.2 1325,938.2 1326,945.7 1326,932.4 1326,949.8 1326,937.1 1327,940.9 1327,930.5 1327,950.7 1327,933.2 1328,937 1328,932.3 1328,949.3 1328,949.3 1327,957"/></svg>
<svg class="a" style="left:1307px;top:629px" width="20" height="12"><text x="0" y="11.800" font-family="Liberation Sans,sans-serif" font-weight="bold" font-size="16" fill="#fff" textLength="19.500" lengthAdjust="spacingAndGlyphs">MI</text><path d="M0 1.500h20M0 3.500h20M0 5.500h20" stroke="#000" stroke-width="1"/></svg>
<span class="t" style="left:15.00px;top:602px;font-size:9.6px;line-height:11px;color:#0ff;font-weight:bold;transform:scaleX(1.1721);transform-origin:0 50%;">A(dBFS)</span>
<span class="t" style="left:269.00px;top:602px;font-size:9.6px;line-height:11px;color:#0ff;font-weight:bold;transform:scaleX(1.1451);transform-origin:0 50%;">A: Peak Frequency=</span>
<span class="t" style="left:383.50px;top:602px;font-size:9.6px;line-height:11px;color:#0ff;font-weight:bold;transform:scaleX(1.0939);transform-origin:0 50%;">1000.000</span>
<span class="t" style="left:442.20px;top:602px;font-size:9.6px;line-height:11px;color:#0ff;font-weight:bold;transform:scaleX(1.2103);transform-origin:0 50%;">Hz</span>
<span class="t" style="left:461.50px;top:602px;font-size:9.6px;line-height:11px;color:#0ff;font-weight:bold;transform:scaleX(1.1367);transform-origin:0 50%;">THD=</span>
<span class="t" style="left:505.00px;top:602px;font-size:9.6px;line-height:11px;color:#0ff;font-weight:bold;transform:scaleX(1.1319);transform-origin:0 50%;">0.06869 % (</span>
<span class="t" style="left:575.30px;top:602px;font-size:9.6px;line-height:11px;color:#0ff;font-weight:bold;transform:scaleX(1.1442);transform-origin:0 50%;">-63.26 dB)</span>
<span class="t" style="left:634.30px;top:602px;font-size:9.6px;line-height:11px;color:#0ff;font-weight:bold;transform:scaleX(1.1274);transform-origin:0 50%;">THD+N=</span>
<span class="t" style="left:692.80px;top:602px;font-size:9.6px;line-height:11px;color:#0ff;font-weight:bold;transform:scaleX(1.1126);transform-origin:0 50%;">1.32618 % (</span>
<span class="t" style="left:762.40px;top:602px;font-size:9.6px;line-height:11px;color:#0ff;font-weight:bold;transform:scaleX(1.1442);transform-origin:0 50%;">-37.55 dB)</span>
<span class="t" style="left:822.20px;top:602px;font-size:9.6px;line-height:11px;color:#0ff;font-weight:bold;transform:scaleX(1.0993);transform-origin:0 50%;">SINAD=</span>
<span class="t" style="left:876.00px;top:602px;font-size:9.6px;line-height:11px;color:#0ff;font-weight:bold;transform:scaleX(1.1117);transform-origin:0 50%;">37.55 dB</span>
<span class="t" style="left:928.00px;top:602px;font-size:9.6px;line-height:11px;color:#0ff;font-weight:bold;transform:scaleX(1.0821);transform-origin:0 50%;">SNR=</span>
<span class="t" style="left:971.00px;top:602px;font-size:9.6px;line-height:11px;color:#0ff;font-weight:bold;transform:scaleX(1.1067);transform-origin:0 50%;">37.56 dB</span>
<span class="t" style="left:1022.00px;top:602px;font-size:9.6px;line-height:11px;color:#0ff;font-weight:bold;transform:scaleX(1.1248);transform-origin:0 50%;">NL=</span>
<span class="t" style="left:1048.20px;top:602px;font-size:9.6px;line-height:11px;color:#0ff;font-weight:bold;transform:scaleX(1.1361);transform-origin:0 50%;">-109.01 dBFS</span>
<span class="t" style="left:51.80px;top:620px;font-size:9.8px;line-height:11px;color:#0ff;font-weight:bold;transform:scaleX(1.1008);transform-origin:0 50%;">0</span>
<span class="t" style="left:41.30px;top:659px;font-size:9.8px;line-height:11px;color:#0ff;font-weight:bold;transform:scaleX(1.1649);transform-origin:0 50%;">-20</span>
<span class="t" style="left:41.30px;top:698px;font-size:9.8px;line-height:11px;color:#0ff;font-weight:bold;transform:scaleX(1.1649);transform-origin:0 50%;">-40</span>
<span class="t" style="left:41.30px;top:738px;font-size:9.8px;line-height:11px;color:#0ff;font-weight:bold;transform:scaleX(1.1649);transform-origin:0 50%;">-60</span>
<span class="t" style="left:41.30px;top:777px;font-size:9.8px;line-height:11px;color:#0ff;font-weight:bold;transform:scaleX(1.1649);transform-origin:0 50%;">-80</span>
<span class="t" style="left:35.30px;top:816px;font-size:9.8px;line-height:11px;color:#0ff;font-weight:bold;transform:scaleX(1.1471);transform-origin:0 50%;">-100</span>
<span class="t" style="left:35.30px;top:855px;font-size:9.8px;line-height:11px;color:#0ff;font-weight:bold;transform:scaleX(1.1471);transform-origin:0 50%;">-120</span>
<span class="t" style="left:35.30px;top:894px;font-size:9.8px;line-height:11px;color:#0ff;font-weight:bold;transform:scaleX(1.1471);transform-origin:0 50%;">-140</span>
<span class="t" style="left:35.30px;top:934px;font-size:9.8px;line-height:11px;color:#0ff;font-weight:bold;transform:scaleX(1.1471);transform-origin:0 50%;">-160</span>
<span class="t" style="left:35.30px;top:973px;font-size:9.8px;line-height:11px;color:#0ff;font-weight:bold;transform:scaleX(1.1471);transform-origin:0 50%;">-180</span>
<span class="t" style="left:35.30px;top:1012px;font-size:9.8px;line-height:11px;color:#0ff;font-weight:bold;transform:scaleX(1.1471);transform-origin:0 50%;">-200</span>
<span class="t" style="left:53.27px;top:1021px;font-size:9.6px;line-height:11px;color:#fff;font-weight:bold;transform:scaleX(1.1706);transform-origin:0 50%;">20</span>
<span class="t" style="left:217.23px;top:1021px;font-size:9.6px;line-height:11px;color:#fff;font-weight:bold;transform:scaleX(1.1706);transform-origin:0 50%;">50</span>
<span class="t" style="left:338.00px;top:1021px;font-size:9.6px;line-height:11px;color:#fff;font-weight:bold;transform:scaleX(1.1862);transform-origin:0 50%;">100</span>
<span class="t" style="left:462.02px;top:1021px;font-size:9.6px;line-height:11px;color:#fff;font-weight:bold;transform:scaleX(1.1862);transform-origin:0 50%;">200</span>
<span class="t" style="left:625.98px;top:1021px;font-size:9.6px;line-height:11px;color:#fff;font-weight:bold;transform:scaleX(1.1862);transform-origin:0 50%;">500</span>
<span class="t" style="left:753.25px;top:1021px;font-size:9.6px;line-height:11px;color:#fff;font-weight:bold;transform:scaleX(1.1706);transform-origin:0 50%;">1k</span>
<span class="t" style="left:877.27px;top:1021px;font-size:9.6px;line-height:11px;color:#fff;font-weight:bold;transform:scaleX(1.1706);transform-origin:0 50%;">2k</span>
<span class="t" style="left:1041.23px;top:1021px;font-size:9.6px;line-height:11px;color:#fff;font-weight:bold;transform:scaleX(1.1706);transform-origin:0 50%;">5k</span>
<span class="t" style="left:1162.00px;top:1021px;font-size:9.6px;line-height:11px;color:#fff;font-weight:bold;transform:scaleX(1.1862);transform-origin:0 50%;">10k</span>
<span class="t" style="left:1286.02px;top:1021px;font-size:9.6px;line-height:11px;color:#fff;font-weight:bold;transform:scaleX(1.1862);transform-origin:0 50%;">20k</span>
<div style="left:13px;top:1030px;width:73px;height:12px;background:#fff;"></div>
<span class="t" style="left:14.00px;top:1031px;font-size:9.6px;line-height:11px;color:#000;font-weight:bold;transform:scaleX(1.1494);transform-origin:0 50%;">Zero Padding</span>
<span class="t" style="left:94.00px;top:1031px;font-size:9.6px;line-height:11px;color:#fff;font-weight:bold;transform:scaleX(1.1435);transform-origin:0 50%;">Resolution: 0.366211Hz, 0.5Hz (real)</span>
<span class="t" style="left:607.00px;top:1031px;font-size:9.6px;line-height:11px;color:#fff;font-weight:bold;transform:scaleX(1.1441);transform-origin:0 50%;">AMPLITUDE SPECTRUM in dBFS</span>
<span class="t" style="left:1175.80px;top:1031px;font-size:9.6px;line-height:11px;color:#fff;font-weight:bold;transform:scaleX(1.1492);transform-origin:0 50%;">Averaged Frames: 10</span>
<span class="t" style="left:1329.00px;top:1030px;font-size:9.6px;line-height:11px;color:#fff;font-weight:bold;transform:scaleX(1.1762);transform-origin:0 50%;">Hz</span>
<div style="left:0px;top:1055px;width:1920px;height:23px;background:#f0f0f0;border-top:1px solid #fff"></div>
<div style="left:3px;top:1058px;width:1px;height:20px;background:#fff;"></div>
<div style="left:4px;top:1058px;width:1px;height:20px;background:#a0a0a0;"></div>
<span class="t" style="left:19.40px;top:1064px;font-size:12.7px;line-height:14px;color:#000;">F</span>
<div class="sunk" style="left:31px;top:1058px;width:152px;height:24px;background:#fff;"></div>
<div class="btn" style="left:163px;top:1060px;width:18px;height:20px;background:#f0f0f0;"></div>
<svg class="a" style="left:163px;top:1060px" width="18" height="20"><path d="M4.5 8.0h9l-4.5 4.5z" fill="#000"/></svg>
<span class="t" style="left:35.00px;top:1064px;font-size:12.5px;line-height:14px;color:#000;letter-spacing:-0.072px;">Auto</span>
<div class="sunk" style="left:183px;top:1058px;width:120px;height:24px;background:#fff;"></div>
<div class="btn" style="left:283px;top:1060px;width:18px;height:20px;background:#f0f0f0;"></div>
<svg class="a" style="left:283px;top:1060px" width="18" height="20"><path d="M4.5 8.0h9l-4.5 4.5z" fill="#000"/></svg>
<span class="t" style="left:188.00px;top:1064px;font-size:12.5px;line-height:14px;color:#000;letter-spacing:-0.752px;">×1</span>
<span class="t" style="left:310.60px;top:1064px;font-size:12.7px;line-height:14px;color:#000;">A</span>
<div class="sunk" style="left:325px;top:1058px;width:153px;height:24px;background:#000;"></div>
<div class="btn" style="left:458px;top:1060px;width:18px;height:20px;background:#f0f0f0;"></div>
<svg class="a" style="left:458px;top:1060px" width="18" height="20"><path d="M4.5 8.0h9l-4.5 4.5z" fill="#000"/></svg>
<span class="t" style="left:329.00px;top:1064px;font-size:12.5px;line-height:14px;color:#0ff;letter-spacing:0.138px;">-200dB</span>
<div class="sunk" style="left:480px;top:1058px;width:110px;height:24px;background:#000;"></div>
<div class="btn" style="left:570px;top:1060px;width:18px;height:20px;background:#f0f0f0;"></div>
<svg class="a" style="left:570px;top:1060px" width="18" height="20"><path d="M4.5 8.0h9l-4.5 4.5z" fill="#000"/></svg>
<span class="t" style="left:484.00px;top:1064px;font-size:12.5px;line-height:14px;color:#0ff;letter-spacing:0.529px;">Off</span>
<span class="t" style="left:596.80px;top:1064px;font-size:12.7px;line-height:14px;color:#000;">M</span>
<div class="sunk" style="left:616px;top:1058px;width:307px;height:24px;background:#fff;"></div>
<div class="btn" style="left:903px;top:1060px;width:18px;height:20px;background:#f0f0f0;"></div>
<svg class="a" style="left:903px;top:1060px" width="18" height="20"><path d="M4.5 8.0h9l-4.5 4.5z" fill="#000"/></svg>
<span class="t" style="left:619.00px;top:1064px;font-size:12.5px;line-height:14px;color:#000;letter-spacing:0.320px;">Amplitude Spectrum</span>
<span class="t" style="left:930.50px;top:1064px;font-size:12.7px;line-height:14px;color:#000;">B</span>
<div class="sunk" style="left:945px;top:1058px;width:153px;height:24px;background:#000;"></div>
<div class="btn" style="left:1078px;top:1060px;width:18px;height:20px;background:#f0f0f0;"></div>
<svg class="a" style="left:1078px;top:1060px" width="18" height="20"><path d="M4.5 8.0h9l-4.5 4.5z" fill="#a0a0a0"/></svg>
<span class="t" style="left:949.00px;top:1064px;font-size:12.5px;line-height:14px;color:#808080;letter-spacing:0.529px;">Off</span>
<div class="sunk" style="left:1100px;top:1058px;width:110px;height:24px;background:#000;"></div>
<div class="btn" style="left:1190px;top:1060px;width:18px;height:20px;background:#f0f0f0;"></div>
<svg class="a" style="left:1190px;top:1060px" width="18" height="20"><path d="M4.5 8.0h9l-4.5 4.5z" fill="#a0a0a0"/></svg>
<span class="t" style="left:1104.00px;top:1064px;font-size:12.5px;line-height:14px;color:#808080;letter-spacing:0.529px;">Off</span>
<span class="t" style="left:1224.40px;top:1064px;font-size:12.7px;line-height:14px;color:#000;transform:scaleX(0.7734);transform-origin:0 50%;">FFT</span>
<div class="sunk" style="left:1257px;top:1058px;width:158px;height:24px;background:#fff;"></div>
<div class="btn" style="left:1395px;top:1060px;width:18px;height:20px;background:#f0f0f0;"></div>
<svg class="a" style="left:1395px;top:1060px" width="18" height="20"><path d="M4.5 8.0h9l-4.5 4.5z" fill="#000"/></svg>
<span class="t" style="left:1261.00px;top:1064px;font-size:12.5px;line-height:14px;color:#000;letter-spacing:-0.043px;">131072</span>
<span class="t" style="left:1436.20px;top:1064px;font-size:12.7px;line-height:14px;color:#000;letter-spacing:0.235px;">WND</span>
<div class="sunk" style="left:1489px;top:1058px;width:270px;height:24px;background:#fff;"></div>
<div class="btn" style="left:1739px;top:1060px;width:18px;height:20px;background:#f0f0f0;"></div>
<svg class="a" style="left:1739px;top:1060px" width="18" height="20"><path d="M4.5 8.0h9l-4.5 4.5z" fill="#000"/></svg>
<span class="t" style="left:1493.00px;top:1064px;font-size:12.5px;line-height:14px;color:#000;letter-spacing:0.163px;">Kaiser 6</span>
<div class="sunk" style="left:1761px;top:1058px;width:156px;height:24px;background:#f0f0f0;"></div>
<div class="btn" style="left:1897px;top:1060px;width:18px;height:20px;background:#f0f0f0;"></div>
<svg class="a" style="left:1897px;top:1060px" width="18" height="20"><path d="M4.5 8.0h9l-4.5 4.5z" fill="#a0a0a0"/></svg>
<span class="t" style="left:1765.00px;top:1064px;font-size:12.5px;line-height:14px;color:#808080;letter-spacing:-2.066px;">0%</span>
</body></html>
